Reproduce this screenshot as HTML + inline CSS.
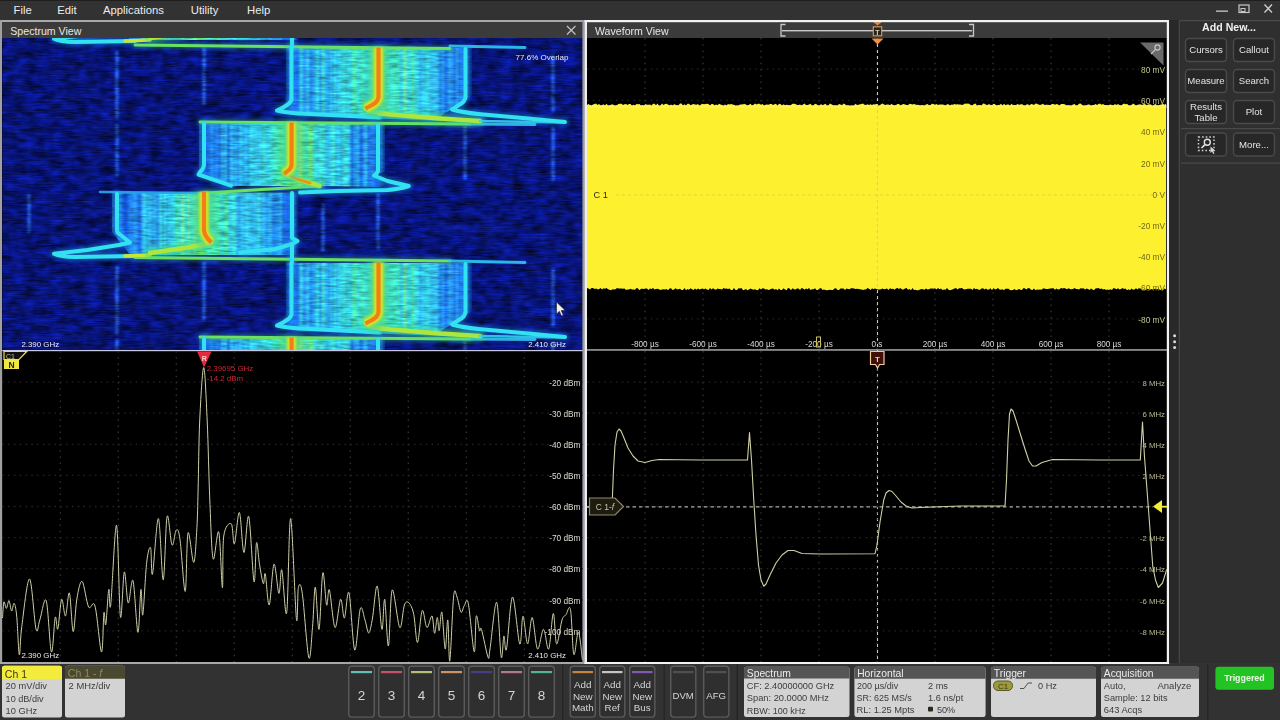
<!DOCTYPE html>
<html><head><meta charset="utf-8"><style>
html,body{margin:0;padding:0;background:#333;overflow:hidden;width:1280px;height:720px}
svg{display:block;font-family:"Liberation Sans", sans-serif}
</style></head><body>
<svg width="1280" height="720" viewBox="0 0 1280 720">
<defs>

<filter id="texbg" x="0" y="0" width="1" height="1" filterUnits="objectBoundingBox" color-interpolation-filters="sRGB">
  <feTurbulence type="fractalNoise" baseFrequency="0.08 0.12" numOctaves="2" seed="11" result="n1"/>
  <feTurbulence type="fractalNoise" baseFrequency="0.06 0.7" numOctaves="2" seed="4" result="n2"/>
  <feComposite in="n1" in2="n2" operator="arithmetic" k1="0" k2="0.55" k3="0.45" k4="0" result="n"/>
  <feColorMatrix in="n" type="matrix" values="1 0 0 0 0  1 0 0 0 0  1 0 0 0 0  0 0 0 0 1" result="g"/>
  <feComposite in="SourceGraphic" in2="g" operator="arithmetic" k1="2.2" k2="-0.2" k3="0" k4="0"/>
</filter>
<filter id="texbr" x="0" y="0" width="1280" height="720" filterUnits="userSpaceOnUse" color-interpolation-filters="sRGB">
  <feTurbulence type="fractalNoise" baseFrequency="0.1 0.2" numOctaves="2" seed="8" result="n1"/>
  <feTurbulence type="fractalNoise" baseFrequency="0.07 0.55" numOctaves="2" seed="3" result="n2"/>
  <feComposite in="n1" in2="n2" operator="arithmetic" k1="0" k2="0.4" k3="0.6" k4="0" result="n"/>
  <feColorMatrix in="n" type="matrix" values="1 0 0 0 0  1 0 0 0 0  1 0 0 0 0  0 0 0 0 1" result="g"/>
  <feComposite in="SourceGraphic" in2="g" operator="arithmetic" k1="1.15" k2="0.43" k3="0" k4="0"/>
</filter>
<filter id="blur1" filterUnits="userSpaceOnUse" x="0" y="0" width="1280" height="720"><feGaussianBlur stdDeviation="1"/></filter>
<filter id="blur2" filterUnits="userSpaceOnUse" x="0" y="0" width="1280" height="720"><feGaussianBlur stdDeviation="2"/></filter>
<filter id="blur3" filterUnits="userSpaceOnUse" x="0" y="0" width="1280" height="720"><feGaussianBlur stdDeviation="3.5"/></filter>
<filter id="blurx" filterUnits="userSpaceOnUse" x="0" y="0" width="1280" height="720"><feGaussianBlur stdDeviation="0.9 0.3"/></filter>
<filter id="blur05" filterUnits="userSpaceOnUse" x="0" y="0" width="1280" height="720"><feGaussianBlur stdDeviation="0.6"/></filter>
<linearGradient id="grA" gradientUnits="userSpaceOnUse" x1="283" y1="0" x2="478" y2="0"><stop offset="0.000" stop-color="rgb(15,45,175)" stop-opacity="0.0"/><stop offset="0.036" stop-color="rgb(28,100,220)" stop-opacity="0.8"/><stop offset="0.103" stop-color="rgb(35,135,230)" stop-opacity="1"/><stop offset="0.231" stop-color="rgb(52,185,235)" stop-opacity="1"/><stop offset="0.385" stop-color="rgb(55,208,205)" stop-opacity="1"/><stop offset="0.487" stop-color="rgb(62,216,175)" stop-opacity="1"/><stop offset="0.590" stop-color="rgb(55,208,205)" stop-opacity="1"/><stop offset="0.744" stop-color="rgb(52,185,235)" stop-opacity="1"/><stop offset="0.872" stop-color="rgb(35,135,230)" stop-opacity="1"/><stop offset="0.938" stop-color="rgb(28,100,220)" stop-opacity="0.8"/><stop offset="1.000" stop-color="rgb(15,45,175)" stop-opacity="0.0"/></linearGradient><linearGradient id="grB" gradientUnits="userSpaceOnUse" x1="196" y1="0" x2="391" y2="0"><stop offset="0.000" stop-color="rgb(15,45,175)" stop-opacity="0.0"/><stop offset="0.036" stop-color="rgb(28,100,220)" stop-opacity="0.8"/><stop offset="0.103" stop-color="rgb(35,135,230)" stop-opacity="1"/><stop offset="0.231" stop-color="rgb(52,185,235)" stop-opacity="1"/><stop offset="0.385" stop-color="rgb(55,208,205)" stop-opacity="1"/><stop offset="0.487" stop-color="rgb(62,216,175)" stop-opacity="1"/><stop offset="0.590" stop-color="rgb(55,208,205)" stop-opacity="1"/><stop offset="0.744" stop-color="rgb(52,185,235)" stop-opacity="1"/><stop offset="0.872" stop-color="rgb(35,135,230)" stop-opacity="1"/><stop offset="0.938" stop-color="rgb(28,100,220)" stop-opacity="0.8"/><stop offset="1.000" stop-color="rgb(15,45,175)" stop-opacity="0.0"/></linearGradient><linearGradient id="grC" gradientUnits="userSpaceOnUse" x1="109" y1="0" x2="304" y2="0"><stop offset="0.000" stop-color="rgb(15,45,175)" stop-opacity="0.0"/><stop offset="0.036" stop-color="rgb(28,100,220)" stop-opacity="0.8"/><stop offset="0.103" stop-color="rgb(35,135,230)" stop-opacity="1"/><stop offset="0.231" stop-color="rgb(52,185,235)" stop-opacity="1"/><stop offset="0.385" stop-color="rgb(55,208,205)" stop-opacity="1"/><stop offset="0.487" stop-color="rgb(62,216,175)" stop-opacity="1"/><stop offset="0.590" stop-color="rgb(55,208,205)" stop-opacity="1"/><stop offset="0.744" stop-color="rgb(52,185,235)" stop-opacity="1"/><stop offset="0.872" stop-color="rgb(35,135,230)" stop-opacity="1"/><stop offset="0.938" stop-color="rgb(28,100,220)" stop-opacity="0.8"/><stop offset="1.000" stop-color="rgb(15,45,175)" stop-opacity="0.0"/></linearGradient>
<clipPath id="specclip"><rect x="2.3" y="38" width="580.2" height="312"/></clipPath>
</defs>
<rect x="0" y="0" width="1280" height="720" fill="#333333"/>
<rect x="0" y="0" width="1280" height="20" fill="#323232"/>
<rect x="0" y="0" width="1280" height="1" fill="#1e1e1e"/>
<text x="13.6" y="14.2" font-size="11.3" fill="#ececec" font-weight="400" text-anchor="start" >File</text>
<text x="57.2" y="14.2" font-size="11.3" fill="#ececec" font-weight="400" text-anchor="start" >Edit</text>
<text x="103" y="14.2" font-size="11.3" fill="#ececec" font-weight="400" text-anchor="start" >Applications</text>
<text x="190.8" y="14.2" font-size="11.3" fill="#ececec" font-weight="400" text-anchor="start" >Utility</text>
<text x="247" y="14.2" font-size="11.3" fill="#ececec" font-weight="400" text-anchor="start" >Help</text>
<rect x="1216" y="10.5" width="12" height="1.3" fill="#c8c8c8"/>
<rect x="1239" y="5" width="10" height="7.5" fill="none" stroke="#c8c8c8" stroke-width="1.2"/>
<rect x="1241" y="8.5" width="4" height="3" fill="none" stroke="#c8c8c8" stroke-width="1"/>
<path d="M1264.5 4.5 L1272 12.5 M1272 4.5 L1264.5 12.5" stroke="#d0d0d0" stroke-width="1.3"/>
<rect x="0" y="20" width="585" height="2" fill="#a9a9a9"/>
<rect x="0" y="20" width="2.3" height="644" fill="#a0a0a0"/>
<rect x="2" y="22" width="581" height="16" fill="#3b3b3b"/>
<text x="10.3" y="34.6" font-size="10.6" fill="#e6e6e6" font-weight="400" text-anchor="start" >Spectrum View</text>
<path d="M567 26 L575.5 34.5 M575.5 26 L567 34.5" stroke="#c0c0c0" stroke-width="1.3"/>
<g clip-path="url(#specclip)"><g filter="url(#texbg)">
<rect x="2.3" y="38" width="580.2" height="312" fill="rgb(9,22,130)"/>
<path d="M117 -163 L117 -97" fill="none" stroke="rgb(50,120,255)" stroke-width="3.2" stroke-opacity="0.7" stroke-linecap="round" stroke-linejoin="round" filter="url(#blur1)"/>
<path d="M204 -167 L204 -111" fill="none" stroke="rgb(50,120,255)" stroke-width="3.2" stroke-opacity="0.7" stroke-linecap="round" stroke-linejoin="round" filter="url(#blur1)"/>
<path d="M553 -160 L553 -105" fill="none" stroke="rgb(50,120,255)" stroke-width="3.2" stroke-opacity="0.7" stroke-linecap="round" stroke-linejoin="round" filter="url(#blur1)"/>
<path d="M117 -90 L117 -40" fill="none" stroke="rgb(50,120,255)" stroke-width="3.2" stroke-opacity="0.7" stroke-linecap="round" stroke-linejoin="round" filter="url(#blur1)"/>
<path d="M465 -89 L465 -37" fill="none" stroke="rgb(50,120,255)" stroke-width="3.2" stroke-opacity="0.7" stroke-linecap="round" stroke-linejoin="round" filter="url(#blur1)"/>
<path d="M553 -87 L553 -35" fill="none" stroke="rgb(50,120,255)" stroke-width="3.2" stroke-opacity="0.7" stroke-linecap="round" stroke-linejoin="round" filter="url(#blur1)"/>
<path d="M29 -20 L29 17" fill="none" stroke="rgb(50,120,255)" stroke-width="3.2" stroke-opacity="0.7" stroke-linecap="round" stroke-linejoin="round" filter="url(#blur1)"/>
<path d="M323 -10 L323 35" fill="none" stroke="rgb(50,120,255)" stroke-width="3.2" stroke-opacity="0.7" stroke-linecap="round" stroke-linejoin="round" filter="url(#blur1)"/>
<path d="M378 -20 L378 33" fill="none" stroke="rgb(50,120,255)" stroke-width="3.2" stroke-opacity="0.7" stroke-linecap="round" stroke-linejoin="round" filter="url(#blur1)"/>
<path d="M117 52 L117 118" fill="none" stroke="rgb(50,120,255)" stroke-width="3.2" stroke-opacity="0.7" stroke-linecap="round" stroke-linejoin="round" filter="url(#blur1)"/>
<path d="M204 48 L204 104" fill="none" stroke="rgb(50,120,255)" stroke-width="3.2" stroke-opacity="0.7" stroke-linecap="round" stroke-linejoin="round" filter="url(#blur1)"/>
<path d="M553 55 L553 110" fill="none" stroke="rgb(50,120,255)" stroke-width="3.2" stroke-opacity="0.7" stroke-linecap="round" stroke-linejoin="round" filter="url(#blur1)"/>
<path d="M117 125 L117 175" fill="none" stroke="rgb(50,120,255)" stroke-width="3.2" stroke-opacity="0.7" stroke-linecap="round" stroke-linejoin="round" filter="url(#blur1)"/>
<path d="M465 126 L465 178" fill="none" stroke="rgb(50,120,255)" stroke-width="3.2" stroke-opacity="0.7" stroke-linecap="round" stroke-linejoin="round" filter="url(#blur1)"/>
<path d="M553 128 L553 180" fill="none" stroke="rgb(50,120,255)" stroke-width="3.2" stroke-opacity="0.7" stroke-linecap="round" stroke-linejoin="round" filter="url(#blur1)"/>
<path d="M29 195 L29 232" fill="none" stroke="rgb(50,120,255)" stroke-width="3.2" stroke-opacity="0.7" stroke-linecap="round" stroke-linejoin="round" filter="url(#blur1)"/>
<path d="M323 205 L323 250" fill="none" stroke="rgb(50,120,255)" stroke-width="3.2" stroke-opacity="0.7" stroke-linecap="round" stroke-linejoin="round" filter="url(#blur1)"/>
<path d="M378 195 L378 248" fill="none" stroke="rgb(50,120,255)" stroke-width="3.2" stroke-opacity="0.7" stroke-linecap="round" stroke-linejoin="round" filter="url(#blur1)"/>
<path d="M117 267 L117 333" fill="none" stroke="rgb(50,120,255)" stroke-width="3.2" stroke-opacity="0.7" stroke-linecap="round" stroke-linejoin="round" filter="url(#blur1)"/>
<path d="M204 263 L204 319" fill="none" stroke="rgb(50,120,255)" stroke-width="3.2" stroke-opacity="0.7" stroke-linecap="round" stroke-linejoin="round" filter="url(#blur1)"/>
<path d="M553 270 L553 325" fill="none" stroke="rgb(50,120,255)" stroke-width="3.2" stroke-opacity="0.7" stroke-linecap="round" stroke-linejoin="round" filter="url(#blur1)"/>
<path d="M117 340 L117 390" fill="none" stroke="rgb(50,120,255)" stroke-width="3.2" stroke-opacity="0.7" stroke-linecap="round" stroke-linejoin="round" filter="url(#blur1)"/>
<path d="M465 341 L465 393" fill="none" stroke="rgb(50,120,255)" stroke-width="3.2" stroke-opacity="0.7" stroke-linecap="round" stroke-linejoin="round" filter="url(#blur1)"/>
<path d="M553 343 L553 395" fill="none" stroke="rgb(50,120,255)" stroke-width="3.2" stroke-opacity="0.7" stroke-linecap="round" stroke-linejoin="round" filter="url(#blur1)"/>
<path d="M29 410 L29 447" fill="none" stroke="rgb(50,120,255)" stroke-width="3.2" stroke-opacity="0.7" stroke-linecap="round" stroke-linejoin="round" filter="url(#blur1)"/>
<path d="M323 420 L323 465" fill="none" stroke="rgb(50,120,255)" stroke-width="3.2" stroke-opacity="0.7" stroke-linecap="round" stroke-linejoin="round" filter="url(#blur1)"/>
<path d="M378 410 L378 463" fill="none" stroke="rgb(50,120,255)" stroke-width="3.2" stroke-opacity="0.7" stroke-linecap="round" stroke-linejoin="round" filter="url(#blur1)"/>
</g>
<clipPath id="clA0"><path d="M 286 -167 L 472 -167 L 472 -119 L 452 -106 L 440 -98.5 L 300 -98.5 L 276 -105 L 286 -113 Z"/></clipPath>
<clipPath id="clB0"><path d="M 199 -91.5 L 385 -91.5 L 385 -43 L 373 -40 L 390 -33 L 380 -28 L 319.5 -29 L 231 -29 L 199 -41 Z"/></clipPath>
<clipPath id="clC0"><path d="M 112 -22.5 L 298 -22.5 L 298 40 L 130 40 L 112 17 Z"/></clipPath>
<clipPath id="clA215"><path d="M 286 48 L 472 48 L 472 96 L 452 109 L 440 116.5 L 300 116.5 L 276 110 L 286 102 Z"/></clipPath>
<clipPath id="clB215"><path d="M 199 123.5 L 385 123.5 L 385 172 L 373 175 L 390 182 L 380 187 L 319.5 186 L 231 186 L 199 174 Z"/></clipPath>
<clipPath id="clC215"><path d="M 112 192.5 L 298 192.5 L 298 255 L 130 255 L 112 232 Z"/></clipPath>
<clipPath id="clA430"><path d="M 286 263 L 472 263 L 472 311 L 452 324 L 440 331.5 L 300 331.5 L 276 325 L 286 317 Z"/></clipPath>
<clipPath id="clB430"><path d="M 199 338.5 L 385 338.5 L 385 387 L 373 390 L 390 397 L 380 402 L 319.5 401 L 231 401 L 199 389 Z"/></clipPath>
<clipPath id="clC430"><path d="M 112 407.5 L 298 407.5 L 298 470 L 130 470 L 112 447 Z"/></clipPath>
<g filter="url(#texbr)">
<g clip-path="url(#clA0)"><g filter="url(#blurx)">
<rect x="282" y="-169" width="2.05" height="74" fill="rgb(31,115,231)" fill-opacity="0.30"/>
<rect x="284" y="-169" width="2.05" height="74" fill="rgb(32,119,231)" fill-opacity="0.50"/>
<rect x="286" y="-169" width="2.05" height="74" fill="rgb(20,64,210)" fill-opacity="0.70"/>
<rect x="288" y="-169" width="2.05" height="74" fill="rgb(25,87,220)" fill-opacity="0.90"/>
<rect x="290" y="-169" width="2.05" height="74" fill="rgb(28,102,227)" fill-opacity="1.00"/>
<rect x="292" y="-169" width="2.05" height="74" fill="rgb(29,105,228)" fill-opacity="1.00"/>
<rect x="294" y="-169" width="2.05" height="74" fill="rgb(29,106,228)" fill-opacity="1.00"/>
<rect x="296" y="-169" width="2.05" height="74" fill="rgb(30,109,230)" fill-opacity="1.00"/>
<rect x="298" y="-169" width="2.05" height="74" fill="rgb(34,124,232)" fill-opacity="1.00"/>
<rect x="300" y="-169" width="2.05" height="74" fill="rgb(56,211,222)" fill-opacity="1.00"/>
<rect x="302" y="-169" width="2.05" height="74" fill="rgb(42,159,237)" fill-opacity="1.00"/>
<rect x="304" y="-169" width="2.05" height="74" fill="rgb(37,136,233)" fill-opacity="1.00"/>
<rect x="306" y="-169" width="2.05" height="74" fill="rgb(48,183,234)" fill-opacity="1.00"/>
<rect x="308" y="-169" width="2.05" height="74" fill="rgb(45,168,238)" fill-opacity="1.00"/>
<rect x="310" y="-169" width="2.05" height="74" fill="rgb(32,116,231)" fill-opacity="1.00"/>
<rect x="312" y="-169" width="2.05" height="74" fill="rgb(43,163,237)" fill-opacity="1.00"/>
<rect x="314" y="-169" width="2.05" height="74" fill="rgb(43,161,237)" fill-opacity="1.00"/>
<rect x="316" y="-169" width="2.05" height="74" fill="rgb(57,212,217)" fill-opacity="1.00"/>
<rect x="318" y="-169" width="2.05" height="74" fill="rgb(47,179,235)" fill-opacity="1.00"/>
<rect x="320" y="-169" width="2.05" height="74" fill="rgb(38,140,234)" fill-opacity="1.00"/>
<rect x="322" y="-169" width="2.05" height="74" fill="rgb(67,220,174)" fill-opacity="1.00"/>
<rect x="324" y="-169" width="2.05" height="74" fill="rgb(46,174,237)" fill-opacity="1.00"/>
<rect x="326" y="-169" width="2.05" height="74" fill="rgb(46,174,237)" fill-opacity="1.00"/>
<rect x="328" y="-169" width="2.05" height="74" fill="rgb(39,146,235)" fill-opacity="1.00"/>
<rect x="330" y="-169" width="2.05" height="74" fill="rgb(52,198,229)" fill-opacity="1.00"/>
<rect x="332" y="-169" width="2.05" height="74" fill="rgb(43,161,237)" fill-opacity="1.00"/>
<rect x="334" y="-169" width="2.05" height="74" fill="rgb(57,212,215)" fill-opacity="1.00"/>
<rect x="336" y="-169" width="2.05" height="74" fill="rgb(45,170,238)" fill-opacity="1.00"/>
<rect x="338" y="-169" width="2.05" height="74" fill="rgb(55,209,225)" fill-opacity="1.00"/>
<rect x="340" y="-169" width="2.05" height="74" fill="rgb(53,202,228)" fill-opacity="1.00"/>
<rect x="342" y="-169" width="2.05" height="74" fill="rgb(56,211,221)" fill-opacity="1.00"/>
<rect x="344" y="-169" width="2.05" height="74" fill="rgb(60,215,202)" fill-opacity="1.00"/>
<rect x="346" y="-169" width="2.05" height="74" fill="rgb(51,193,230)" fill-opacity="1.00"/>
<rect x="348" y="-169" width="2.05" height="74" fill="rgb(60,215,204)" fill-opacity="1.00"/>
<rect x="350" y="-169" width="2.05" height="74" fill="rgb(51,194,230)" fill-opacity="1.00"/>
<rect x="352" y="-169" width="2.05" height="74" fill="rgb(70,221,166)" fill-opacity="1.00"/>
<rect x="354" y="-169" width="2.05" height="74" fill="rgb(70,221,167)" fill-opacity="1.00"/>
<rect x="356" y="-169" width="2.05" height="74" fill="rgb(61,216,198)" fill-opacity="1.00"/>
<rect x="358" y="-169" width="2.05" height="74" fill="rgb(56,211,220)" fill-opacity="1.00"/>
<rect x="360" y="-169" width="2.05" height="74" fill="rgb(62,217,192)" fill-opacity="1.00"/>
<rect x="362" y="-169" width="2.05" height="74" fill="rgb(69,221,169)" fill-opacity="1.00"/>
<rect x="364" y="-169" width="2.05" height="74" fill="rgb(58,213,209)" fill-opacity="1.00"/>
<rect x="366" y="-169" width="2.05" height="74" fill="rgb(52,200,228)" fill-opacity="1.00"/>
<rect x="368" y="-169" width="2.05" height="74" fill="rgb(68,221,171)" fill-opacity="1.00"/>
<rect x="370" y="-169" width="2.05" height="74" fill="rgb(70,221,165)" fill-opacity="1.00"/>
<rect x="372" y="-169" width="2.05" height="74" fill="rgb(182,229,51)" fill-opacity="1.00"/>
<rect x="374" y="-169" width="2.05" height="74" fill="rgb(80,223,137)" fill-opacity="1.00"/>
<rect x="376" y="-169" width="2.05" height="74" fill="rgb(58,213,210)" fill-opacity="1.00"/>
<rect x="378" y="-169" width="2.05" height="74" fill="rgb(82,223,133)" fill-opacity="1.00"/>
<rect x="380" y="-169" width="2.05" height="74" fill="rgb(62,217,192)" fill-opacity="1.00"/>
<rect x="382" y="-169" width="2.05" height="74" fill="rgb(126,227,87)" fill-opacity="1.00"/>
<rect x="384" y="-169" width="2.05" height="74" fill="rgb(82,223,132)" fill-opacity="1.00"/>
<rect x="386" y="-169" width="2.05" height="74" fill="rgb(60,215,201)" fill-opacity="1.00"/>
<rect x="388" y="-169" width="2.05" height="74" fill="rgb(69,221,168)" fill-opacity="1.00"/>
<rect x="390" y="-169" width="2.05" height="74" fill="rgb(58,213,213)" fill-opacity="1.00"/>
<rect x="392" y="-169" width="2.05" height="74" fill="rgb(64,219,187)" fill-opacity="1.00"/>
<rect x="394" y="-169" width="2.05" height="74" fill="rgb(65,220,182)" fill-opacity="1.00"/>
<rect x="396" y="-169" width="2.05" height="74" fill="rgb(60,215,203)" fill-opacity="1.00"/>
<rect x="398" y="-169" width="2.05" height="74" fill="rgb(67,220,175)" fill-opacity="1.00"/>
<rect x="400" y="-169" width="2.05" height="74" fill="rgb(51,192,231)" fill-opacity="1.00"/>
<rect x="402" y="-169" width="2.05" height="74" fill="rgb(56,211,219)" fill-opacity="1.00"/>
<rect x="404" y="-169" width="2.05" height="74" fill="rgb(114,226,95)" fill-opacity="1.00"/>
<rect x="406" y="-169" width="2.05" height="74" fill="rgb(56,211,221)" fill-opacity="1.00"/>
<rect x="408" y="-169" width="2.05" height="74" fill="rgb(54,207,226)" fill-opacity="1.00"/>
<rect x="410" y="-169" width="2.05" height="74" fill="rgb(60,215,203)" fill-opacity="1.00"/>
<rect x="412" y="-169" width="2.05" height="74" fill="rgb(74,222,154)" fill-opacity="1.00"/>
<rect x="414" y="-169" width="2.05" height="74" fill="rgb(55,210,223)" fill-opacity="1.00"/>
<rect x="416" y="-169" width="2.05" height="74" fill="rgb(57,212,217)" fill-opacity="1.00"/>
<rect x="418" y="-169" width="2.05" height="74" fill="rgb(50,189,232)" fill-opacity="1.00"/>
<rect x="420" y="-169" width="2.05" height="74" fill="rgb(45,171,238)" fill-opacity="1.00"/>
<rect x="422" y="-169" width="2.05" height="74" fill="rgb(54,205,226)" fill-opacity="1.00"/>
<rect x="424" y="-169" width="2.05" height="74" fill="rgb(49,188,232)" fill-opacity="1.00"/>
<rect x="426" y="-169" width="2.05" height="74" fill="rgb(56,211,222)" fill-opacity="1.00"/>
<rect x="428" y="-169" width="2.05" height="74" fill="rgb(53,203,227)" fill-opacity="1.00"/>
<rect x="430" y="-169" width="2.05" height="74" fill="rgb(48,182,234)" fill-opacity="1.00"/>
<rect x="432" y="-169" width="2.05" height="74" fill="rgb(49,184,233)" fill-opacity="1.00"/>
<rect x="434" y="-169" width="2.05" height="74" fill="rgb(49,187,232)" fill-opacity="1.00"/>
<rect x="436" y="-169" width="2.05" height="74" fill="rgb(50,189,232)" fill-opacity="1.00"/>
<rect x="438" y="-169" width="2.05" height="74" fill="rgb(39,145,235)" fill-opacity="1.00"/>
<rect x="440" y="-169" width="2.05" height="74" fill="rgb(34,125,232)" fill-opacity="1.00"/>
<rect x="442" y="-169" width="2.05" height="74" fill="rgb(43,160,237)" fill-opacity="1.00"/>
<rect x="444" y="-169" width="2.05" height="74" fill="rgb(31,115,231)" fill-opacity="1.00"/>
<rect x="446" y="-169" width="2.05" height="74" fill="rgb(31,113,230)" fill-opacity="1.00"/>
<rect x="448" y="-169" width="2.05" height="74" fill="rgb(42,158,236)" fill-opacity="1.00"/>
<rect x="450" y="-169" width="2.05" height="74" fill="rgb(41,152,236)" fill-opacity="1.00"/>
<rect x="452" y="-169" width="2.05" height="74" fill="rgb(36,134,233)" fill-opacity="1.00"/>
<rect x="454" y="-169" width="2.05" height="74" fill="rgb(29,104,227)" fill-opacity="1.00"/>
<rect x="456" y="-169" width="2.05" height="74" fill="rgb(44,166,237)" fill-opacity="1.00"/>
<rect x="458" y="-169" width="2.05" height="74" fill="rgb(30,109,230)" fill-opacity="1.00"/>
<rect x="460" y="-169" width="2.05" height="74" fill="rgb(34,125,232)" fill-opacity="1.00"/>
<rect x="462" y="-169" width="2.05" height="74" fill="rgb(29,106,228)" fill-opacity="1.00"/>
<rect x="464" y="-169" width="2.05" height="74" fill="rgb(27,94,223)" fill-opacity="1.00"/>
<rect x="466" y="-169" width="2.05" height="74" fill="rgb(23,75,215)" fill-opacity="0.90"/>
<rect x="468" y="-169" width="2.05" height="74" fill="rgb(24,81,218)" fill-opacity="0.70"/>
<rect x="470" y="-169" width="2.05" height="74" fill="rgb(23,80,217)" fill-opacity="0.50"/>
<rect x="472" y="-169" width="2.05" height="74" fill="rgb(20,63,210)" fill-opacity="0.30"/>
<rect x="474" y="-169" width="2.05" height="74" fill="rgb(27,95,224)" fill-opacity="0.10"/>
<rect x="476" y="-169" width="2.05" height="74" fill="rgb(32,119,231)" fill-opacity="0.00"/>
</g></g>
<g clip-path="url(#clB0)"><g filter="url(#blurx)">
<rect x="195" y="-94" width="2.05" height="69" fill="rgb(49,184,233)" fill-opacity="0.30"/>
<rect x="197" y="-94" width="2.05" height="69" fill="rgb(30,110,230)" fill-opacity="0.50"/>
<rect x="199" y="-94" width="2.05" height="69" fill="rgb(29,104,228)" fill-opacity="0.70"/>
<rect x="201" y="-94" width="2.05" height="69" fill="rgb(19,57,207)" fill-opacity="0.90"/>
<rect x="203" y="-94" width="2.05" height="69" fill="rgb(23,75,215)" fill-opacity="1.00"/>
<rect x="205" y="-94" width="2.05" height="69" fill="rgb(25,84,219)" fill-opacity="1.00"/>
<rect x="207" y="-94" width="2.05" height="69" fill="rgb(25,87,220)" fill-opacity="1.00"/>
<rect x="209" y="-94" width="2.05" height="69" fill="rgb(33,122,232)" fill-opacity="1.00"/>
<rect x="211" y="-94" width="2.05" height="69" fill="rgb(39,148,235)" fill-opacity="1.00"/>
<rect x="213" y="-94" width="2.05" height="69" fill="rgb(30,110,230)" fill-opacity="1.00"/>
<rect x="215" y="-94" width="2.05" height="69" fill="rgb(35,132,233)" fill-opacity="1.00"/>
<rect x="217" y="-94" width="2.05" height="69" fill="rgb(36,132,233)" fill-opacity="1.00"/>
<rect x="219" y="-94" width="2.05" height="69" fill="rgb(27,98,225)" fill-opacity="1.00"/>
<rect x="221" y="-94" width="2.05" height="69" fill="rgb(47,177,236)" fill-opacity="1.00"/>
<rect x="223" y="-94" width="2.05" height="69" fill="rgb(39,146,235)" fill-opacity="1.00"/>
<rect x="225" y="-94" width="2.05" height="69" fill="rgb(51,193,231)" fill-opacity="1.00"/>
<rect x="227" y="-94" width="2.05" height="69" fill="rgb(21,69,212)" fill-opacity="1.00"/>
<rect x="229" y="-94" width="2.05" height="69" fill="rgb(41,154,236)" fill-opacity="1.00"/>
<rect x="231" y="-94" width="2.05" height="69" fill="rgb(50,192,231)" fill-opacity="1.00"/>
<rect x="233" y="-94" width="2.05" height="69" fill="rgb(37,140,234)" fill-opacity="1.00"/>
<rect x="235" y="-94" width="2.05" height="69" fill="rgb(46,175,236)" fill-opacity="1.00"/>
<rect x="237" y="-94" width="2.05" height="69" fill="rgb(35,131,233)" fill-opacity="1.00"/>
<rect x="239" y="-94" width="2.05" height="69" fill="rgb(50,189,232)" fill-opacity="1.00"/>
<rect x="241" y="-94" width="2.05" height="69" fill="rgb(47,179,235)" fill-opacity="1.00"/>
<rect x="243" y="-94" width="2.05" height="69" fill="rgb(43,160,237)" fill-opacity="1.00"/>
<rect x="245" y="-94" width="2.05" height="69" fill="rgb(51,193,230)" fill-opacity="1.00"/>
<rect x="247" y="-94" width="2.05" height="69" fill="rgb(40,150,235)" fill-opacity="1.00"/>
<rect x="249" y="-94" width="2.05" height="69" fill="rgb(51,193,230)" fill-opacity="1.00"/>
<rect x="251" y="-94" width="2.05" height="69" fill="rgb(56,211,221)" fill-opacity="1.00"/>
<rect x="253" y="-94" width="2.05" height="69" fill="rgb(49,187,232)" fill-opacity="1.00"/>
<rect x="255" y="-94" width="2.05" height="69" fill="rgb(52,198,229)" fill-opacity="1.00"/>
<rect x="257" y="-94" width="2.05" height="69" fill="rgb(48,184,233)" fill-opacity="1.00"/>
<rect x="259" y="-94" width="2.05" height="69" fill="rgb(53,204,227)" fill-opacity="1.00"/>
<rect x="261" y="-94" width="2.05" height="69" fill="rgb(52,199,228)" fill-opacity="1.00"/>
<rect x="263" y="-94" width="2.05" height="69" fill="rgb(60,215,200)" fill-opacity="1.00"/>
<rect x="265" y="-94" width="2.05" height="69" fill="rgb(54,206,226)" fill-opacity="1.00"/>
<rect x="267" y="-94" width="2.05" height="69" fill="rgb(51,195,230)" fill-opacity="1.00"/>
<rect x="269" y="-94" width="2.05" height="69" fill="rgb(58,213,211)" fill-opacity="1.00"/>
<rect x="271" y="-94" width="2.05" height="69" fill="rgb(57,212,214)" fill-opacity="1.00"/>
<rect x="273" y="-94" width="2.05" height="69" fill="rgb(64,219,184)" fill-opacity="1.00"/>
<rect x="275" y="-94" width="2.05" height="69" fill="rgb(64,219,185)" fill-opacity="1.00"/>
<rect x="277" y="-94" width="2.05" height="69" fill="rgb(65,220,182)" fill-opacity="1.00"/>
<rect x="279" y="-94" width="2.05" height="69" fill="rgb(77,222,145)" fill-opacity="1.00"/>
<rect x="281" y="-94" width="2.05" height="69" fill="rgb(94,225,108)" fill-opacity="1.00"/>
<rect x="283" y="-94" width="2.05" height="69" fill="rgb(66,220,177)" fill-opacity="1.00"/>
<rect x="285" y="-94" width="2.05" height="69" fill="rgb(65,220,181)" fill-opacity="1.00"/>
<rect x="287" y="-94" width="2.05" height="69" fill="rgb(88,225,115)" fill-opacity="1.00"/>
<rect x="289" y="-94" width="2.05" height="69" fill="rgb(86,224,121)" fill-opacity="1.00"/>
<rect x="291" y="-94" width="2.05" height="69" fill="rgb(83,224,130)" fill-opacity="1.00"/>
<rect x="293" y="-94" width="2.05" height="69" fill="rgb(135,227,81)" fill-opacity="1.00"/>
<rect x="295" y="-94" width="2.05" height="69" fill="rgb(87,224,119)" fill-opacity="1.00"/>
<rect x="297" y="-94" width="2.05" height="69" fill="rgb(75,222,152)" fill-opacity="1.00"/>
<rect x="299" y="-94" width="2.05" height="69" fill="rgb(207,213,36)" fill-opacity="1.00"/>
<rect x="301" y="-94" width="2.05" height="69" fill="rgb(87,224,118)" fill-opacity="1.00"/>
<rect x="303" y="-94" width="2.05" height="69" fill="rgb(79,223,141)" fill-opacity="1.00"/>
<rect x="305" y="-94" width="2.05" height="69" fill="rgb(68,221,172)" fill-opacity="1.00"/>
<rect x="307" y="-94" width="2.05" height="69" fill="rgb(64,219,185)" fill-opacity="1.00"/>
<rect x="309" y="-94" width="2.05" height="69" fill="rgb(114,226,94)" fill-opacity="1.00"/>
<rect x="311" y="-94" width="2.05" height="69" fill="rgb(83,224,128)" fill-opacity="1.00"/>
<rect x="313" y="-94" width="2.05" height="69" fill="rgb(57,212,215)" fill-opacity="1.00"/>
<rect x="315" y="-94" width="2.05" height="69" fill="rgb(60,215,202)" fill-opacity="1.00"/>
<rect x="317" y="-94" width="2.05" height="69" fill="rgb(51,193,231)" fill-opacity="1.00"/>
<rect x="319" y="-94" width="2.05" height="69" fill="rgb(62,217,195)" fill-opacity="1.00"/>
<rect x="321" y="-94" width="2.05" height="69" fill="rgb(55,210,224)" fill-opacity="1.00"/>
<rect x="323" y="-94" width="2.05" height="69" fill="rgb(62,217,194)" fill-opacity="1.00"/>
<rect x="325" y="-94" width="2.05" height="69" fill="rgb(49,184,233)" fill-opacity="1.00"/>
<rect x="327" y="-94" width="2.05" height="69" fill="rgb(49,186,233)" fill-opacity="1.00"/>
<rect x="329" y="-94" width="2.05" height="69" fill="rgb(52,199,229)" fill-opacity="1.00"/>
<rect x="331" y="-94" width="2.05" height="69" fill="rgb(55,209,225)" fill-opacity="1.00"/>
<rect x="333" y="-94" width="2.05" height="69" fill="rgb(64,219,186)" fill-opacity="1.00"/>
<rect x="335" y="-94" width="2.05" height="69" fill="rgb(46,172,237)" fill-opacity="1.00"/>
<rect x="337" y="-94" width="2.05" height="69" fill="rgb(54,208,226)" fill-opacity="1.00"/>
<rect x="339" y="-94" width="2.05" height="69" fill="rgb(51,195,230)" fill-opacity="1.00"/>
<rect x="341" y="-94" width="2.05" height="69" fill="rgb(46,175,236)" fill-opacity="1.00"/>
<rect x="343" y="-94" width="2.05" height="69" fill="rgb(62,217,192)" fill-opacity="1.00"/>
<rect x="345" y="-94" width="2.05" height="69" fill="rgb(54,207,226)" fill-opacity="1.00"/>
<rect x="347" y="-94" width="2.05" height="69" fill="rgb(56,211,221)" fill-opacity="1.00"/>
<rect x="349" y="-94" width="2.05" height="69" fill="rgb(45,168,238)" fill-opacity="1.00"/>
<rect x="351" y="-94" width="2.05" height="69" fill="rgb(25,89,221)" fill-opacity="1.00"/>
<rect x="353" y="-94" width="2.05" height="69" fill="rgb(40,151,236)" fill-opacity="1.00"/>
<rect x="355" y="-94" width="2.05" height="69" fill="rgb(41,154,236)" fill-opacity="1.00"/>
<rect x="357" y="-94" width="2.05" height="69" fill="rgb(46,173,237)" fill-opacity="1.00"/>
<rect x="359" y="-94" width="2.05" height="69" fill="rgb(29,107,229)" fill-opacity="1.00"/>
<rect x="361" y="-94" width="2.05" height="69" fill="rgb(29,104,227)" fill-opacity="1.00"/>
<rect x="363" y="-94" width="2.05" height="69" fill="rgb(40,150,235)" fill-opacity="1.00"/>
<rect x="365" y="-94" width="2.05" height="69" fill="rgb(48,183,234)" fill-opacity="1.00"/>
<rect x="367" y="-94" width="2.05" height="69" fill="rgb(30,110,230)" fill-opacity="1.00"/>
<rect x="369" y="-94" width="2.05" height="69" fill="rgb(33,123,232)" fill-opacity="1.00"/>
<rect x="371" y="-94" width="2.05" height="69" fill="rgb(34,124,232)" fill-opacity="1.00"/>
<rect x="373" y="-94" width="2.05" height="69" fill="rgb(31,115,231)" fill-opacity="1.00"/>
<rect x="375" y="-94" width="2.05" height="69" fill="rgb(23,79,217)" fill-opacity="1.00"/>
<rect x="377" y="-94" width="2.05" height="69" fill="rgb(27,95,224)" fill-opacity="1.00"/>
<rect x="379" y="-94" width="2.05" height="69" fill="rgb(27,97,225)" fill-opacity="0.90"/>
<rect x="381" y="-94" width="2.05" height="69" fill="rgb(37,137,234)" fill-opacity="0.70"/>
<rect x="383" y="-94" width="2.05" height="69" fill="rgb(20,64,210)" fill-opacity="0.50"/>
<rect x="385" y="-94" width="2.05" height="69" fill="rgb(38,141,234)" fill-opacity="0.30"/>
<rect x="387" y="-94" width="2.05" height="69" fill="rgb(20,64,210)" fill-opacity="0.10"/>
<rect x="389" y="-94" width="2.05" height="69" fill="rgb(39,144,235)" fill-opacity="0.00"/>
</g></g>
<g clip-path="url(#clC0)"><g filter="url(#blurx)">
<rect x="108" y="-25" width="2.05" height="68" fill="rgb(25,89,221)" fill-opacity="0.30"/>
<rect x="110" y="-25" width="2.05" height="68" fill="rgb(31,114,231)" fill-opacity="0.50"/>
<rect x="112" y="-25" width="2.05" height="68" fill="rgb(33,121,231)" fill-opacity="0.70"/>
<rect x="114" y="-25" width="2.05" height="68" fill="rgb(24,81,218)" fill-opacity="0.90"/>
<rect x="116" y="-25" width="2.05" height="68" fill="rgb(27,97,224)" fill-opacity="1.00"/>
<rect x="118" y="-25" width="2.05" height="68" fill="rgb(32,120,231)" fill-opacity="1.00"/>
<rect x="120" y="-25" width="2.05" height="68" fill="rgb(33,121,231)" fill-opacity="1.00"/>
<rect x="122" y="-25" width="2.05" height="68" fill="rgb(26,90,221)" fill-opacity="1.00"/>
<rect x="124" y="-25" width="2.05" height="68" fill="rgb(25,86,220)" fill-opacity="1.00"/>
<rect x="126" y="-25" width="2.05" height="68" fill="rgb(25,87,220)" fill-opacity="1.00"/>
<rect x="128" y="-25" width="2.05" height="68" fill="rgb(33,121,231)" fill-opacity="1.00"/>
<rect x="130" y="-25" width="2.05" height="68" fill="rgb(33,122,232)" fill-opacity="1.00"/>
<rect x="132" y="-25" width="2.05" height="68" fill="rgb(36,134,233)" fill-opacity="1.00"/>
<rect x="134" y="-25" width="2.05" height="68" fill="rgb(39,147,235)" fill-opacity="1.00"/>
<rect x="136" y="-25" width="2.05" height="68" fill="rgb(36,135,233)" fill-opacity="1.00"/>
<rect x="138" y="-25" width="2.05" height="68" fill="rgb(28,99,225)" fill-opacity="1.00"/>
<rect x="140" y="-25" width="2.05" height="68" fill="rgb(32,117,231)" fill-opacity="1.00"/>
<rect x="142" y="-25" width="2.05" height="68" fill="rgb(48,183,234)" fill-opacity="1.00"/>
<rect x="144" y="-25" width="2.05" height="68" fill="rgb(54,205,227)" fill-opacity="1.00"/>
<rect x="146" y="-25" width="2.05" height="68" fill="rgb(43,161,237)" fill-opacity="1.00"/>
<rect x="148" y="-25" width="2.05" height="68" fill="rgb(50,192,231)" fill-opacity="1.00"/>
<rect x="150" y="-25" width="2.05" height="68" fill="rgb(45,172,237)" fill-opacity="1.00"/>
<rect x="152" y="-25" width="2.05" height="68" fill="rgb(42,157,236)" fill-opacity="1.00"/>
<rect x="154" y="-25" width="2.05" height="68" fill="rgb(48,181,234)" fill-opacity="1.00"/>
<rect x="156" y="-25" width="2.05" height="68" fill="rgb(38,142,234)" fill-opacity="1.00"/>
<rect x="158" y="-25" width="2.05" height="68" fill="rgb(44,167,238)" fill-opacity="1.00"/>
<rect x="160" y="-25" width="2.05" height="68" fill="rgb(60,215,201)" fill-opacity="1.00"/>
<rect x="162" y="-25" width="2.05" height="68" fill="rgb(38,140,234)" fill-opacity="1.00"/>
<rect x="164" y="-25" width="2.05" height="68" fill="rgb(61,216,199)" fill-opacity="1.00"/>
<rect x="166" y="-25" width="2.05" height="68" fill="rgb(43,160,237)" fill-opacity="1.00"/>
<rect x="168" y="-25" width="2.05" height="68" fill="rgb(52,199,229)" fill-opacity="1.00"/>
<rect x="170" y="-25" width="2.05" height="68" fill="rgb(51,192,231)" fill-opacity="1.00"/>
<rect x="172" y="-25" width="2.05" height="68" fill="rgb(54,206,226)" fill-opacity="1.00"/>
<rect x="174" y="-25" width="2.05" height="68" fill="rgb(57,212,215)" fill-opacity="1.00"/>
<rect x="176" y="-25" width="2.05" height="68" fill="rgb(66,220,176)" fill-opacity="1.00"/>
<rect x="178" y="-25" width="2.05" height="68" fill="rgb(63,218,190)" fill-opacity="1.00"/>
<rect x="180" y="-25" width="2.05" height="68" fill="rgb(55,209,225)" fill-opacity="1.00"/>
<rect x="182" y="-25" width="2.05" height="68" fill="rgb(120,226,91)" fill-opacity="1.00"/>
<rect x="184" y="-25" width="2.05" height="68" fill="rgb(58,213,213)" fill-opacity="1.00"/>
<rect x="186" y="-25" width="2.05" height="68" fill="rgb(59,214,209)" fill-opacity="1.00"/>
<rect x="188" y="-25" width="2.05" height="68" fill="rgb(109,226,98)" fill-opacity="1.00"/>
<rect x="190" y="-25" width="2.05" height="68" fill="rgb(54,208,226)" fill-opacity="1.00"/>
<rect x="192" y="-25" width="2.05" height="68" fill="rgb(68,221,173)" fill-opacity="1.00"/>
<rect x="194" y="-25" width="2.05" height="68" fill="rgb(130,227,85)" fill-opacity="1.00"/>
<rect x="196" y="-25" width="2.05" height="68" fill="rgb(77,222,146)" fill-opacity="1.00"/>
<rect x="198" y="-25" width="2.05" height="68" fill="rgb(87,224,118)" fill-opacity="1.00"/>
<rect x="200" y="-25" width="2.05" height="68" fill="rgb(132,227,83)" fill-opacity="1.00"/>
<rect x="202" y="-25" width="2.05" height="68" fill="rgb(83,224,129)" fill-opacity="1.00"/>
<rect x="204" y="-25" width="2.05" height="68" fill="rgb(87,224,120)" fill-opacity="1.00"/>
<rect x="206" y="-25" width="2.05" height="68" fill="rgb(66,220,176)" fill-opacity="1.00"/>
<rect x="208" y="-25" width="2.05" height="68" fill="rgb(64,219,186)" fill-opacity="1.00"/>
<rect x="210" y="-25" width="2.05" height="68" fill="rgb(62,217,195)" fill-opacity="1.00"/>
<rect x="212" y="-25" width="2.05" height="68" fill="rgb(87,224,119)" fill-opacity="1.00"/>
<rect x="214" y="-25" width="2.05" height="68" fill="rgb(64,219,183)" fill-opacity="1.00"/>
<rect x="216" y="-25" width="2.05" height="68" fill="rgb(69,221,169)" fill-opacity="1.00"/>
<rect x="218" y="-25" width="2.05" height="68" fill="rgb(78,223,142)" fill-opacity="1.00"/>
<rect x="220" y="-25" width="2.05" height="68" fill="rgb(59,214,207)" fill-opacity="1.00"/>
<rect x="222" y="-25" width="2.05" height="68" fill="rgb(59,214,208)" fill-opacity="1.00"/>
<rect x="224" y="-25" width="2.05" height="68" fill="rgb(70,221,167)" fill-opacity="1.00"/>
<rect x="226" y="-25" width="2.05" height="68" fill="rgb(76,222,149)" fill-opacity="1.00"/>
<rect x="228" y="-25" width="2.05" height="68" fill="rgb(53,201,228)" fill-opacity="1.00"/>
<rect x="230" y="-25" width="2.05" height="68" fill="rgb(52,198,229)" fill-opacity="1.00"/>
<rect x="232" y="-25" width="2.05" height="68" fill="rgb(63,218,187)" fill-opacity="1.00"/>
<rect x="234" y="-25" width="2.05" height="68" fill="rgb(55,210,224)" fill-opacity="1.00"/>
<rect x="236" y="-25" width="2.05" height="68" fill="rgb(48,184,234)" fill-opacity="1.00"/>
<rect x="238" y="-25" width="2.05" height="68" fill="rgb(41,156,236)" fill-opacity="1.00"/>
<rect x="240" y="-25" width="2.05" height="68" fill="rgb(49,186,233)" fill-opacity="1.00"/>
<rect x="242" y="-25" width="2.05" height="68" fill="rgb(49,188,232)" fill-opacity="1.00"/>
<rect x="244" y="-25" width="2.05" height="68" fill="rgb(47,177,236)" fill-opacity="1.00"/>
<rect x="246" y="-25" width="2.05" height="68" fill="rgb(55,208,226)" fill-opacity="1.00"/>
<rect x="248" y="-25" width="2.05" height="68" fill="rgb(50,188,232)" fill-opacity="1.00"/>
<rect x="250" y="-25" width="2.05" height="68" fill="rgb(48,181,235)" fill-opacity="1.00"/>
<rect x="252" y="-25" width="2.05" height="68" fill="rgb(47,177,236)" fill-opacity="1.00"/>
<rect x="254" y="-25" width="2.05" height="68" fill="rgb(50,191,231)" fill-opacity="1.00"/>
<rect x="256" y="-25" width="2.05" height="68" fill="rgb(48,183,234)" fill-opacity="1.00"/>
<rect x="258" y="-25" width="2.05" height="68" fill="rgb(60,215,205)" fill-opacity="1.00"/>
<rect x="260" y="-25" width="2.05" height="68" fill="rgb(42,159,237)" fill-opacity="1.00"/>
<rect x="262" y="-25" width="2.05" height="68" fill="rgb(48,181,234)" fill-opacity="1.00"/>
<rect x="264" y="-25" width="2.05" height="68" fill="rgb(45,170,238)" fill-opacity="1.00"/>
<rect x="266" y="-25" width="2.05" height="68" fill="rgb(38,142,234)" fill-opacity="1.00"/>
<rect x="268" y="-25" width="2.05" height="68" fill="rgb(45,172,237)" fill-opacity="1.00"/>
<rect x="270" y="-25" width="2.05" height="68" fill="rgb(46,173,237)" fill-opacity="1.00"/>
<rect x="272" y="-25" width="2.05" height="68" fill="rgb(33,124,232)" fill-opacity="1.00"/>
<rect x="274" y="-25" width="2.05" height="68" fill="rgb(36,133,233)" fill-opacity="1.00"/>
<rect x="276" y="-25" width="2.05" height="68" fill="rgb(37,140,234)" fill-opacity="1.00"/>
<rect x="278" y="-25" width="2.05" height="68" fill="rgb(39,146,235)" fill-opacity="1.00"/>
<rect x="280" y="-25" width="2.05" height="68" fill="rgb(46,175,236)" fill-opacity="1.00"/>
<rect x="282" y="-25" width="2.05" height="68" fill="rgb(27,96,224)" fill-opacity="1.00"/>
<rect x="284" y="-25" width="2.05" height="68" fill="rgb(32,116,231)" fill-opacity="1.00"/>
<rect x="286" y="-25" width="2.05" height="68" fill="rgb(26,90,222)" fill-opacity="1.00"/>
<rect x="288" y="-25" width="2.05" height="68" fill="rgb(24,83,219)" fill-opacity="1.00"/>
<rect x="290" y="-25" width="2.05" height="68" fill="rgb(30,108,229)" fill-opacity="1.00"/>
<rect x="292" y="-25" width="2.05" height="68" fill="rgb(39,145,235)" fill-opacity="0.90"/>
<rect x="294" y="-25" width="2.05" height="68" fill="rgb(25,88,221)" fill-opacity="0.70"/>
<rect x="296" y="-25" width="2.05" height="68" fill="rgb(15,40,199)" fill-opacity="0.50"/>
<rect x="298" y="-25" width="2.05" height="68" fill="rgb(29,107,229)" fill-opacity="0.30"/>
<rect x="300" y="-25" width="2.05" height="68" fill="rgb(25,86,220)" fill-opacity="0.10"/>
<rect x="302" y="-25" width="2.05" height="68" fill="rgb(16,47,203)" fill-opacity="0.00"/>
</g></g>
<g clip-path="url(#clA215)"><g filter="url(#blurx)">
<rect x="282" y="46" width="2.05" height="74" fill="rgb(31,115,231)" fill-opacity="0.30"/>
<rect x="284" y="46" width="2.05" height="74" fill="rgb(32,119,231)" fill-opacity="0.50"/>
<rect x="286" y="46" width="2.05" height="74" fill="rgb(20,64,210)" fill-opacity="0.70"/>
<rect x="288" y="46" width="2.05" height="74" fill="rgb(25,87,220)" fill-opacity="0.90"/>
<rect x="290" y="46" width="2.05" height="74" fill="rgb(28,102,227)" fill-opacity="1.00"/>
<rect x="292" y="46" width="2.05" height="74" fill="rgb(29,105,228)" fill-opacity="1.00"/>
<rect x="294" y="46" width="2.05" height="74" fill="rgb(29,106,228)" fill-opacity="1.00"/>
<rect x="296" y="46" width="2.05" height="74" fill="rgb(30,109,230)" fill-opacity="1.00"/>
<rect x="298" y="46" width="2.05" height="74" fill="rgb(34,124,232)" fill-opacity="1.00"/>
<rect x="300" y="46" width="2.05" height="74" fill="rgb(56,211,222)" fill-opacity="1.00"/>
<rect x="302" y="46" width="2.05" height="74" fill="rgb(42,159,237)" fill-opacity="1.00"/>
<rect x="304" y="46" width="2.05" height="74" fill="rgb(37,136,233)" fill-opacity="1.00"/>
<rect x="306" y="46" width="2.05" height="74" fill="rgb(48,183,234)" fill-opacity="1.00"/>
<rect x="308" y="46" width="2.05" height="74" fill="rgb(45,168,238)" fill-opacity="1.00"/>
<rect x="310" y="46" width="2.05" height="74" fill="rgb(32,116,231)" fill-opacity="1.00"/>
<rect x="312" y="46" width="2.05" height="74" fill="rgb(43,163,237)" fill-opacity="1.00"/>
<rect x="314" y="46" width="2.05" height="74" fill="rgb(43,161,237)" fill-opacity="1.00"/>
<rect x="316" y="46" width="2.05" height="74" fill="rgb(57,212,217)" fill-opacity="1.00"/>
<rect x="318" y="46" width="2.05" height="74" fill="rgb(47,179,235)" fill-opacity="1.00"/>
<rect x="320" y="46" width="2.05" height="74" fill="rgb(38,140,234)" fill-opacity="1.00"/>
<rect x="322" y="46" width="2.05" height="74" fill="rgb(67,220,174)" fill-opacity="1.00"/>
<rect x="324" y="46" width="2.05" height="74" fill="rgb(46,174,237)" fill-opacity="1.00"/>
<rect x="326" y="46" width="2.05" height="74" fill="rgb(46,174,237)" fill-opacity="1.00"/>
<rect x="328" y="46" width="2.05" height="74" fill="rgb(39,146,235)" fill-opacity="1.00"/>
<rect x="330" y="46" width="2.05" height="74" fill="rgb(52,198,229)" fill-opacity="1.00"/>
<rect x="332" y="46" width="2.05" height="74" fill="rgb(43,161,237)" fill-opacity="1.00"/>
<rect x="334" y="46" width="2.05" height="74" fill="rgb(57,212,215)" fill-opacity="1.00"/>
<rect x="336" y="46" width="2.05" height="74" fill="rgb(45,170,238)" fill-opacity="1.00"/>
<rect x="338" y="46" width="2.05" height="74" fill="rgb(55,209,225)" fill-opacity="1.00"/>
<rect x="340" y="46" width="2.05" height="74" fill="rgb(53,202,228)" fill-opacity="1.00"/>
<rect x="342" y="46" width="2.05" height="74" fill="rgb(56,211,221)" fill-opacity="1.00"/>
<rect x="344" y="46" width="2.05" height="74" fill="rgb(60,215,202)" fill-opacity="1.00"/>
<rect x="346" y="46" width="2.05" height="74" fill="rgb(51,193,230)" fill-opacity="1.00"/>
<rect x="348" y="46" width="2.05" height="74" fill="rgb(60,215,204)" fill-opacity="1.00"/>
<rect x="350" y="46" width="2.05" height="74" fill="rgb(51,194,230)" fill-opacity="1.00"/>
<rect x="352" y="46" width="2.05" height="74" fill="rgb(70,221,166)" fill-opacity="1.00"/>
<rect x="354" y="46" width="2.05" height="74" fill="rgb(70,221,167)" fill-opacity="1.00"/>
<rect x="356" y="46" width="2.05" height="74" fill="rgb(61,216,198)" fill-opacity="1.00"/>
<rect x="358" y="46" width="2.05" height="74" fill="rgb(56,211,220)" fill-opacity="1.00"/>
<rect x="360" y="46" width="2.05" height="74" fill="rgb(62,217,192)" fill-opacity="1.00"/>
<rect x="362" y="46" width="2.05" height="74" fill="rgb(69,221,169)" fill-opacity="1.00"/>
<rect x="364" y="46" width="2.05" height="74" fill="rgb(58,213,209)" fill-opacity="1.00"/>
<rect x="366" y="46" width="2.05" height="74" fill="rgb(52,200,228)" fill-opacity="1.00"/>
<rect x="368" y="46" width="2.05" height="74" fill="rgb(68,221,171)" fill-opacity="1.00"/>
<rect x="370" y="46" width="2.05" height="74" fill="rgb(70,221,165)" fill-opacity="1.00"/>
<rect x="372" y="46" width="2.05" height="74" fill="rgb(182,229,51)" fill-opacity="1.00"/>
<rect x="374" y="46" width="2.05" height="74" fill="rgb(80,223,137)" fill-opacity="1.00"/>
<rect x="376" y="46" width="2.05" height="74" fill="rgb(58,213,210)" fill-opacity="1.00"/>
<rect x="378" y="46" width="2.05" height="74" fill="rgb(82,223,133)" fill-opacity="1.00"/>
<rect x="380" y="46" width="2.05" height="74" fill="rgb(62,217,192)" fill-opacity="1.00"/>
<rect x="382" y="46" width="2.05" height="74" fill="rgb(126,227,87)" fill-opacity="1.00"/>
<rect x="384" y="46" width="2.05" height="74" fill="rgb(82,223,132)" fill-opacity="1.00"/>
<rect x="386" y="46" width="2.05" height="74" fill="rgb(60,215,201)" fill-opacity="1.00"/>
<rect x="388" y="46" width="2.05" height="74" fill="rgb(69,221,168)" fill-opacity="1.00"/>
<rect x="390" y="46" width="2.05" height="74" fill="rgb(58,213,213)" fill-opacity="1.00"/>
<rect x="392" y="46" width="2.05" height="74" fill="rgb(64,219,187)" fill-opacity="1.00"/>
<rect x="394" y="46" width="2.05" height="74" fill="rgb(65,220,182)" fill-opacity="1.00"/>
<rect x="396" y="46" width="2.05" height="74" fill="rgb(60,215,203)" fill-opacity="1.00"/>
<rect x="398" y="46" width="2.05" height="74" fill="rgb(67,220,175)" fill-opacity="1.00"/>
<rect x="400" y="46" width="2.05" height="74" fill="rgb(51,192,231)" fill-opacity="1.00"/>
<rect x="402" y="46" width="2.05" height="74" fill="rgb(56,211,219)" fill-opacity="1.00"/>
<rect x="404" y="46" width="2.05" height="74" fill="rgb(114,226,95)" fill-opacity="1.00"/>
<rect x="406" y="46" width="2.05" height="74" fill="rgb(56,211,221)" fill-opacity="1.00"/>
<rect x="408" y="46" width="2.05" height="74" fill="rgb(54,207,226)" fill-opacity="1.00"/>
<rect x="410" y="46" width="2.05" height="74" fill="rgb(60,215,203)" fill-opacity="1.00"/>
<rect x="412" y="46" width="2.05" height="74" fill="rgb(74,222,154)" fill-opacity="1.00"/>
<rect x="414" y="46" width="2.05" height="74" fill="rgb(55,210,223)" fill-opacity="1.00"/>
<rect x="416" y="46" width="2.05" height="74" fill="rgb(57,212,217)" fill-opacity="1.00"/>
<rect x="418" y="46" width="2.05" height="74" fill="rgb(50,189,232)" fill-opacity="1.00"/>
<rect x="420" y="46" width="2.05" height="74" fill="rgb(45,171,238)" fill-opacity="1.00"/>
<rect x="422" y="46" width="2.05" height="74" fill="rgb(54,205,226)" fill-opacity="1.00"/>
<rect x="424" y="46" width="2.05" height="74" fill="rgb(49,188,232)" fill-opacity="1.00"/>
<rect x="426" y="46" width="2.05" height="74" fill="rgb(56,211,222)" fill-opacity="1.00"/>
<rect x="428" y="46" width="2.05" height="74" fill="rgb(53,203,227)" fill-opacity="1.00"/>
<rect x="430" y="46" width="2.05" height="74" fill="rgb(48,182,234)" fill-opacity="1.00"/>
<rect x="432" y="46" width="2.05" height="74" fill="rgb(49,184,233)" fill-opacity="1.00"/>
<rect x="434" y="46" width="2.05" height="74" fill="rgb(49,187,232)" fill-opacity="1.00"/>
<rect x="436" y="46" width="2.05" height="74" fill="rgb(50,189,232)" fill-opacity="1.00"/>
<rect x="438" y="46" width="2.05" height="74" fill="rgb(39,145,235)" fill-opacity="1.00"/>
<rect x="440" y="46" width="2.05" height="74" fill="rgb(34,125,232)" fill-opacity="1.00"/>
<rect x="442" y="46" width="2.05" height="74" fill="rgb(43,160,237)" fill-opacity="1.00"/>
<rect x="444" y="46" width="2.05" height="74" fill="rgb(31,115,231)" fill-opacity="1.00"/>
<rect x="446" y="46" width="2.05" height="74" fill="rgb(31,113,230)" fill-opacity="1.00"/>
<rect x="448" y="46" width="2.05" height="74" fill="rgb(42,158,236)" fill-opacity="1.00"/>
<rect x="450" y="46" width="2.05" height="74" fill="rgb(41,152,236)" fill-opacity="1.00"/>
<rect x="452" y="46" width="2.05" height="74" fill="rgb(36,134,233)" fill-opacity="1.00"/>
<rect x="454" y="46" width="2.05" height="74" fill="rgb(29,104,227)" fill-opacity="1.00"/>
<rect x="456" y="46" width="2.05" height="74" fill="rgb(44,166,237)" fill-opacity="1.00"/>
<rect x="458" y="46" width="2.05" height="74" fill="rgb(30,109,230)" fill-opacity="1.00"/>
<rect x="460" y="46" width="2.05" height="74" fill="rgb(34,125,232)" fill-opacity="1.00"/>
<rect x="462" y="46" width="2.05" height="74" fill="rgb(29,106,228)" fill-opacity="1.00"/>
<rect x="464" y="46" width="2.05" height="74" fill="rgb(27,94,223)" fill-opacity="1.00"/>
<rect x="466" y="46" width="2.05" height="74" fill="rgb(23,75,215)" fill-opacity="0.90"/>
<rect x="468" y="46" width="2.05" height="74" fill="rgb(24,81,218)" fill-opacity="0.70"/>
<rect x="470" y="46" width="2.05" height="74" fill="rgb(23,80,217)" fill-opacity="0.50"/>
<rect x="472" y="46" width="2.05" height="74" fill="rgb(20,63,210)" fill-opacity="0.30"/>
<rect x="474" y="46" width="2.05" height="74" fill="rgb(27,95,224)" fill-opacity="0.10"/>
<rect x="476" y="46" width="2.05" height="74" fill="rgb(32,119,231)" fill-opacity="0.00"/>
</g></g>
<g clip-path="url(#clB215)"><g filter="url(#blurx)">
<rect x="195" y="121" width="2.05" height="69" fill="rgb(49,184,233)" fill-opacity="0.30"/>
<rect x="197" y="121" width="2.05" height="69" fill="rgb(30,110,230)" fill-opacity="0.50"/>
<rect x="199" y="121" width="2.05" height="69" fill="rgb(29,104,228)" fill-opacity="0.70"/>
<rect x="201" y="121" width="2.05" height="69" fill="rgb(19,57,207)" fill-opacity="0.90"/>
<rect x="203" y="121" width="2.05" height="69" fill="rgb(23,75,215)" fill-opacity="1.00"/>
<rect x="205" y="121" width="2.05" height="69" fill="rgb(25,84,219)" fill-opacity="1.00"/>
<rect x="207" y="121" width="2.05" height="69" fill="rgb(25,87,220)" fill-opacity="1.00"/>
<rect x="209" y="121" width="2.05" height="69" fill="rgb(33,122,232)" fill-opacity="1.00"/>
<rect x="211" y="121" width="2.05" height="69" fill="rgb(39,148,235)" fill-opacity="1.00"/>
<rect x="213" y="121" width="2.05" height="69" fill="rgb(30,110,230)" fill-opacity="1.00"/>
<rect x="215" y="121" width="2.05" height="69" fill="rgb(35,132,233)" fill-opacity="1.00"/>
<rect x="217" y="121" width="2.05" height="69" fill="rgb(36,132,233)" fill-opacity="1.00"/>
<rect x="219" y="121" width="2.05" height="69" fill="rgb(27,98,225)" fill-opacity="1.00"/>
<rect x="221" y="121" width="2.05" height="69" fill="rgb(47,177,236)" fill-opacity="1.00"/>
<rect x="223" y="121" width="2.05" height="69" fill="rgb(39,146,235)" fill-opacity="1.00"/>
<rect x="225" y="121" width="2.05" height="69" fill="rgb(51,193,231)" fill-opacity="1.00"/>
<rect x="227" y="121" width="2.05" height="69" fill="rgb(21,69,212)" fill-opacity="1.00"/>
<rect x="229" y="121" width="2.05" height="69" fill="rgb(41,154,236)" fill-opacity="1.00"/>
<rect x="231" y="121" width="2.05" height="69" fill="rgb(50,192,231)" fill-opacity="1.00"/>
<rect x="233" y="121" width="2.05" height="69" fill="rgb(37,140,234)" fill-opacity="1.00"/>
<rect x="235" y="121" width="2.05" height="69" fill="rgb(46,175,236)" fill-opacity="1.00"/>
<rect x="237" y="121" width="2.05" height="69" fill="rgb(35,131,233)" fill-opacity="1.00"/>
<rect x="239" y="121" width="2.05" height="69" fill="rgb(50,189,232)" fill-opacity="1.00"/>
<rect x="241" y="121" width="2.05" height="69" fill="rgb(47,179,235)" fill-opacity="1.00"/>
<rect x="243" y="121" width="2.05" height="69" fill="rgb(43,160,237)" fill-opacity="1.00"/>
<rect x="245" y="121" width="2.05" height="69" fill="rgb(51,193,230)" fill-opacity="1.00"/>
<rect x="247" y="121" width="2.05" height="69" fill="rgb(40,150,235)" fill-opacity="1.00"/>
<rect x="249" y="121" width="2.05" height="69" fill="rgb(51,193,230)" fill-opacity="1.00"/>
<rect x="251" y="121" width="2.05" height="69" fill="rgb(56,211,221)" fill-opacity="1.00"/>
<rect x="253" y="121" width="2.05" height="69" fill="rgb(49,187,232)" fill-opacity="1.00"/>
<rect x="255" y="121" width="2.05" height="69" fill="rgb(52,198,229)" fill-opacity="1.00"/>
<rect x="257" y="121" width="2.05" height="69" fill="rgb(48,184,233)" fill-opacity="1.00"/>
<rect x="259" y="121" width="2.05" height="69" fill="rgb(53,204,227)" fill-opacity="1.00"/>
<rect x="261" y="121" width="2.05" height="69" fill="rgb(52,199,228)" fill-opacity="1.00"/>
<rect x="263" y="121" width="2.05" height="69" fill="rgb(60,215,200)" fill-opacity="1.00"/>
<rect x="265" y="121" width="2.05" height="69" fill="rgb(54,206,226)" fill-opacity="1.00"/>
<rect x="267" y="121" width="2.05" height="69" fill="rgb(51,195,230)" fill-opacity="1.00"/>
<rect x="269" y="121" width="2.05" height="69" fill="rgb(58,213,211)" fill-opacity="1.00"/>
<rect x="271" y="121" width="2.05" height="69" fill="rgb(57,212,214)" fill-opacity="1.00"/>
<rect x="273" y="121" width="2.05" height="69" fill="rgb(64,219,184)" fill-opacity="1.00"/>
<rect x="275" y="121" width="2.05" height="69" fill="rgb(64,219,185)" fill-opacity="1.00"/>
<rect x="277" y="121" width="2.05" height="69" fill="rgb(65,220,182)" fill-opacity="1.00"/>
<rect x="279" y="121" width="2.05" height="69" fill="rgb(77,222,145)" fill-opacity="1.00"/>
<rect x="281" y="121" width="2.05" height="69" fill="rgb(94,225,108)" fill-opacity="1.00"/>
<rect x="283" y="121" width="2.05" height="69" fill="rgb(66,220,177)" fill-opacity="1.00"/>
<rect x="285" y="121" width="2.05" height="69" fill="rgb(65,220,181)" fill-opacity="1.00"/>
<rect x="287" y="121" width="2.05" height="69" fill="rgb(88,225,115)" fill-opacity="1.00"/>
<rect x="289" y="121" width="2.05" height="69" fill="rgb(86,224,121)" fill-opacity="1.00"/>
<rect x="291" y="121" width="2.05" height="69" fill="rgb(83,224,130)" fill-opacity="1.00"/>
<rect x="293" y="121" width="2.05" height="69" fill="rgb(135,227,81)" fill-opacity="1.00"/>
<rect x="295" y="121" width="2.05" height="69" fill="rgb(87,224,119)" fill-opacity="1.00"/>
<rect x="297" y="121" width="2.05" height="69" fill="rgb(75,222,152)" fill-opacity="1.00"/>
<rect x="299" y="121" width="2.05" height="69" fill="rgb(207,213,36)" fill-opacity="1.00"/>
<rect x="301" y="121" width="2.05" height="69" fill="rgb(87,224,118)" fill-opacity="1.00"/>
<rect x="303" y="121" width="2.05" height="69" fill="rgb(79,223,141)" fill-opacity="1.00"/>
<rect x="305" y="121" width="2.05" height="69" fill="rgb(68,221,172)" fill-opacity="1.00"/>
<rect x="307" y="121" width="2.05" height="69" fill="rgb(64,219,185)" fill-opacity="1.00"/>
<rect x="309" y="121" width="2.05" height="69" fill="rgb(114,226,94)" fill-opacity="1.00"/>
<rect x="311" y="121" width="2.05" height="69" fill="rgb(83,224,128)" fill-opacity="1.00"/>
<rect x="313" y="121" width="2.05" height="69" fill="rgb(57,212,215)" fill-opacity="1.00"/>
<rect x="315" y="121" width="2.05" height="69" fill="rgb(60,215,202)" fill-opacity="1.00"/>
<rect x="317" y="121" width="2.05" height="69" fill="rgb(51,193,231)" fill-opacity="1.00"/>
<rect x="319" y="121" width="2.05" height="69" fill="rgb(62,217,195)" fill-opacity="1.00"/>
<rect x="321" y="121" width="2.05" height="69" fill="rgb(55,210,224)" fill-opacity="1.00"/>
<rect x="323" y="121" width="2.05" height="69" fill="rgb(62,217,194)" fill-opacity="1.00"/>
<rect x="325" y="121" width="2.05" height="69" fill="rgb(49,184,233)" fill-opacity="1.00"/>
<rect x="327" y="121" width="2.05" height="69" fill="rgb(49,186,233)" fill-opacity="1.00"/>
<rect x="329" y="121" width="2.05" height="69" fill="rgb(52,199,229)" fill-opacity="1.00"/>
<rect x="331" y="121" width="2.05" height="69" fill="rgb(55,209,225)" fill-opacity="1.00"/>
<rect x="333" y="121" width="2.05" height="69" fill="rgb(64,219,186)" fill-opacity="1.00"/>
<rect x="335" y="121" width="2.05" height="69" fill="rgb(46,172,237)" fill-opacity="1.00"/>
<rect x="337" y="121" width="2.05" height="69" fill="rgb(54,208,226)" fill-opacity="1.00"/>
<rect x="339" y="121" width="2.05" height="69" fill="rgb(51,195,230)" fill-opacity="1.00"/>
<rect x="341" y="121" width="2.05" height="69" fill="rgb(46,175,236)" fill-opacity="1.00"/>
<rect x="343" y="121" width="2.05" height="69" fill="rgb(62,217,192)" fill-opacity="1.00"/>
<rect x="345" y="121" width="2.05" height="69" fill="rgb(54,207,226)" fill-opacity="1.00"/>
<rect x="347" y="121" width="2.05" height="69" fill="rgb(56,211,221)" fill-opacity="1.00"/>
<rect x="349" y="121" width="2.05" height="69" fill="rgb(45,168,238)" fill-opacity="1.00"/>
<rect x="351" y="121" width="2.05" height="69" fill="rgb(25,89,221)" fill-opacity="1.00"/>
<rect x="353" y="121" width="2.05" height="69" fill="rgb(40,151,236)" fill-opacity="1.00"/>
<rect x="355" y="121" width="2.05" height="69" fill="rgb(41,154,236)" fill-opacity="1.00"/>
<rect x="357" y="121" width="2.05" height="69" fill="rgb(46,173,237)" fill-opacity="1.00"/>
<rect x="359" y="121" width="2.05" height="69" fill="rgb(29,107,229)" fill-opacity="1.00"/>
<rect x="361" y="121" width="2.05" height="69" fill="rgb(29,104,227)" fill-opacity="1.00"/>
<rect x="363" y="121" width="2.05" height="69" fill="rgb(40,150,235)" fill-opacity="1.00"/>
<rect x="365" y="121" width="2.05" height="69" fill="rgb(48,183,234)" fill-opacity="1.00"/>
<rect x="367" y="121" width="2.05" height="69" fill="rgb(30,110,230)" fill-opacity="1.00"/>
<rect x="369" y="121" width="2.05" height="69" fill="rgb(33,123,232)" fill-opacity="1.00"/>
<rect x="371" y="121" width="2.05" height="69" fill="rgb(34,124,232)" fill-opacity="1.00"/>
<rect x="373" y="121" width="2.05" height="69" fill="rgb(31,115,231)" fill-opacity="1.00"/>
<rect x="375" y="121" width="2.05" height="69" fill="rgb(23,79,217)" fill-opacity="1.00"/>
<rect x="377" y="121" width="2.05" height="69" fill="rgb(27,95,224)" fill-opacity="1.00"/>
<rect x="379" y="121" width="2.05" height="69" fill="rgb(27,97,225)" fill-opacity="0.90"/>
<rect x="381" y="121" width="2.05" height="69" fill="rgb(37,137,234)" fill-opacity="0.70"/>
<rect x="383" y="121" width="2.05" height="69" fill="rgb(20,64,210)" fill-opacity="0.50"/>
<rect x="385" y="121" width="2.05" height="69" fill="rgb(38,141,234)" fill-opacity="0.30"/>
<rect x="387" y="121" width="2.05" height="69" fill="rgb(20,64,210)" fill-opacity="0.10"/>
<rect x="389" y="121" width="2.05" height="69" fill="rgb(39,144,235)" fill-opacity="0.00"/>
</g></g>
<g clip-path="url(#clC215)"><g filter="url(#blurx)">
<rect x="108" y="190" width="2.05" height="68" fill="rgb(25,89,221)" fill-opacity="0.30"/>
<rect x="110" y="190" width="2.05" height="68" fill="rgb(31,114,231)" fill-opacity="0.50"/>
<rect x="112" y="190" width="2.05" height="68" fill="rgb(33,121,231)" fill-opacity="0.70"/>
<rect x="114" y="190" width="2.05" height="68" fill="rgb(24,81,218)" fill-opacity="0.90"/>
<rect x="116" y="190" width="2.05" height="68" fill="rgb(27,97,224)" fill-opacity="1.00"/>
<rect x="118" y="190" width="2.05" height="68" fill="rgb(32,120,231)" fill-opacity="1.00"/>
<rect x="120" y="190" width="2.05" height="68" fill="rgb(33,121,231)" fill-opacity="1.00"/>
<rect x="122" y="190" width="2.05" height="68" fill="rgb(26,90,221)" fill-opacity="1.00"/>
<rect x="124" y="190" width="2.05" height="68" fill="rgb(25,86,220)" fill-opacity="1.00"/>
<rect x="126" y="190" width="2.05" height="68" fill="rgb(25,87,220)" fill-opacity="1.00"/>
<rect x="128" y="190" width="2.05" height="68" fill="rgb(33,121,231)" fill-opacity="1.00"/>
<rect x="130" y="190" width="2.05" height="68" fill="rgb(33,122,232)" fill-opacity="1.00"/>
<rect x="132" y="190" width="2.05" height="68" fill="rgb(36,134,233)" fill-opacity="1.00"/>
<rect x="134" y="190" width="2.05" height="68" fill="rgb(39,147,235)" fill-opacity="1.00"/>
<rect x="136" y="190" width="2.05" height="68" fill="rgb(36,135,233)" fill-opacity="1.00"/>
<rect x="138" y="190" width="2.05" height="68" fill="rgb(28,99,225)" fill-opacity="1.00"/>
<rect x="140" y="190" width="2.05" height="68" fill="rgb(32,117,231)" fill-opacity="1.00"/>
<rect x="142" y="190" width="2.05" height="68" fill="rgb(48,183,234)" fill-opacity="1.00"/>
<rect x="144" y="190" width="2.05" height="68" fill="rgb(54,205,227)" fill-opacity="1.00"/>
<rect x="146" y="190" width="2.05" height="68" fill="rgb(43,161,237)" fill-opacity="1.00"/>
<rect x="148" y="190" width="2.05" height="68" fill="rgb(50,192,231)" fill-opacity="1.00"/>
<rect x="150" y="190" width="2.05" height="68" fill="rgb(45,172,237)" fill-opacity="1.00"/>
<rect x="152" y="190" width="2.05" height="68" fill="rgb(42,157,236)" fill-opacity="1.00"/>
<rect x="154" y="190" width="2.05" height="68" fill="rgb(48,181,234)" fill-opacity="1.00"/>
<rect x="156" y="190" width="2.05" height="68" fill="rgb(38,142,234)" fill-opacity="1.00"/>
<rect x="158" y="190" width="2.05" height="68" fill="rgb(44,167,238)" fill-opacity="1.00"/>
<rect x="160" y="190" width="2.05" height="68" fill="rgb(60,215,201)" fill-opacity="1.00"/>
<rect x="162" y="190" width="2.05" height="68" fill="rgb(38,140,234)" fill-opacity="1.00"/>
<rect x="164" y="190" width="2.05" height="68" fill="rgb(61,216,199)" fill-opacity="1.00"/>
<rect x="166" y="190" width="2.05" height="68" fill="rgb(43,160,237)" fill-opacity="1.00"/>
<rect x="168" y="190" width="2.05" height="68" fill="rgb(52,199,229)" fill-opacity="1.00"/>
<rect x="170" y="190" width="2.05" height="68" fill="rgb(51,192,231)" fill-opacity="1.00"/>
<rect x="172" y="190" width="2.05" height="68" fill="rgb(54,206,226)" fill-opacity="1.00"/>
<rect x="174" y="190" width="2.05" height="68" fill="rgb(57,212,215)" fill-opacity="1.00"/>
<rect x="176" y="190" width="2.05" height="68" fill="rgb(66,220,176)" fill-opacity="1.00"/>
<rect x="178" y="190" width="2.05" height="68" fill="rgb(63,218,190)" fill-opacity="1.00"/>
<rect x="180" y="190" width="2.05" height="68" fill="rgb(55,209,225)" fill-opacity="1.00"/>
<rect x="182" y="190" width="2.05" height="68" fill="rgb(120,226,91)" fill-opacity="1.00"/>
<rect x="184" y="190" width="2.05" height="68" fill="rgb(58,213,213)" fill-opacity="1.00"/>
<rect x="186" y="190" width="2.05" height="68" fill="rgb(59,214,209)" fill-opacity="1.00"/>
<rect x="188" y="190" width="2.05" height="68" fill="rgb(109,226,98)" fill-opacity="1.00"/>
<rect x="190" y="190" width="2.05" height="68" fill="rgb(54,208,226)" fill-opacity="1.00"/>
<rect x="192" y="190" width="2.05" height="68" fill="rgb(68,221,173)" fill-opacity="1.00"/>
<rect x="194" y="190" width="2.05" height="68" fill="rgb(130,227,85)" fill-opacity="1.00"/>
<rect x="196" y="190" width="2.05" height="68" fill="rgb(77,222,146)" fill-opacity="1.00"/>
<rect x="198" y="190" width="2.05" height="68" fill="rgb(87,224,118)" fill-opacity="1.00"/>
<rect x="200" y="190" width="2.05" height="68" fill="rgb(132,227,83)" fill-opacity="1.00"/>
<rect x="202" y="190" width="2.05" height="68" fill="rgb(83,224,129)" fill-opacity="1.00"/>
<rect x="204" y="190" width="2.05" height="68" fill="rgb(87,224,120)" fill-opacity="1.00"/>
<rect x="206" y="190" width="2.05" height="68" fill="rgb(66,220,176)" fill-opacity="1.00"/>
<rect x="208" y="190" width="2.05" height="68" fill="rgb(64,219,186)" fill-opacity="1.00"/>
<rect x="210" y="190" width="2.05" height="68" fill="rgb(62,217,195)" fill-opacity="1.00"/>
<rect x="212" y="190" width="2.05" height="68" fill="rgb(87,224,119)" fill-opacity="1.00"/>
<rect x="214" y="190" width="2.05" height="68" fill="rgb(64,219,183)" fill-opacity="1.00"/>
<rect x="216" y="190" width="2.05" height="68" fill="rgb(69,221,169)" fill-opacity="1.00"/>
<rect x="218" y="190" width="2.05" height="68" fill="rgb(78,223,142)" fill-opacity="1.00"/>
<rect x="220" y="190" width="2.05" height="68" fill="rgb(59,214,207)" fill-opacity="1.00"/>
<rect x="222" y="190" width="2.05" height="68" fill="rgb(59,214,208)" fill-opacity="1.00"/>
<rect x="224" y="190" width="2.05" height="68" fill="rgb(70,221,167)" fill-opacity="1.00"/>
<rect x="226" y="190" width="2.05" height="68" fill="rgb(76,222,149)" fill-opacity="1.00"/>
<rect x="228" y="190" width="2.05" height="68" fill="rgb(53,201,228)" fill-opacity="1.00"/>
<rect x="230" y="190" width="2.05" height="68" fill="rgb(52,198,229)" fill-opacity="1.00"/>
<rect x="232" y="190" width="2.05" height="68" fill="rgb(63,218,187)" fill-opacity="1.00"/>
<rect x="234" y="190" width="2.05" height="68" fill="rgb(55,210,224)" fill-opacity="1.00"/>
<rect x="236" y="190" width="2.05" height="68" fill="rgb(48,184,234)" fill-opacity="1.00"/>
<rect x="238" y="190" width="2.05" height="68" fill="rgb(41,156,236)" fill-opacity="1.00"/>
<rect x="240" y="190" width="2.05" height="68" fill="rgb(49,186,233)" fill-opacity="1.00"/>
<rect x="242" y="190" width="2.05" height="68" fill="rgb(49,188,232)" fill-opacity="1.00"/>
<rect x="244" y="190" width="2.05" height="68" fill="rgb(47,177,236)" fill-opacity="1.00"/>
<rect x="246" y="190" width="2.05" height="68" fill="rgb(55,208,226)" fill-opacity="1.00"/>
<rect x="248" y="190" width="2.05" height="68" fill="rgb(50,188,232)" fill-opacity="1.00"/>
<rect x="250" y="190" width="2.05" height="68" fill="rgb(48,181,235)" fill-opacity="1.00"/>
<rect x="252" y="190" width="2.05" height="68" fill="rgb(47,177,236)" fill-opacity="1.00"/>
<rect x="254" y="190" width="2.05" height="68" fill="rgb(50,191,231)" fill-opacity="1.00"/>
<rect x="256" y="190" width="2.05" height="68" fill="rgb(48,183,234)" fill-opacity="1.00"/>
<rect x="258" y="190" width="2.05" height="68" fill="rgb(60,215,205)" fill-opacity="1.00"/>
<rect x="260" y="190" width="2.05" height="68" fill="rgb(42,159,237)" fill-opacity="1.00"/>
<rect x="262" y="190" width="2.05" height="68" fill="rgb(48,181,234)" fill-opacity="1.00"/>
<rect x="264" y="190" width="2.05" height="68" fill="rgb(45,170,238)" fill-opacity="1.00"/>
<rect x="266" y="190" width="2.05" height="68" fill="rgb(38,142,234)" fill-opacity="1.00"/>
<rect x="268" y="190" width="2.05" height="68" fill="rgb(45,172,237)" fill-opacity="1.00"/>
<rect x="270" y="190" width="2.05" height="68" fill="rgb(46,173,237)" fill-opacity="1.00"/>
<rect x="272" y="190" width="2.05" height="68" fill="rgb(33,124,232)" fill-opacity="1.00"/>
<rect x="274" y="190" width="2.05" height="68" fill="rgb(36,133,233)" fill-opacity="1.00"/>
<rect x="276" y="190" width="2.05" height="68" fill="rgb(37,140,234)" fill-opacity="1.00"/>
<rect x="278" y="190" width="2.05" height="68" fill="rgb(39,146,235)" fill-opacity="1.00"/>
<rect x="280" y="190" width="2.05" height="68" fill="rgb(46,175,236)" fill-opacity="1.00"/>
<rect x="282" y="190" width="2.05" height="68" fill="rgb(27,96,224)" fill-opacity="1.00"/>
<rect x="284" y="190" width="2.05" height="68" fill="rgb(32,116,231)" fill-opacity="1.00"/>
<rect x="286" y="190" width="2.05" height="68" fill="rgb(26,90,222)" fill-opacity="1.00"/>
<rect x="288" y="190" width="2.05" height="68" fill="rgb(24,83,219)" fill-opacity="1.00"/>
<rect x="290" y="190" width="2.05" height="68" fill="rgb(30,108,229)" fill-opacity="1.00"/>
<rect x="292" y="190" width="2.05" height="68" fill="rgb(39,145,235)" fill-opacity="0.90"/>
<rect x="294" y="190" width="2.05" height="68" fill="rgb(25,88,221)" fill-opacity="0.70"/>
<rect x="296" y="190" width="2.05" height="68" fill="rgb(15,40,199)" fill-opacity="0.50"/>
<rect x="298" y="190" width="2.05" height="68" fill="rgb(29,107,229)" fill-opacity="0.30"/>
<rect x="300" y="190" width="2.05" height="68" fill="rgb(25,86,220)" fill-opacity="0.10"/>
<rect x="302" y="190" width="2.05" height="68" fill="rgb(16,47,203)" fill-opacity="0.00"/>
</g></g>
<g clip-path="url(#clA430)"><g filter="url(#blurx)">
<rect x="282" y="261" width="2.05" height="74" fill="rgb(31,115,231)" fill-opacity="0.30"/>
<rect x="284" y="261" width="2.05" height="74" fill="rgb(32,119,231)" fill-opacity="0.50"/>
<rect x="286" y="261" width="2.05" height="74" fill="rgb(20,64,210)" fill-opacity="0.70"/>
<rect x="288" y="261" width="2.05" height="74" fill="rgb(25,87,220)" fill-opacity="0.90"/>
<rect x="290" y="261" width="2.05" height="74" fill="rgb(28,102,227)" fill-opacity="1.00"/>
<rect x="292" y="261" width="2.05" height="74" fill="rgb(29,105,228)" fill-opacity="1.00"/>
<rect x="294" y="261" width="2.05" height="74" fill="rgb(29,106,228)" fill-opacity="1.00"/>
<rect x="296" y="261" width="2.05" height="74" fill="rgb(30,109,230)" fill-opacity="1.00"/>
<rect x="298" y="261" width="2.05" height="74" fill="rgb(34,124,232)" fill-opacity="1.00"/>
<rect x="300" y="261" width="2.05" height="74" fill="rgb(56,211,222)" fill-opacity="1.00"/>
<rect x="302" y="261" width="2.05" height="74" fill="rgb(42,159,237)" fill-opacity="1.00"/>
<rect x="304" y="261" width="2.05" height="74" fill="rgb(37,136,233)" fill-opacity="1.00"/>
<rect x="306" y="261" width="2.05" height="74" fill="rgb(48,183,234)" fill-opacity="1.00"/>
<rect x="308" y="261" width="2.05" height="74" fill="rgb(45,168,238)" fill-opacity="1.00"/>
<rect x="310" y="261" width="2.05" height="74" fill="rgb(32,116,231)" fill-opacity="1.00"/>
<rect x="312" y="261" width="2.05" height="74" fill="rgb(43,163,237)" fill-opacity="1.00"/>
<rect x="314" y="261" width="2.05" height="74" fill="rgb(43,161,237)" fill-opacity="1.00"/>
<rect x="316" y="261" width="2.05" height="74" fill="rgb(57,212,217)" fill-opacity="1.00"/>
<rect x="318" y="261" width="2.05" height="74" fill="rgb(47,179,235)" fill-opacity="1.00"/>
<rect x="320" y="261" width="2.05" height="74" fill="rgb(38,140,234)" fill-opacity="1.00"/>
<rect x="322" y="261" width="2.05" height="74" fill="rgb(67,220,174)" fill-opacity="1.00"/>
<rect x="324" y="261" width="2.05" height="74" fill="rgb(46,174,237)" fill-opacity="1.00"/>
<rect x="326" y="261" width="2.05" height="74" fill="rgb(46,174,237)" fill-opacity="1.00"/>
<rect x="328" y="261" width="2.05" height="74" fill="rgb(39,146,235)" fill-opacity="1.00"/>
<rect x="330" y="261" width="2.05" height="74" fill="rgb(52,198,229)" fill-opacity="1.00"/>
<rect x="332" y="261" width="2.05" height="74" fill="rgb(43,161,237)" fill-opacity="1.00"/>
<rect x="334" y="261" width="2.05" height="74" fill="rgb(57,212,215)" fill-opacity="1.00"/>
<rect x="336" y="261" width="2.05" height="74" fill="rgb(45,170,238)" fill-opacity="1.00"/>
<rect x="338" y="261" width="2.05" height="74" fill="rgb(55,209,225)" fill-opacity="1.00"/>
<rect x="340" y="261" width="2.05" height="74" fill="rgb(53,202,228)" fill-opacity="1.00"/>
<rect x="342" y="261" width="2.05" height="74" fill="rgb(56,211,221)" fill-opacity="1.00"/>
<rect x="344" y="261" width="2.05" height="74" fill="rgb(60,215,202)" fill-opacity="1.00"/>
<rect x="346" y="261" width="2.05" height="74" fill="rgb(51,193,230)" fill-opacity="1.00"/>
<rect x="348" y="261" width="2.05" height="74" fill="rgb(60,215,204)" fill-opacity="1.00"/>
<rect x="350" y="261" width="2.05" height="74" fill="rgb(51,194,230)" fill-opacity="1.00"/>
<rect x="352" y="261" width="2.05" height="74" fill="rgb(70,221,166)" fill-opacity="1.00"/>
<rect x="354" y="261" width="2.05" height="74" fill="rgb(70,221,167)" fill-opacity="1.00"/>
<rect x="356" y="261" width="2.05" height="74" fill="rgb(61,216,198)" fill-opacity="1.00"/>
<rect x="358" y="261" width="2.05" height="74" fill="rgb(56,211,220)" fill-opacity="1.00"/>
<rect x="360" y="261" width="2.05" height="74" fill="rgb(62,217,192)" fill-opacity="1.00"/>
<rect x="362" y="261" width="2.05" height="74" fill="rgb(69,221,169)" fill-opacity="1.00"/>
<rect x="364" y="261" width="2.05" height="74" fill="rgb(58,213,209)" fill-opacity="1.00"/>
<rect x="366" y="261" width="2.05" height="74" fill="rgb(52,200,228)" fill-opacity="1.00"/>
<rect x="368" y="261" width="2.05" height="74" fill="rgb(68,221,171)" fill-opacity="1.00"/>
<rect x="370" y="261" width="2.05" height="74" fill="rgb(70,221,165)" fill-opacity="1.00"/>
<rect x="372" y="261" width="2.05" height="74" fill="rgb(182,229,51)" fill-opacity="1.00"/>
<rect x="374" y="261" width="2.05" height="74" fill="rgb(80,223,137)" fill-opacity="1.00"/>
<rect x="376" y="261" width="2.05" height="74" fill="rgb(58,213,210)" fill-opacity="1.00"/>
<rect x="378" y="261" width="2.05" height="74" fill="rgb(82,223,133)" fill-opacity="1.00"/>
<rect x="380" y="261" width="2.05" height="74" fill="rgb(62,217,192)" fill-opacity="1.00"/>
<rect x="382" y="261" width="2.05" height="74" fill="rgb(126,227,87)" fill-opacity="1.00"/>
<rect x="384" y="261" width="2.05" height="74" fill="rgb(82,223,132)" fill-opacity="1.00"/>
<rect x="386" y="261" width="2.05" height="74" fill="rgb(60,215,201)" fill-opacity="1.00"/>
<rect x="388" y="261" width="2.05" height="74" fill="rgb(69,221,168)" fill-opacity="1.00"/>
<rect x="390" y="261" width="2.05" height="74" fill="rgb(58,213,213)" fill-opacity="1.00"/>
<rect x="392" y="261" width="2.05" height="74" fill="rgb(64,219,187)" fill-opacity="1.00"/>
<rect x="394" y="261" width="2.05" height="74" fill="rgb(65,220,182)" fill-opacity="1.00"/>
<rect x="396" y="261" width="2.05" height="74" fill="rgb(60,215,203)" fill-opacity="1.00"/>
<rect x="398" y="261" width="2.05" height="74" fill="rgb(67,220,175)" fill-opacity="1.00"/>
<rect x="400" y="261" width="2.05" height="74" fill="rgb(51,192,231)" fill-opacity="1.00"/>
<rect x="402" y="261" width="2.05" height="74" fill="rgb(56,211,219)" fill-opacity="1.00"/>
<rect x="404" y="261" width="2.05" height="74" fill="rgb(114,226,95)" fill-opacity="1.00"/>
<rect x="406" y="261" width="2.05" height="74" fill="rgb(56,211,221)" fill-opacity="1.00"/>
<rect x="408" y="261" width="2.05" height="74" fill="rgb(54,207,226)" fill-opacity="1.00"/>
<rect x="410" y="261" width="2.05" height="74" fill="rgb(60,215,203)" fill-opacity="1.00"/>
<rect x="412" y="261" width="2.05" height="74" fill="rgb(74,222,154)" fill-opacity="1.00"/>
<rect x="414" y="261" width="2.05" height="74" fill="rgb(55,210,223)" fill-opacity="1.00"/>
<rect x="416" y="261" width="2.05" height="74" fill="rgb(57,212,217)" fill-opacity="1.00"/>
<rect x="418" y="261" width="2.05" height="74" fill="rgb(50,189,232)" fill-opacity="1.00"/>
<rect x="420" y="261" width="2.05" height="74" fill="rgb(45,171,238)" fill-opacity="1.00"/>
<rect x="422" y="261" width="2.05" height="74" fill="rgb(54,205,226)" fill-opacity="1.00"/>
<rect x="424" y="261" width="2.05" height="74" fill="rgb(49,188,232)" fill-opacity="1.00"/>
<rect x="426" y="261" width="2.05" height="74" fill="rgb(56,211,222)" fill-opacity="1.00"/>
<rect x="428" y="261" width="2.05" height="74" fill="rgb(53,203,227)" fill-opacity="1.00"/>
<rect x="430" y="261" width="2.05" height="74" fill="rgb(48,182,234)" fill-opacity="1.00"/>
<rect x="432" y="261" width="2.05" height="74" fill="rgb(49,184,233)" fill-opacity="1.00"/>
<rect x="434" y="261" width="2.05" height="74" fill="rgb(49,187,232)" fill-opacity="1.00"/>
<rect x="436" y="261" width="2.05" height="74" fill="rgb(50,189,232)" fill-opacity="1.00"/>
<rect x="438" y="261" width="2.05" height="74" fill="rgb(39,145,235)" fill-opacity="1.00"/>
<rect x="440" y="261" width="2.05" height="74" fill="rgb(34,125,232)" fill-opacity="1.00"/>
<rect x="442" y="261" width="2.05" height="74" fill="rgb(43,160,237)" fill-opacity="1.00"/>
<rect x="444" y="261" width="2.05" height="74" fill="rgb(31,115,231)" fill-opacity="1.00"/>
<rect x="446" y="261" width="2.05" height="74" fill="rgb(31,113,230)" fill-opacity="1.00"/>
<rect x="448" y="261" width="2.05" height="74" fill="rgb(42,158,236)" fill-opacity="1.00"/>
<rect x="450" y="261" width="2.05" height="74" fill="rgb(41,152,236)" fill-opacity="1.00"/>
<rect x="452" y="261" width="2.05" height="74" fill="rgb(36,134,233)" fill-opacity="1.00"/>
<rect x="454" y="261" width="2.05" height="74" fill="rgb(29,104,227)" fill-opacity="1.00"/>
<rect x="456" y="261" width="2.05" height="74" fill="rgb(44,166,237)" fill-opacity="1.00"/>
<rect x="458" y="261" width="2.05" height="74" fill="rgb(30,109,230)" fill-opacity="1.00"/>
<rect x="460" y="261" width="2.05" height="74" fill="rgb(34,125,232)" fill-opacity="1.00"/>
<rect x="462" y="261" width="2.05" height="74" fill="rgb(29,106,228)" fill-opacity="1.00"/>
<rect x="464" y="261" width="2.05" height="74" fill="rgb(27,94,223)" fill-opacity="1.00"/>
<rect x="466" y="261" width="2.05" height="74" fill="rgb(23,75,215)" fill-opacity="0.90"/>
<rect x="468" y="261" width="2.05" height="74" fill="rgb(24,81,218)" fill-opacity="0.70"/>
<rect x="470" y="261" width="2.05" height="74" fill="rgb(23,80,217)" fill-opacity="0.50"/>
<rect x="472" y="261" width="2.05" height="74" fill="rgb(20,63,210)" fill-opacity="0.30"/>
<rect x="474" y="261" width="2.05" height="74" fill="rgb(27,95,224)" fill-opacity="0.10"/>
<rect x="476" y="261" width="2.05" height="74" fill="rgb(32,119,231)" fill-opacity="0.00"/>
</g></g>
<g clip-path="url(#clB430)"><g filter="url(#blurx)">
<rect x="195" y="336" width="2.05" height="69" fill="rgb(49,184,233)" fill-opacity="0.30"/>
<rect x="197" y="336" width="2.05" height="69" fill="rgb(30,110,230)" fill-opacity="0.50"/>
<rect x="199" y="336" width="2.05" height="69" fill="rgb(29,104,228)" fill-opacity="0.70"/>
<rect x="201" y="336" width="2.05" height="69" fill="rgb(19,57,207)" fill-opacity="0.90"/>
<rect x="203" y="336" width="2.05" height="69" fill="rgb(23,75,215)" fill-opacity="1.00"/>
<rect x="205" y="336" width="2.05" height="69" fill="rgb(25,84,219)" fill-opacity="1.00"/>
<rect x="207" y="336" width="2.05" height="69" fill="rgb(25,87,220)" fill-opacity="1.00"/>
<rect x="209" y="336" width="2.05" height="69" fill="rgb(33,122,232)" fill-opacity="1.00"/>
<rect x="211" y="336" width="2.05" height="69" fill="rgb(39,148,235)" fill-opacity="1.00"/>
<rect x="213" y="336" width="2.05" height="69" fill="rgb(30,110,230)" fill-opacity="1.00"/>
<rect x="215" y="336" width="2.05" height="69" fill="rgb(35,132,233)" fill-opacity="1.00"/>
<rect x="217" y="336" width="2.05" height="69" fill="rgb(36,132,233)" fill-opacity="1.00"/>
<rect x="219" y="336" width="2.05" height="69" fill="rgb(27,98,225)" fill-opacity="1.00"/>
<rect x="221" y="336" width="2.05" height="69" fill="rgb(47,177,236)" fill-opacity="1.00"/>
<rect x="223" y="336" width="2.05" height="69" fill="rgb(39,146,235)" fill-opacity="1.00"/>
<rect x="225" y="336" width="2.05" height="69" fill="rgb(51,193,231)" fill-opacity="1.00"/>
<rect x="227" y="336" width="2.05" height="69" fill="rgb(21,69,212)" fill-opacity="1.00"/>
<rect x="229" y="336" width="2.05" height="69" fill="rgb(41,154,236)" fill-opacity="1.00"/>
<rect x="231" y="336" width="2.05" height="69" fill="rgb(50,192,231)" fill-opacity="1.00"/>
<rect x="233" y="336" width="2.05" height="69" fill="rgb(37,140,234)" fill-opacity="1.00"/>
<rect x="235" y="336" width="2.05" height="69" fill="rgb(46,175,236)" fill-opacity="1.00"/>
<rect x="237" y="336" width="2.05" height="69" fill="rgb(35,131,233)" fill-opacity="1.00"/>
<rect x="239" y="336" width="2.05" height="69" fill="rgb(50,189,232)" fill-opacity="1.00"/>
<rect x="241" y="336" width="2.05" height="69" fill="rgb(47,179,235)" fill-opacity="1.00"/>
<rect x="243" y="336" width="2.05" height="69" fill="rgb(43,160,237)" fill-opacity="1.00"/>
<rect x="245" y="336" width="2.05" height="69" fill="rgb(51,193,230)" fill-opacity="1.00"/>
<rect x="247" y="336" width="2.05" height="69" fill="rgb(40,150,235)" fill-opacity="1.00"/>
<rect x="249" y="336" width="2.05" height="69" fill="rgb(51,193,230)" fill-opacity="1.00"/>
<rect x="251" y="336" width="2.05" height="69" fill="rgb(56,211,221)" fill-opacity="1.00"/>
<rect x="253" y="336" width="2.05" height="69" fill="rgb(49,187,232)" fill-opacity="1.00"/>
<rect x="255" y="336" width="2.05" height="69" fill="rgb(52,198,229)" fill-opacity="1.00"/>
<rect x="257" y="336" width="2.05" height="69" fill="rgb(48,184,233)" fill-opacity="1.00"/>
<rect x="259" y="336" width="2.05" height="69" fill="rgb(53,204,227)" fill-opacity="1.00"/>
<rect x="261" y="336" width="2.05" height="69" fill="rgb(52,199,228)" fill-opacity="1.00"/>
<rect x="263" y="336" width="2.05" height="69" fill="rgb(60,215,200)" fill-opacity="1.00"/>
<rect x="265" y="336" width="2.05" height="69" fill="rgb(54,206,226)" fill-opacity="1.00"/>
<rect x="267" y="336" width="2.05" height="69" fill="rgb(51,195,230)" fill-opacity="1.00"/>
<rect x="269" y="336" width="2.05" height="69" fill="rgb(58,213,211)" fill-opacity="1.00"/>
<rect x="271" y="336" width="2.05" height="69" fill="rgb(57,212,214)" fill-opacity="1.00"/>
<rect x="273" y="336" width="2.05" height="69" fill="rgb(64,219,184)" fill-opacity="1.00"/>
<rect x="275" y="336" width="2.05" height="69" fill="rgb(64,219,185)" fill-opacity="1.00"/>
<rect x="277" y="336" width="2.05" height="69" fill="rgb(65,220,182)" fill-opacity="1.00"/>
<rect x="279" y="336" width="2.05" height="69" fill="rgb(77,222,145)" fill-opacity="1.00"/>
<rect x="281" y="336" width="2.05" height="69" fill="rgb(94,225,108)" fill-opacity="1.00"/>
<rect x="283" y="336" width="2.05" height="69" fill="rgb(66,220,177)" fill-opacity="1.00"/>
<rect x="285" y="336" width="2.05" height="69" fill="rgb(65,220,181)" fill-opacity="1.00"/>
<rect x="287" y="336" width="2.05" height="69" fill="rgb(88,225,115)" fill-opacity="1.00"/>
<rect x="289" y="336" width="2.05" height="69" fill="rgb(86,224,121)" fill-opacity="1.00"/>
<rect x="291" y="336" width="2.05" height="69" fill="rgb(83,224,130)" fill-opacity="1.00"/>
<rect x="293" y="336" width="2.05" height="69" fill="rgb(135,227,81)" fill-opacity="1.00"/>
<rect x="295" y="336" width="2.05" height="69" fill="rgb(87,224,119)" fill-opacity="1.00"/>
<rect x="297" y="336" width="2.05" height="69" fill="rgb(75,222,152)" fill-opacity="1.00"/>
<rect x="299" y="336" width="2.05" height="69" fill="rgb(207,213,36)" fill-opacity="1.00"/>
<rect x="301" y="336" width="2.05" height="69" fill="rgb(87,224,118)" fill-opacity="1.00"/>
<rect x="303" y="336" width="2.05" height="69" fill="rgb(79,223,141)" fill-opacity="1.00"/>
<rect x="305" y="336" width="2.05" height="69" fill="rgb(68,221,172)" fill-opacity="1.00"/>
<rect x="307" y="336" width="2.05" height="69" fill="rgb(64,219,185)" fill-opacity="1.00"/>
<rect x="309" y="336" width="2.05" height="69" fill="rgb(114,226,94)" fill-opacity="1.00"/>
<rect x="311" y="336" width="2.05" height="69" fill="rgb(83,224,128)" fill-opacity="1.00"/>
<rect x="313" y="336" width="2.05" height="69" fill="rgb(57,212,215)" fill-opacity="1.00"/>
<rect x="315" y="336" width="2.05" height="69" fill="rgb(60,215,202)" fill-opacity="1.00"/>
<rect x="317" y="336" width="2.05" height="69" fill="rgb(51,193,231)" fill-opacity="1.00"/>
<rect x="319" y="336" width="2.05" height="69" fill="rgb(62,217,195)" fill-opacity="1.00"/>
<rect x="321" y="336" width="2.05" height="69" fill="rgb(55,210,224)" fill-opacity="1.00"/>
<rect x="323" y="336" width="2.05" height="69" fill="rgb(62,217,194)" fill-opacity="1.00"/>
<rect x="325" y="336" width="2.05" height="69" fill="rgb(49,184,233)" fill-opacity="1.00"/>
<rect x="327" y="336" width="2.05" height="69" fill="rgb(49,186,233)" fill-opacity="1.00"/>
<rect x="329" y="336" width="2.05" height="69" fill="rgb(52,199,229)" fill-opacity="1.00"/>
<rect x="331" y="336" width="2.05" height="69" fill="rgb(55,209,225)" fill-opacity="1.00"/>
<rect x="333" y="336" width="2.05" height="69" fill="rgb(64,219,186)" fill-opacity="1.00"/>
<rect x="335" y="336" width="2.05" height="69" fill="rgb(46,172,237)" fill-opacity="1.00"/>
<rect x="337" y="336" width="2.05" height="69" fill="rgb(54,208,226)" fill-opacity="1.00"/>
<rect x="339" y="336" width="2.05" height="69" fill="rgb(51,195,230)" fill-opacity="1.00"/>
<rect x="341" y="336" width="2.05" height="69" fill="rgb(46,175,236)" fill-opacity="1.00"/>
<rect x="343" y="336" width="2.05" height="69" fill="rgb(62,217,192)" fill-opacity="1.00"/>
<rect x="345" y="336" width="2.05" height="69" fill="rgb(54,207,226)" fill-opacity="1.00"/>
<rect x="347" y="336" width="2.05" height="69" fill="rgb(56,211,221)" fill-opacity="1.00"/>
<rect x="349" y="336" width="2.05" height="69" fill="rgb(45,168,238)" fill-opacity="1.00"/>
<rect x="351" y="336" width="2.05" height="69" fill="rgb(25,89,221)" fill-opacity="1.00"/>
<rect x="353" y="336" width="2.05" height="69" fill="rgb(40,151,236)" fill-opacity="1.00"/>
<rect x="355" y="336" width="2.05" height="69" fill="rgb(41,154,236)" fill-opacity="1.00"/>
<rect x="357" y="336" width="2.05" height="69" fill="rgb(46,173,237)" fill-opacity="1.00"/>
<rect x="359" y="336" width="2.05" height="69" fill="rgb(29,107,229)" fill-opacity="1.00"/>
<rect x="361" y="336" width="2.05" height="69" fill="rgb(29,104,227)" fill-opacity="1.00"/>
<rect x="363" y="336" width="2.05" height="69" fill="rgb(40,150,235)" fill-opacity="1.00"/>
<rect x="365" y="336" width="2.05" height="69" fill="rgb(48,183,234)" fill-opacity="1.00"/>
<rect x="367" y="336" width="2.05" height="69" fill="rgb(30,110,230)" fill-opacity="1.00"/>
<rect x="369" y="336" width="2.05" height="69" fill="rgb(33,123,232)" fill-opacity="1.00"/>
<rect x="371" y="336" width="2.05" height="69" fill="rgb(34,124,232)" fill-opacity="1.00"/>
<rect x="373" y="336" width="2.05" height="69" fill="rgb(31,115,231)" fill-opacity="1.00"/>
<rect x="375" y="336" width="2.05" height="69" fill="rgb(23,79,217)" fill-opacity="1.00"/>
<rect x="377" y="336" width="2.05" height="69" fill="rgb(27,95,224)" fill-opacity="1.00"/>
<rect x="379" y="336" width="2.05" height="69" fill="rgb(27,97,225)" fill-opacity="0.90"/>
<rect x="381" y="336" width="2.05" height="69" fill="rgb(37,137,234)" fill-opacity="0.70"/>
<rect x="383" y="336" width="2.05" height="69" fill="rgb(20,64,210)" fill-opacity="0.50"/>
<rect x="385" y="336" width="2.05" height="69" fill="rgb(38,141,234)" fill-opacity="0.30"/>
<rect x="387" y="336" width="2.05" height="69" fill="rgb(20,64,210)" fill-opacity="0.10"/>
<rect x="389" y="336" width="2.05" height="69" fill="rgb(39,144,235)" fill-opacity="0.00"/>
</g></g>
<g clip-path="url(#clC430)"><g filter="url(#blurx)">
<rect x="108" y="405" width="2.05" height="68" fill="rgb(25,89,221)" fill-opacity="0.30"/>
<rect x="110" y="405" width="2.05" height="68" fill="rgb(31,114,231)" fill-opacity="0.50"/>
<rect x="112" y="405" width="2.05" height="68" fill="rgb(33,121,231)" fill-opacity="0.70"/>
<rect x="114" y="405" width="2.05" height="68" fill="rgb(24,81,218)" fill-opacity="0.90"/>
<rect x="116" y="405" width="2.05" height="68" fill="rgb(27,97,224)" fill-opacity="1.00"/>
<rect x="118" y="405" width="2.05" height="68" fill="rgb(32,120,231)" fill-opacity="1.00"/>
<rect x="120" y="405" width="2.05" height="68" fill="rgb(33,121,231)" fill-opacity="1.00"/>
<rect x="122" y="405" width="2.05" height="68" fill="rgb(26,90,221)" fill-opacity="1.00"/>
<rect x="124" y="405" width="2.05" height="68" fill="rgb(25,86,220)" fill-opacity="1.00"/>
<rect x="126" y="405" width="2.05" height="68" fill="rgb(25,87,220)" fill-opacity="1.00"/>
<rect x="128" y="405" width="2.05" height="68" fill="rgb(33,121,231)" fill-opacity="1.00"/>
<rect x="130" y="405" width="2.05" height="68" fill="rgb(33,122,232)" fill-opacity="1.00"/>
<rect x="132" y="405" width="2.05" height="68" fill="rgb(36,134,233)" fill-opacity="1.00"/>
<rect x="134" y="405" width="2.05" height="68" fill="rgb(39,147,235)" fill-opacity="1.00"/>
<rect x="136" y="405" width="2.05" height="68" fill="rgb(36,135,233)" fill-opacity="1.00"/>
<rect x="138" y="405" width="2.05" height="68" fill="rgb(28,99,225)" fill-opacity="1.00"/>
<rect x="140" y="405" width="2.05" height="68" fill="rgb(32,117,231)" fill-opacity="1.00"/>
<rect x="142" y="405" width="2.05" height="68" fill="rgb(48,183,234)" fill-opacity="1.00"/>
<rect x="144" y="405" width="2.05" height="68" fill="rgb(54,205,227)" fill-opacity="1.00"/>
<rect x="146" y="405" width="2.05" height="68" fill="rgb(43,161,237)" fill-opacity="1.00"/>
<rect x="148" y="405" width="2.05" height="68" fill="rgb(50,192,231)" fill-opacity="1.00"/>
<rect x="150" y="405" width="2.05" height="68" fill="rgb(45,172,237)" fill-opacity="1.00"/>
<rect x="152" y="405" width="2.05" height="68" fill="rgb(42,157,236)" fill-opacity="1.00"/>
<rect x="154" y="405" width="2.05" height="68" fill="rgb(48,181,234)" fill-opacity="1.00"/>
<rect x="156" y="405" width="2.05" height="68" fill="rgb(38,142,234)" fill-opacity="1.00"/>
<rect x="158" y="405" width="2.05" height="68" fill="rgb(44,167,238)" fill-opacity="1.00"/>
<rect x="160" y="405" width="2.05" height="68" fill="rgb(60,215,201)" fill-opacity="1.00"/>
<rect x="162" y="405" width="2.05" height="68" fill="rgb(38,140,234)" fill-opacity="1.00"/>
<rect x="164" y="405" width="2.05" height="68" fill="rgb(61,216,199)" fill-opacity="1.00"/>
<rect x="166" y="405" width="2.05" height="68" fill="rgb(43,160,237)" fill-opacity="1.00"/>
<rect x="168" y="405" width="2.05" height="68" fill="rgb(52,199,229)" fill-opacity="1.00"/>
<rect x="170" y="405" width="2.05" height="68" fill="rgb(51,192,231)" fill-opacity="1.00"/>
<rect x="172" y="405" width="2.05" height="68" fill="rgb(54,206,226)" fill-opacity="1.00"/>
<rect x="174" y="405" width="2.05" height="68" fill="rgb(57,212,215)" fill-opacity="1.00"/>
<rect x="176" y="405" width="2.05" height="68" fill="rgb(66,220,176)" fill-opacity="1.00"/>
<rect x="178" y="405" width="2.05" height="68" fill="rgb(63,218,190)" fill-opacity="1.00"/>
<rect x="180" y="405" width="2.05" height="68" fill="rgb(55,209,225)" fill-opacity="1.00"/>
<rect x="182" y="405" width="2.05" height="68" fill="rgb(120,226,91)" fill-opacity="1.00"/>
<rect x="184" y="405" width="2.05" height="68" fill="rgb(58,213,213)" fill-opacity="1.00"/>
<rect x="186" y="405" width="2.05" height="68" fill="rgb(59,214,209)" fill-opacity="1.00"/>
<rect x="188" y="405" width="2.05" height="68" fill="rgb(109,226,98)" fill-opacity="1.00"/>
<rect x="190" y="405" width="2.05" height="68" fill="rgb(54,208,226)" fill-opacity="1.00"/>
<rect x="192" y="405" width="2.05" height="68" fill="rgb(68,221,173)" fill-opacity="1.00"/>
<rect x="194" y="405" width="2.05" height="68" fill="rgb(130,227,85)" fill-opacity="1.00"/>
<rect x="196" y="405" width="2.05" height="68" fill="rgb(77,222,146)" fill-opacity="1.00"/>
<rect x="198" y="405" width="2.05" height="68" fill="rgb(87,224,118)" fill-opacity="1.00"/>
<rect x="200" y="405" width="2.05" height="68" fill="rgb(132,227,83)" fill-opacity="1.00"/>
<rect x="202" y="405" width="2.05" height="68" fill="rgb(83,224,129)" fill-opacity="1.00"/>
<rect x="204" y="405" width="2.05" height="68" fill="rgb(87,224,120)" fill-opacity="1.00"/>
<rect x="206" y="405" width="2.05" height="68" fill="rgb(66,220,176)" fill-opacity="1.00"/>
<rect x="208" y="405" width="2.05" height="68" fill="rgb(64,219,186)" fill-opacity="1.00"/>
<rect x="210" y="405" width="2.05" height="68" fill="rgb(62,217,195)" fill-opacity="1.00"/>
<rect x="212" y="405" width="2.05" height="68" fill="rgb(87,224,119)" fill-opacity="1.00"/>
<rect x="214" y="405" width="2.05" height="68" fill="rgb(64,219,183)" fill-opacity="1.00"/>
<rect x="216" y="405" width="2.05" height="68" fill="rgb(69,221,169)" fill-opacity="1.00"/>
<rect x="218" y="405" width="2.05" height="68" fill="rgb(78,223,142)" fill-opacity="1.00"/>
<rect x="220" y="405" width="2.05" height="68" fill="rgb(59,214,207)" fill-opacity="1.00"/>
<rect x="222" y="405" width="2.05" height="68" fill="rgb(59,214,208)" fill-opacity="1.00"/>
<rect x="224" y="405" width="2.05" height="68" fill="rgb(70,221,167)" fill-opacity="1.00"/>
<rect x="226" y="405" width="2.05" height="68" fill="rgb(76,222,149)" fill-opacity="1.00"/>
<rect x="228" y="405" width="2.05" height="68" fill="rgb(53,201,228)" fill-opacity="1.00"/>
<rect x="230" y="405" width="2.05" height="68" fill="rgb(52,198,229)" fill-opacity="1.00"/>
<rect x="232" y="405" width="2.05" height="68" fill="rgb(63,218,187)" fill-opacity="1.00"/>
<rect x="234" y="405" width="2.05" height="68" fill="rgb(55,210,224)" fill-opacity="1.00"/>
<rect x="236" y="405" width="2.05" height="68" fill="rgb(48,184,234)" fill-opacity="1.00"/>
<rect x="238" y="405" width="2.05" height="68" fill="rgb(41,156,236)" fill-opacity="1.00"/>
<rect x="240" y="405" width="2.05" height="68" fill="rgb(49,186,233)" fill-opacity="1.00"/>
<rect x="242" y="405" width="2.05" height="68" fill="rgb(49,188,232)" fill-opacity="1.00"/>
<rect x="244" y="405" width="2.05" height="68" fill="rgb(47,177,236)" fill-opacity="1.00"/>
<rect x="246" y="405" width="2.05" height="68" fill="rgb(55,208,226)" fill-opacity="1.00"/>
<rect x="248" y="405" width="2.05" height="68" fill="rgb(50,188,232)" fill-opacity="1.00"/>
<rect x="250" y="405" width="2.05" height="68" fill="rgb(48,181,235)" fill-opacity="1.00"/>
<rect x="252" y="405" width="2.05" height="68" fill="rgb(47,177,236)" fill-opacity="1.00"/>
<rect x="254" y="405" width="2.05" height="68" fill="rgb(50,191,231)" fill-opacity="1.00"/>
<rect x="256" y="405" width="2.05" height="68" fill="rgb(48,183,234)" fill-opacity="1.00"/>
<rect x="258" y="405" width="2.05" height="68" fill="rgb(60,215,205)" fill-opacity="1.00"/>
<rect x="260" y="405" width="2.05" height="68" fill="rgb(42,159,237)" fill-opacity="1.00"/>
<rect x="262" y="405" width="2.05" height="68" fill="rgb(48,181,234)" fill-opacity="1.00"/>
<rect x="264" y="405" width="2.05" height="68" fill="rgb(45,170,238)" fill-opacity="1.00"/>
<rect x="266" y="405" width="2.05" height="68" fill="rgb(38,142,234)" fill-opacity="1.00"/>
<rect x="268" y="405" width="2.05" height="68" fill="rgb(45,172,237)" fill-opacity="1.00"/>
<rect x="270" y="405" width="2.05" height="68" fill="rgb(46,173,237)" fill-opacity="1.00"/>
<rect x="272" y="405" width="2.05" height="68" fill="rgb(33,124,232)" fill-opacity="1.00"/>
<rect x="274" y="405" width="2.05" height="68" fill="rgb(36,133,233)" fill-opacity="1.00"/>
<rect x="276" y="405" width="2.05" height="68" fill="rgb(37,140,234)" fill-opacity="1.00"/>
<rect x="278" y="405" width="2.05" height="68" fill="rgb(39,146,235)" fill-opacity="1.00"/>
<rect x="280" y="405" width="2.05" height="68" fill="rgb(46,175,236)" fill-opacity="1.00"/>
<rect x="282" y="405" width="2.05" height="68" fill="rgb(27,96,224)" fill-opacity="1.00"/>
<rect x="284" y="405" width="2.05" height="68" fill="rgb(32,116,231)" fill-opacity="1.00"/>
<rect x="286" y="405" width="2.05" height="68" fill="rgb(26,90,222)" fill-opacity="1.00"/>
<rect x="288" y="405" width="2.05" height="68" fill="rgb(24,83,219)" fill-opacity="1.00"/>
<rect x="290" y="405" width="2.05" height="68" fill="rgb(30,108,229)" fill-opacity="1.00"/>
<rect x="292" y="405" width="2.05" height="68" fill="rgb(39,145,235)" fill-opacity="0.90"/>
<rect x="294" y="405" width="2.05" height="68" fill="rgb(25,88,221)" fill-opacity="0.70"/>
<rect x="296" y="405" width="2.05" height="68" fill="rgb(15,40,199)" fill-opacity="0.50"/>
<rect x="298" y="405" width="2.05" height="68" fill="rgb(29,107,229)" fill-opacity="0.30"/>
<rect x="300" y="405" width="2.05" height="68" fill="rgb(25,86,220)" fill-opacity="0.10"/>
<rect x="302" y="405" width="2.05" height="68" fill="rgb(16,47,203)" fill-opacity="0.00"/>
</g></g>
</g>
<path d="M 200 -93 L 470 -91" fill="none" stroke="rgb(60,210,160)" stroke-width="5.8" stroke-opacity="0.4" stroke-linecap="round" stroke-linejoin="round" filter="url(#blur2)"/>
<path d="M 200 -93 L 470 -91" fill="none" stroke="rgb(105,225,100)" stroke-width="2.8" stroke-opacity="1" stroke-linecap="round" stroke-linejoin="round" filter="url(#blur05)"/>
<path d="M 470 -91 L 535 -90.5" fill="none" stroke="rgb(50,200,240)" stroke-width="3" stroke-opacity="0.9" stroke-linecap="round" stroke-linejoin="round" filter="url(#blur05)"/>
<path d="M 319.5 -29 L 205 -22" fill="none" stroke="rgb(60,210,160)" stroke-width="5.8" stroke-opacity="0.4" stroke-linecap="round" stroke-linejoin="round" filter="url(#blur2)"/>
<path d="M 319.5 -29 L 205 -22" fill="none" stroke="rgb(105,225,100)" stroke-width="2.8" stroke-opacity="1" stroke-linecap="round" stroke-linejoin="round" filter="url(#blur05)"/>
<path d="M 205 -22 L 100 -23" fill="none" stroke="rgb(40,170,240)" stroke-width="2.4" stroke-opacity="0.9" stroke-linecap="round" stroke-linejoin="round" filter="url(#blur05)"/>
<path d="M 135 45 L 450 48.5" fill="none" stroke="rgb(60,210,160)" stroke-width="5.8" stroke-opacity="0.4" stroke-linecap="round" stroke-linejoin="round" filter="url(#blur2)"/>
<path d="M 135 45 L 450 48.5" fill="none" stroke="rgb(105,225,100)" stroke-width="2.8" stroke-opacity="1" stroke-linecap="round" stroke-linejoin="round" filter="url(#blur05)"/>
<path d="M 450 46 L 525 47.5" fill="none" stroke="rgb(50,200,240)" stroke-width="3" stroke-opacity="0.9" stroke-linecap="round" stroke-linejoin="round" filter="url(#blur05)"/>
<path d="M 300 -99.5 L 470 -94" fill="none" stroke="rgb(10,30,160)" stroke-width="2.5" stroke-opacity="0.9" stroke-linecap="round" stroke-linejoin="round" filter="url(#blur05)"/>
<path d="M 291.5 -167 L 291.5 -115 Q 290 -111 283 -107.5 L 277 -104.5 Q 285 -102.5 300 -101.5 L 380 -97.5" fill="none" stroke="rgb(40,190,255)" stroke-width="7" stroke-opacity="0.4" stroke-linecap="round" stroke-linejoin="round" filter="url(#blur2)"/>
<path d="M 291.5 -167 L 291.5 -115 Q 290 -111 283 -107.5 L 277 -104.5 Q 285 -102.5 300 -101.5 L 380 -97.5" fill="none" stroke="rgb(50,226,240)" stroke-width="4" stroke-opacity="1" stroke-linecap="round" stroke-linejoin="round" filter="url(#blur05)"/>
<path d="M 380 -97.5 L 470 -94" fill="none" stroke="rgb(40,170,240)" stroke-width="2.2" stroke-opacity="0.8" stroke-linecap="round" stroke-linejoin="round" filter="url(#blur05)"/>
<path d="M 365.5 -106.5 Q 372 -102.5 390 -100.5 L 440 -96.5 L 480 -94" fill="none" stroke="rgb(60,220,140)" stroke-width="10.6" stroke-opacity="0.6" stroke-linecap="round" stroke-linejoin="round" filter="url(#blur2)"/>
<path d="M 365.5 -106.5 Q 372 -102.5 390 -100.5 L 440 -96.5 L 480 -94" fill="none" stroke="rgb(175,230,60)" stroke-width="4.6" stroke-opacity="1" stroke-linecap="round" stroke-linejoin="round" filter="url(#blur05)"/>
<path d="M 378.5 -167.5 L 378.5 -118 Q 378 -113 372 -110 L 365.5 -106.5" fill="none" stroke="rgb(60,212,165)" stroke-width="22" stroke-opacity="0.75" stroke-linecap="butt" stroke-linejoin="round" filter="url(#blur3)"/>
<path d="M 378.5 -167.5 L 378.5 -118 Q 378 -113 372 -110 L 365.5 -106.5" fill="none" stroke="rgb(120,225,90)" stroke-width="12" stroke-opacity="0.8" stroke-linecap="butt" stroke-linejoin="round" filter="url(#blur1)"/>
<path d="M 378.5 -167.5 L 378.5 -118 Q 378 -113 372 -110 L 365.5 -106.5" fill="none" stroke="rgb(220,225,40)" stroke-width="8.5" stroke-opacity="1" stroke-linecap="butt" stroke-linejoin="round" filter="url(#blur1)"/>
<path d="M 378.5 -167.5 L 378.5 -118 Q 378 -113 372 -110 L 365.5 -106.5" fill="none" stroke="rgb(240,128,20)" stroke-width="4.2" stroke-opacity="1" stroke-linecap="butt" stroke-linejoin="round" filter="url(#blur05)"/>
<path d="M 480 -94 L 565 -92.5" fill="none" stroke="rgb(60,210,240)" stroke-width="2.6" stroke-opacity="0.9" stroke-linecap="round" stroke-linejoin="round" filter="url(#blur05)"/>
<path d="M 465.5 -166 L 465.5 -118 Q 465 -113 459 -110 L 452 -105.5 Q 463 -102.5 478 -101 L 528 -96.5 L 565 -93" fill="none" stroke="rgb(40,190,255)" stroke-width="7" stroke-opacity="0.4" stroke-linecap="round" stroke-linejoin="round" filter="url(#blur2)"/>
<path d="M 465.5 -166 L 465.5 -118 Q 465 -113 459 -110 L 452 -105.5 Q 463 -102.5 478 -101 L 528 -96.5 L 565 -93" fill="none" stroke="rgb(50,226,240)" stroke-width="4" stroke-opacity="1" stroke-linecap="round" stroke-linejoin="round" filter="url(#blur05)"/>
<path d="M 204 -91.5 L 204 -50 Q 203.5 -46 200 -43 L 198.5 -40.5 L 212.5 -35.6 L 231 -29.4" fill="none" stroke="rgb(40,190,255)" stroke-width="7" stroke-opacity="0.4" stroke-linecap="round" stroke-linejoin="round" filter="url(#blur2)"/>
<path d="M 204 -91.5 L 204 -50 Q 203.5 -46 200 -43 L 198.5 -40.5 L 212.5 -35.6 L 231 -29.4" fill="none" stroke="rgb(50,226,240)" stroke-width="4" stroke-opacity="1" stroke-linecap="round" stroke-linejoin="round" filter="url(#blur05)"/>
<path d="M 284.4 -41.25 L 300 -35 L 319.5 -29" fill="none" stroke="rgb(60,220,140)" stroke-width="10.6" stroke-opacity="0.6" stroke-linecap="round" stroke-linejoin="round" filter="url(#blur2)"/>
<path d="M 284.4 -41.25 L 300 -35 L 319.5 -29" fill="none" stroke="rgb(175,230,60)" stroke-width="4.6" stroke-opacity="1" stroke-linecap="round" stroke-linejoin="round" filter="url(#blur05)"/>
<path d="M 284.4 -41.25 L 300 -35 L 310 -32" fill="none" stroke="rgb(235,150,25)" stroke-width="3" stroke-opacity="1" stroke-linecap="round" stroke-linejoin="round" filter="url(#blur05)"/>
<path d="M 291.6 -92.5 L 291.6 -50 Q 291 -46 287 -43.5 L 284.4 -41.25" fill="none" stroke="rgb(60,212,165)" stroke-width="22" stroke-opacity="0.75" stroke-linecap="butt" stroke-linejoin="round" filter="url(#blur3)"/>
<path d="M 291.6 -92.5 L 291.6 -50 Q 291 -46 287 -43.5 L 284.4 -41.25" fill="none" stroke="rgb(120,225,90)" stroke-width="12" stroke-opacity="0.8" stroke-linecap="butt" stroke-linejoin="round" filter="url(#blur1)"/>
<path d="M 291.6 -92.5 L 291.6 -50 Q 291 -46 287 -43.5 L 284.4 -41.25" fill="none" stroke="rgb(220,225,40)" stroke-width="8.5" stroke-opacity="1" stroke-linecap="butt" stroke-linejoin="round" filter="url(#blur1)"/>
<path d="M 291.6 -92.5 L 291.6 -50 Q 291 -46 287 -43.5 L 284.4 -41.25" fill="none" stroke="rgb(240,128,20)" stroke-width="4.2" stroke-opacity="1" stroke-linecap="butt" stroke-linejoin="round" filter="url(#blur05)"/>
<path d="M 378 -90 L 378 -44 Q 377 -41 374 -39.5 L 387.5 -34 L 408.75 -29 Q 400 -26 387.5 -25 L 337.5 -24 L 300 -22.5" fill="none" stroke="rgb(40,190,255)" stroke-width="7" stroke-opacity="0.4" stroke-linecap="round" stroke-linejoin="round" filter="url(#blur2)"/>
<path d="M 378 -90 L 378 -44 Q 377 -41 374 -39.5 L 387.5 -34 L 408.75 -29 Q 400 -26 387.5 -25 L 337.5 -24 L 300 -22.5" fill="none" stroke="rgb(50,226,240)" stroke-width="4" stroke-opacity="1" stroke-linecap="round" stroke-linejoin="round" filter="url(#blur05)"/>
<path d="M 117 -21 L 117 15 L 117.5 17.5 L 130 27.5 Q 120 30 112.5 31 L 87.5 35 L 54 38.75 Q 60 42 75 42 L 135 41" fill="none" stroke="rgb(40,190,255)" stroke-width="7" stroke-opacity="0.4" stroke-linecap="round" stroke-linejoin="round" filter="url(#blur2)"/>
<path d="M 117 -21 L 117 15 L 117.5 17.5 L 130 27.5 Q 120 30 112.5 31 L 87.5 35 L 54 38.75 Q 60 42 75 42 L 135 41" fill="none" stroke="rgb(50,226,240)" stroke-width="4" stroke-opacity="1" stroke-linecap="round" stroke-linejoin="round" filter="url(#blur05)"/>
<path d="M 125 41 L 150 40" fill="none" stroke="rgb(200,230,50)" stroke-width="3.5" stroke-opacity="1" stroke-linecap="round" stroke-linejoin="round" filter="url(#blur05)"/>
<path d="M 211.25 27.5 L 187.5 32.5 L 150 38" fill="none" stroke="rgb(60,220,140)" stroke-width="10.6" stroke-opacity="0.6" stroke-linecap="round" stroke-linejoin="round" filter="url(#blur2)"/>
<path d="M 211.25 27.5 L 187.5 32.5 L 150 38" fill="none" stroke="rgb(175,230,60)" stroke-width="4.6" stroke-opacity="1" stroke-linecap="round" stroke-linejoin="round" filter="url(#blur05)"/>
<path d="M 204 -23 L 204 15 Q 204.5 20 208 24 L 211.25 27.5" fill="none" stroke="rgb(60,212,165)" stroke-width="22" stroke-opacity="0.75" stroke-linecap="butt" stroke-linejoin="round" filter="url(#blur3)"/>
<path d="M 204 -23 L 204 15 Q 204.5 20 208 24 L 211.25 27.5" fill="none" stroke="rgb(120,225,90)" stroke-width="12" stroke-opacity="0.8" stroke-linecap="butt" stroke-linejoin="round" filter="url(#blur1)"/>
<path d="M 204 -23 L 204 15 Q 204.5 20 208 24 L 211.25 27.5" fill="none" stroke="rgb(220,225,40)" stroke-width="8.5" stroke-opacity="1" stroke-linecap="butt" stroke-linejoin="round" filter="url(#blur1)"/>
<path d="M 204 -23 L 204 15 Q 204.5 20 208 24 L 211.25 27.5" fill="none" stroke="rgb(240,128,20)" stroke-width="4.2" stroke-opacity="1" stroke-linecap="butt" stroke-linejoin="round" filter="url(#blur05)"/>
<path d="M 292 -22 L 292 23 L 297.5 26 L 292 29 Q 280 33 275 34 L 240 37.5" fill="none" stroke="rgb(40,190,255)" stroke-width="7" stroke-opacity="0.4" stroke-linecap="round" stroke-linejoin="round" filter="url(#blur2)"/>
<path d="M 292 -22 L 292 23 L 297.5 26 L 292 29 Q 280 33 275 34 L 240 37.5" fill="none" stroke="rgb(50,226,240)" stroke-width="4" stroke-opacity="1" stroke-linecap="round" stroke-linejoin="round" filter="url(#blur05)"/>
<path d="M 292 29 L 292 47" fill="none" stroke="rgb(40,190,255)" stroke-width="7" stroke-opacity="0.4" stroke-linecap="round" stroke-linejoin="round" filter="url(#blur2)"/>
<path d="M 292 29 L 292 47" fill="none" stroke="rgb(50,226,240)" stroke-width="4" stroke-opacity="1" stroke-linecap="round" stroke-linejoin="round" filter="url(#blur05)"/>
<path d="M 200 122 L 470 124" fill="none" stroke="rgb(60,210,160)" stroke-width="5.8" stroke-opacity="0.4" stroke-linecap="round" stroke-linejoin="round" filter="url(#blur2)"/>
<path d="M 200 122 L 470 124" fill="none" stroke="rgb(105,225,100)" stroke-width="2.8" stroke-opacity="1" stroke-linecap="round" stroke-linejoin="round" filter="url(#blur05)"/>
<path d="M 470 124 L 535 124.5" fill="none" stroke="rgb(50,200,240)" stroke-width="3" stroke-opacity="0.9" stroke-linecap="round" stroke-linejoin="round" filter="url(#blur05)"/>
<path d="M 319.5 186 L 205 193" fill="none" stroke="rgb(60,210,160)" stroke-width="5.8" stroke-opacity="0.4" stroke-linecap="round" stroke-linejoin="round" filter="url(#blur2)"/>
<path d="M 319.5 186 L 205 193" fill="none" stroke="rgb(105,225,100)" stroke-width="2.8" stroke-opacity="1" stroke-linecap="round" stroke-linejoin="round" filter="url(#blur05)"/>
<path d="M 205 193 L 100 192" fill="none" stroke="rgb(40,170,240)" stroke-width="2.4" stroke-opacity="0.9" stroke-linecap="round" stroke-linejoin="round" filter="url(#blur05)"/>
<path d="M 135 257.5 L 450 261" fill="none" stroke="rgb(60,210,160)" stroke-width="5.8" stroke-opacity="0.4" stroke-linecap="round" stroke-linejoin="round" filter="url(#blur2)"/>
<path d="M 135 257.5 L 450 261" fill="none" stroke="rgb(105,225,100)" stroke-width="2.8" stroke-opacity="1" stroke-linecap="round" stroke-linejoin="round" filter="url(#blur05)"/>
<path d="M 450 261 L 525 262.5" fill="none" stroke="rgb(50,200,240)" stroke-width="3" stroke-opacity="0.9" stroke-linecap="round" stroke-linejoin="round" filter="url(#blur05)"/>
<path d="M 300 115.5 L 470 121" fill="none" stroke="rgb(10,30,160)" stroke-width="2.5" stroke-opacity="0.9" stroke-linecap="round" stroke-linejoin="round" filter="url(#blur05)"/>
<path d="M 291.5 48 L 291.5 100 Q 290 104 283 107.5 L 277 110.5 Q 285 112.5 300 113.5 L 380 117.5" fill="none" stroke="rgb(40,190,255)" stroke-width="7" stroke-opacity="0.4" stroke-linecap="round" stroke-linejoin="round" filter="url(#blur2)"/>
<path d="M 291.5 48 L 291.5 100 Q 290 104 283 107.5 L 277 110.5 Q 285 112.5 300 113.5 L 380 117.5" fill="none" stroke="rgb(50,226,240)" stroke-width="4" stroke-opacity="1" stroke-linecap="round" stroke-linejoin="round" filter="url(#blur05)"/>
<path d="M 380 117.5 L 470 121" fill="none" stroke="rgb(40,170,240)" stroke-width="2.2" stroke-opacity="0.8" stroke-linecap="round" stroke-linejoin="round" filter="url(#blur05)"/>
<path d="M 365.5 108.5 Q 372 112.5 390 114.5 L 440 118.5 L 480 121" fill="none" stroke="rgb(60,220,140)" stroke-width="10.6" stroke-opacity="0.6" stroke-linecap="round" stroke-linejoin="round" filter="url(#blur2)"/>
<path d="M 365.5 108.5 Q 372 112.5 390 114.5 L 440 118.5 L 480 121" fill="none" stroke="rgb(175,230,60)" stroke-width="4.6" stroke-opacity="1" stroke-linecap="round" stroke-linejoin="round" filter="url(#blur05)"/>
<path d="M 378.5 47.5 L 378.5 97 Q 378 102 372 105 L 365.5 108.5" fill="none" stroke="rgb(60,212,165)" stroke-width="22" stroke-opacity="0.75" stroke-linecap="butt" stroke-linejoin="round" filter="url(#blur3)"/>
<path d="M 378.5 47.5 L 378.5 97 Q 378 102 372 105 L 365.5 108.5" fill="none" stroke="rgb(120,225,90)" stroke-width="12" stroke-opacity="0.8" stroke-linecap="butt" stroke-linejoin="round" filter="url(#blur1)"/>
<path d="M 378.5 47.5 L 378.5 97 Q 378 102 372 105 L 365.5 108.5" fill="none" stroke="rgb(220,225,40)" stroke-width="8.5" stroke-opacity="1" stroke-linecap="butt" stroke-linejoin="round" filter="url(#blur1)"/>
<path d="M 378.5 47.5 L 378.5 97 Q 378 102 372 105 L 365.5 108.5" fill="none" stroke="rgb(240,128,20)" stroke-width="4.2" stroke-opacity="1" stroke-linecap="butt" stroke-linejoin="round" filter="url(#blur05)"/>
<path d="M 480 121 L 565 122.5" fill="none" stroke="rgb(60,210,240)" stroke-width="2.6" stroke-opacity="0.9" stroke-linecap="round" stroke-linejoin="round" filter="url(#blur05)"/>
<path d="M 465.5 49 L 465.5 97 Q 465 102 459 105 L 452 109.5 Q 463 112.5 478 114 L 528 118.5 L 565 122" fill="none" stroke="rgb(40,190,255)" stroke-width="7" stroke-opacity="0.4" stroke-linecap="round" stroke-linejoin="round" filter="url(#blur2)"/>
<path d="M 465.5 49 L 465.5 97 Q 465 102 459 105 L 452 109.5 Q 463 112.5 478 114 L 528 118.5 L 565 122" fill="none" stroke="rgb(50,226,240)" stroke-width="4" stroke-opacity="1" stroke-linecap="round" stroke-linejoin="round" filter="url(#blur05)"/>
<path d="M 204 123.5 L 204 165 Q 203.5 169 200 172 L 198.5 174.5 L 212.5 179.4 L 231 185.6" fill="none" stroke="rgb(40,190,255)" stroke-width="7" stroke-opacity="0.4" stroke-linecap="round" stroke-linejoin="round" filter="url(#blur2)"/>
<path d="M 204 123.5 L 204 165 Q 203.5 169 200 172 L 198.5 174.5 L 212.5 179.4 L 231 185.6" fill="none" stroke="rgb(50,226,240)" stroke-width="4" stroke-opacity="1" stroke-linecap="round" stroke-linejoin="round" filter="url(#blur05)"/>
<path d="M 284.4 173.75 L 300 180 L 319.5 186" fill="none" stroke="rgb(60,220,140)" stroke-width="10.6" stroke-opacity="0.6" stroke-linecap="round" stroke-linejoin="round" filter="url(#blur2)"/>
<path d="M 284.4 173.75 L 300 180 L 319.5 186" fill="none" stroke="rgb(175,230,60)" stroke-width="4.6" stroke-opacity="1" stroke-linecap="round" stroke-linejoin="round" filter="url(#blur05)"/>
<path d="M 284.4 173.75 L 300 180 L 310 183" fill="none" stroke="rgb(235,150,25)" stroke-width="3" stroke-opacity="1" stroke-linecap="round" stroke-linejoin="round" filter="url(#blur05)"/>
<path d="M 291.6 122.5 L 291.6 165 Q 291 169 287 171.5 L 284.4 173.75" fill="none" stroke="rgb(60,212,165)" stroke-width="22" stroke-opacity="0.75" stroke-linecap="butt" stroke-linejoin="round" filter="url(#blur3)"/>
<path d="M 291.6 122.5 L 291.6 165 Q 291 169 287 171.5 L 284.4 173.75" fill="none" stroke="rgb(120,225,90)" stroke-width="12" stroke-opacity="0.8" stroke-linecap="butt" stroke-linejoin="round" filter="url(#blur1)"/>
<path d="M 291.6 122.5 L 291.6 165 Q 291 169 287 171.5 L 284.4 173.75" fill="none" stroke="rgb(220,225,40)" stroke-width="8.5" stroke-opacity="1" stroke-linecap="butt" stroke-linejoin="round" filter="url(#blur1)"/>
<path d="M 291.6 122.5 L 291.6 165 Q 291 169 287 171.5 L 284.4 173.75" fill="none" stroke="rgb(240,128,20)" stroke-width="4.2" stroke-opacity="1" stroke-linecap="butt" stroke-linejoin="round" filter="url(#blur05)"/>
<path d="M 378 125 L 378 171 Q 377 174 374 175.5 L 387.5 181 L 408.75 186 Q 400 189 387.5 190 L 337.5 191 L 300 192.5" fill="none" stroke="rgb(40,190,255)" stroke-width="7" stroke-opacity="0.4" stroke-linecap="round" stroke-linejoin="round" filter="url(#blur2)"/>
<path d="M 378 125 L 378 171 Q 377 174 374 175.5 L 387.5 181 L 408.75 186 Q 400 189 387.5 190 L 337.5 191 L 300 192.5" fill="none" stroke="rgb(50,226,240)" stroke-width="4" stroke-opacity="1" stroke-linecap="round" stroke-linejoin="round" filter="url(#blur05)"/>
<path d="M 117 194 L 117 230 L 117.5 232.5 L 130 242.5 Q 120 245 112.5 246 L 87.5 250 L 54 253.75 Q 60 257 75 257 L 135 256" fill="none" stroke="rgb(40,190,255)" stroke-width="7" stroke-opacity="0.4" stroke-linecap="round" stroke-linejoin="round" filter="url(#blur2)"/>
<path d="M 117 194 L 117 230 L 117.5 232.5 L 130 242.5 Q 120 245 112.5 246 L 87.5 250 L 54 253.75 Q 60 257 75 257 L 135 256" fill="none" stroke="rgb(50,226,240)" stroke-width="4" stroke-opacity="1" stroke-linecap="round" stroke-linejoin="round" filter="url(#blur05)"/>
<path d="M 125 256 L 150 255" fill="none" stroke="rgb(200,230,50)" stroke-width="3.5" stroke-opacity="1" stroke-linecap="round" stroke-linejoin="round" filter="url(#blur05)"/>
<path d="M 211.25 242.5 L 187.5 247.5 L 150 253" fill="none" stroke="rgb(60,220,140)" stroke-width="10.6" stroke-opacity="0.6" stroke-linecap="round" stroke-linejoin="round" filter="url(#blur2)"/>
<path d="M 211.25 242.5 L 187.5 247.5 L 150 253" fill="none" stroke="rgb(175,230,60)" stroke-width="4.6" stroke-opacity="1" stroke-linecap="round" stroke-linejoin="round" filter="url(#blur05)"/>
<path d="M 204 192 L 204 230 Q 204.5 235 208 239 L 211.25 242.5" fill="none" stroke="rgb(60,212,165)" stroke-width="22" stroke-opacity="0.75" stroke-linecap="butt" stroke-linejoin="round" filter="url(#blur3)"/>
<path d="M 204 192 L 204 230 Q 204.5 235 208 239 L 211.25 242.5" fill="none" stroke="rgb(120,225,90)" stroke-width="12" stroke-opacity="0.8" stroke-linecap="butt" stroke-linejoin="round" filter="url(#blur1)"/>
<path d="M 204 192 L 204 230 Q 204.5 235 208 239 L 211.25 242.5" fill="none" stroke="rgb(220,225,40)" stroke-width="8.5" stroke-opacity="1" stroke-linecap="butt" stroke-linejoin="round" filter="url(#blur1)"/>
<path d="M 204 192 L 204 230 Q 204.5 235 208 239 L 211.25 242.5" fill="none" stroke="rgb(240,128,20)" stroke-width="4.2" stroke-opacity="1" stroke-linecap="butt" stroke-linejoin="round" filter="url(#blur05)"/>
<path d="M 292 193 L 292 238 L 297.5 241 L 292 244 Q 280 248 275 249 L 240 252.5" fill="none" stroke="rgb(40,190,255)" stroke-width="7" stroke-opacity="0.4" stroke-linecap="round" stroke-linejoin="round" filter="url(#blur2)"/>
<path d="M 292 193 L 292 238 L 297.5 241 L 292 244 Q 280 248 275 249 L 240 252.5" fill="none" stroke="rgb(50,226,240)" stroke-width="4" stroke-opacity="1" stroke-linecap="round" stroke-linejoin="round" filter="url(#blur05)"/>
<path d="M 292 244 L 292 262" fill="none" stroke="rgb(40,190,255)" stroke-width="7" stroke-opacity="0.4" stroke-linecap="round" stroke-linejoin="round" filter="url(#blur2)"/>
<path d="M 292 244 L 292 262" fill="none" stroke="rgb(50,226,240)" stroke-width="4" stroke-opacity="1" stroke-linecap="round" stroke-linejoin="round" filter="url(#blur05)"/>
<path d="M 200 337 L 470 339" fill="none" stroke="rgb(60,210,160)" stroke-width="5.8" stroke-opacity="0.4" stroke-linecap="round" stroke-linejoin="round" filter="url(#blur2)"/>
<path d="M 200 337 L 470 339" fill="none" stroke="rgb(105,225,100)" stroke-width="2.8" stroke-opacity="1" stroke-linecap="round" stroke-linejoin="round" filter="url(#blur05)"/>
<path d="M 470 339 L 535 339.5" fill="none" stroke="rgb(50,200,240)" stroke-width="3" stroke-opacity="0.9" stroke-linecap="round" stroke-linejoin="round" filter="url(#blur05)"/>
<path d="M 319.5 401 L 205 408" fill="none" stroke="rgb(60,210,160)" stroke-width="5.8" stroke-opacity="0.4" stroke-linecap="round" stroke-linejoin="round" filter="url(#blur2)"/>
<path d="M 319.5 401 L 205 408" fill="none" stroke="rgb(105,225,100)" stroke-width="2.8" stroke-opacity="1" stroke-linecap="round" stroke-linejoin="round" filter="url(#blur05)"/>
<path d="M 205 408 L 100 407" fill="none" stroke="rgb(40,170,240)" stroke-width="2.4" stroke-opacity="0.9" stroke-linecap="round" stroke-linejoin="round" filter="url(#blur05)"/>
<path d="M 135 472.5 L 450 476" fill="none" stroke="rgb(60,210,160)" stroke-width="5.8" stroke-opacity="0.4" stroke-linecap="round" stroke-linejoin="round" filter="url(#blur2)"/>
<path d="M 135 472.5 L 450 476" fill="none" stroke="rgb(105,225,100)" stroke-width="2.8" stroke-opacity="1" stroke-linecap="round" stroke-linejoin="round" filter="url(#blur05)"/>
<path d="M 450 476 L 525 477.5" fill="none" stroke="rgb(50,200,240)" stroke-width="3" stroke-opacity="0.9" stroke-linecap="round" stroke-linejoin="round" filter="url(#blur05)"/>
<path d="M 300 330.5 L 470 336" fill="none" stroke="rgb(10,30,160)" stroke-width="2.5" stroke-opacity="0.9" stroke-linecap="round" stroke-linejoin="round" filter="url(#blur05)"/>
<path d="M 291.5 263 L 291.5 315 Q 290 319 283 322.5 L 277 325.5 Q 285 327.5 300 328.5 L 380 332.5" fill="none" stroke="rgb(40,190,255)" stroke-width="7" stroke-opacity="0.4" stroke-linecap="round" stroke-linejoin="round" filter="url(#blur2)"/>
<path d="M 291.5 263 L 291.5 315 Q 290 319 283 322.5 L 277 325.5 Q 285 327.5 300 328.5 L 380 332.5" fill="none" stroke="rgb(50,226,240)" stroke-width="4" stroke-opacity="1" stroke-linecap="round" stroke-linejoin="round" filter="url(#blur05)"/>
<path d="M 380 332.5 L 470 336" fill="none" stroke="rgb(40,170,240)" stroke-width="2.2" stroke-opacity="0.8" stroke-linecap="round" stroke-linejoin="round" filter="url(#blur05)"/>
<path d="M 365.5 323.5 Q 372 327.5 390 329.5 L 440 333.5 L 480 336" fill="none" stroke="rgb(60,220,140)" stroke-width="10.6" stroke-opacity="0.6" stroke-linecap="round" stroke-linejoin="round" filter="url(#blur2)"/>
<path d="M 365.5 323.5 Q 372 327.5 390 329.5 L 440 333.5 L 480 336" fill="none" stroke="rgb(175,230,60)" stroke-width="4.6" stroke-opacity="1" stroke-linecap="round" stroke-linejoin="round" filter="url(#blur05)"/>
<path d="M 378.5 262.5 L 378.5 312 Q 378 317 372 320 L 365.5 323.5" fill="none" stroke="rgb(60,212,165)" stroke-width="22" stroke-opacity="0.75" stroke-linecap="butt" stroke-linejoin="round" filter="url(#blur3)"/>
<path d="M 378.5 262.5 L 378.5 312 Q 378 317 372 320 L 365.5 323.5" fill="none" stroke="rgb(120,225,90)" stroke-width="12" stroke-opacity="0.8" stroke-linecap="butt" stroke-linejoin="round" filter="url(#blur1)"/>
<path d="M 378.5 262.5 L 378.5 312 Q 378 317 372 320 L 365.5 323.5" fill="none" stroke="rgb(220,225,40)" stroke-width="8.5" stroke-opacity="1" stroke-linecap="butt" stroke-linejoin="round" filter="url(#blur1)"/>
<path d="M 378.5 262.5 L 378.5 312 Q 378 317 372 320 L 365.5 323.5" fill="none" stroke="rgb(240,128,20)" stroke-width="4.2" stroke-opacity="1" stroke-linecap="butt" stroke-linejoin="round" filter="url(#blur05)"/>
<path d="M 480 336 L 565 337.5" fill="none" stroke="rgb(60,210,240)" stroke-width="2.6" stroke-opacity="0.9" stroke-linecap="round" stroke-linejoin="round" filter="url(#blur05)"/>
<path d="M 465.5 264 L 465.5 312 Q 465 317 459 320 L 452 324.5 Q 463 327.5 478 329 L 528 333.5 L 565 337" fill="none" stroke="rgb(40,190,255)" stroke-width="7" stroke-opacity="0.4" stroke-linecap="round" stroke-linejoin="round" filter="url(#blur2)"/>
<path d="M 465.5 264 L 465.5 312 Q 465 317 459 320 L 452 324.5 Q 463 327.5 478 329 L 528 333.5 L 565 337" fill="none" stroke="rgb(50,226,240)" stroke-width="4" stroke-opacity="1" stroke-linecap="round" stroke-linejoin="round" filter="url(#blur05)"/>
<path d="M 204 338.5 L 204 380 Q 203.5 384 200 387 L 198.5 389.5 L 212.5 394.4 L 231 400.6" fill="none" stroke="rgb(40,190,255)" stroke-width="7" stroke-opacity="0.4" stroke-linecap="round" stroke-linejoin="round" filter="url(#blur2)"/>
<path d="M 204 338.5 L 204 380 Q 203.5 384 200 387 L 198.5 389.5 L 212.5 394.4 L 231 400.6" fill="none" stroke="rgb(50,226,240)" stroke-width="4" stroke-opacity="1" stroke-linecap="round" stroke-linejoin="round" filter="url(#blur05)"/>
<path d="M 284.4 388.75 L 300 395 L 319.5 401" fill="none" stroke="rgb(60,220,140)" stroke-width="10.6" stroke-opacity="0.6" stroke-linecap="round" stroke-linejoin="round" filter="url(#blur2)"/>
<path d="M 284.4 388.75 L 300 395 L 319.5 401" fill="none" stroke="rgb(175,230,60)" stroke-width="4.6" stroke-opacity="1" stroke-linecap="round" stroke-linejoin="round" filter="url(#blur05)"/>
<path d="M 284.4 388.75 L 300 395 L 310 398" fill="none" stroke="rgb(235,150,25)" stroke-width="3" stroke-opacity="1" stroke-linecap="round" stroke-linejoin="round" filter="url(#blur05)"/>
<path d="M 291.6 337.5 L 291.6 380 Q 291 384 287 386.5 L 284.4 388.75" fill="none" stroke="rgb(60,212,165)" stroke-width="22" stroke-opacity="0.75" stroke-linecap="butt" stroke-linejoin="round" filter="url(#blur3)"/>
<path d="M 291.6 337.5 L 291.6 380 Q 291 384 287 386.5 L 284.4 388.75" fill="none" stroke="rgb(120,225,90)" stroke-width="12" stroke-opacity="0.8" stroke-linecap="butt" stroke-linejoin="round" filter="url(#blur1)"/>
<path d="M 291.6 337.5 L 291.6 380 Q 291 384 287 386.5 L 284.4 388.75" fill="none" stroke="rgb(220,225,40)" stroke-width="8.5" stroke-opacity="1" stroke-linecap="butt" stroke-linejoin="round" filter="url(#blur1)"/>
<path d="M 291.6 337.5 L 291.6 380 Q 291 384 287 386.5 L 284.4 388.75" fill="none" stroke="rgb(240,128,20)" stroke-width="4.2" stroke-opacity="1" stroke-linecap="butt" stroke-linejoin="round" filter="url(#blur05)"/>
<path d="M 378 340 L 378 386 Q 377 389 374 390.5 L 387.5 396 L 408.75 401 Q 400 404 387.5 405 L 337.5 406 L 300 407.5" fill="none" stroke="rgb(40,190,255)" stroke-width="7" stroke-opacity="0.4" stroke-linecap="round" stroke-linejoin="round" filter="url(#blur2)"/>
<path d="M 378 340 L 378 386 Q 377 389 374 390.5 L 387.5 396 L 408.75 401 Q 400 404 387.5 405 L 337.5 406 L 300 407.5" fill="none" stroke="rgb(50,226,240)" stroke-width="4" stroke-opacity="1" stroke-linecap="round" stroke-linejoin="round" filter="url(#blur05)"/>
<path d="M 117 409 L 117 445 L 117.5 447.5 L 130 457.5 Q 120 460 112.5 461 L 87.5 465 L 54 468.75 Q 60 472 75 472 L 135 471" fill="none" stroke="rgb(40,190,255)" stroke-width="7" stroke-opacity="0.4" stroke-linecap="round" stroke-linejoin="round" filter="url(#blur2)"/>
<path d="M 117 409 L 117 445 L 117.5 447.5 L 130 457.5 Q 120 460 112.5 461 L 87.5 465 L 54 468.75 Q 60 472 75 472 L 135 471" fill="none" stroke="rgb(50,226,240)" stroke-width="4" stroke-opacity="1" stroke-linecap="round" stroke-linejoin="round" filter="url(#blur05)"/>
<path d="M 125 471 L 150 470" fill="none" stroke="rgb(200,230,50)" stroke-width="3.5" stroke-opacity="1" stroke-linecap="round" stroke-linejoin="round" filter="url(#blur05)"/>
<path d="M 211.25 457.5 L 187.5 462.5 L 150 468" fill="none" stroke="rgb(60,220,140)" stroke-width="10.6" stroke-opacity="0.6" stroke-linecap="round" stroke-linejoin="round" filter="url(#blur2)"/>
<path d="M 211.25 457.5 L 187.5 462.5 L 150 468" fill="none" stroke="rgb(175,230,60)" stroke-width="4.6" stroke-opacity="1" stroke-linecap="round" stroke-linejoin="round" filter="url(#blur05)"/>
<path d="M 204 407 L 204 445 Q 204.5 450 208 454 L 211.25 457.5" fill="none" stroke="rgb(60,212,165)" stroke-width="22" stroke-opacity="0.75" stroke-linecap="butt" stroke-linejoin="round" filter="url(#blur3)"/>
<path d="M 204 407 L 204 445 Q 204.5 450 208 454 L 211.25 457.5" fill="none" stroke="rgb(120,225,90)" stroke-width="12" stroke-opacity="0.8" stroke-linecap="butt" stroke-linejoin="round" filter="url(#blur1)"/>
<path d="M 204 407 L 204 445 Q 204.5 450 208 454 L 211.25 457.5" fill="none" stroke="rgb(220,225,40)" stroke-width="8.5" stroke-opacity="1" stroke-linecap="butt" stroke-linejoin="round" filter="url(#blur1)"/>
<path d="M 204 407 L 204 445 Q 204.5 450 208 454 L 211.25 457.5" fill="none" stroke="rgb(240,128,20)" stroke-width="4.2" stroke-opacity="1" stroke-linecap="butt" stroke-linejoin="round" filter="url(#blur05)"/>
<path d="M 292 408 L 292 453 L 297.5 456 L 292 459 Q 280 463 275 464 L 240 467.5" fill="none" stroke="rgb(40,190,255)" stroke-width="7" stroke-opacity="0.4" stroke-linecap="round" stroke-linejoin="round" filter="url(#blur2)"/>
<path d="M 292 408 L 292 453 L 297.5 456 L 292 459 Q 280 463 275 464 L 240 467.5" fill="none" stroke="rgb(50,226,240)" stroke-width="4" stroke-opacity="1" stroke-linecap="round" stroke-linejoin="round" filter="url(#blur05)"/>
<path d="M 292 459 L 292 477" fill="none" stroke="rgb(40,190,255)" stroke-width="7" stroke-opacity="0.4" stroke-linecap="round" stroke-linejoin="round" filter="url(#blur2)"/>
<path d="M 292 459 L 292 477" fill="none" stroke="rgb(50,226,240)" stroke-width="4" stroke-opacity="1" stroke-linecap="round" stroke-linejoin="round" filter="url(#blur05)"/></g>
<text x="515.6" y="59.8" font-size="8.0" fill="#e8e8f8" font-weight="400" text-anchor="start" >77.6% Overlap</text>
<text x="21.4" y="347.2" font-size="7.9" fill="#e8e8f8" font-weight="400" text-anchor="start" >2.390 GHz</text>
<text x="566" y="347.2" font-size="7.9" fill="#e8e8f8" font-weight="400" text-anchor="end" >2.410 GHz</text>
<path d="M556.5 302 L556.5 314 L559.3 311.3 L561.5 316 L563.3 315.2 L561.2 310.6 L565 310.3 Z" fill="#f0f0f0" stroke="#202020" stroke-width="0.6"/>
<rect x="2.3" y="351" width="581" height="311" fill="#000"/>
<rect x="2.3" y="350" width="581" height="1.2" fill="#c8c8e0"/>
<rect x="0" y="662" width="585" height="2" fill="#a8a8a8"/>
<rect x="587" y="22" width="580" height="16" fill="#3b3b3b"/>
<text x="595" y="34.6" font-size="10.6" fill="#e6e6e6" font-weight="400" text-anchor="start" >Waveform View</text>
<rect x="587" y="38" width="580" height="624" fill="#000"/>
<rect x="584.5" y="20" width="584.5" height="2.2" fill="#f2f2f2"/>
<rect x="582.4" y="20" width="2.2" height="644" fill="#9c9cb0"/>
<rect x="584.5" y="20" width="2.5" height="644" fill="#eeeeee"/>
<rect x="1166.8" y="20" width="2.4" height="644" fill="#f2f2f2"/>
<rect x="584.5" y="662" width="584.5" height="2.2" fill="#f2f2f2"/>
<line x1="60.3" y1="351" x2="60.3" y2="662" stroke="#333333" stroke-width="1.3" stroke-dasharray="1.5 4.7"/>
<line x1="118.3" y1="351" x2="118.3" y2="662" stroke="#333333" stroke-width="1.3" stroke-dasharray="1.5 4.7"/>
<line x1="176.3" y1="351" x2="176.3" y2="662" stroke="#333333" stroke-width="1.3" stroke-dasharray="1.5 4.7"/>
<line x1="234.3" y1="351" x2="234.3" y2="662" stroke="#333333" stroke-width="1.3" stroke-dasharray="1.5 4.7"/>
<line x1="292.3" y1="351" x2="292.3" y2="662" stroke="#333333" stroke-width="1.3" stroke-dasharray="1.5 4.7"/>
<line x1="350.3" y1="351" x2="350.3" y2="662" stroke="#333333" stroke-width="1.3" stroke-dasharray="1.5 4.7"/>
<line x1="408.3" y1="351" x2="408.3" y2="662" stroke="#333333" stroke-width="1.3" stroke-dasharray="1.5 4.7"/>
<line x1="466.3" y1="351" x2="466.3" y2="662" stroke="#333333" stroke-width="1.3" stroke-dasharray="1.5 4.7"/>
<line x1="524.3" y1="351" x2="524.3" y2="662" stroke="#333333" stroke-width="1.3" stroke-dasharray="1.5 4.7"/>
<line x1="2.3" y1="382.1" x2="583" y2="382.1" stroke="#262626" stroke-width="1.3" stroke-dasharray="1.5 4.3"/>
<line x1="2.3" y1="413.20000000000005" x2="583" y2="413.20000000000005" stroke="#262626" stroke-width="1.3" stroke-dasharray="1.5 4.3"/>
<line x1="2.3" y1="444.3" x2="583" y2="444.3" stroke="#262626" stroke-width="1.3" stroke-dasharray="1.5 4.3"/>
<line x1="2.3" y1="475.40000000000003" x2="583" y2="475.40000000000003" stroke="#262626" stroke-width="1.3" stroke-dasharray="1.5 4.3"/>
<line x1="2.3" y1="506.5" x2="583" y2="506.5" stroke="#262626" stroke-width="1.3" stroke-dasharray="1.5 4.3"/>
<line x1="2.3" y1="537.6" x2="583" y2="537.6" stroke="#262626" stroke-width="1.3" stroke-dasharray="1.5 4.3"/>
<line x1="2.3" y1="568.7" x2="583" y2="568.7" stroke="#262626" stroke-width="1.3" stroke-dasharray="1.5 4.3"/>
<line x1="2.3" y1="599.8000000000001" x2="583" y2="599.8000000000001" stroke="#262626" stroke-width="1.3" stroke-dasharray="1.5 4.3"/>
<line x1="2.3" y1="630.9000000000001" x2="583" y2="630.9000000000001" stroke="#262626" stroke-width="1.3" stroke-dasharray="1.5 4.3"/>
<text x="580.5" y="385.8" font-size="8.3" fill="#dcdcd0" font-weight="400" text-anchor="end" >-20 dBm</text>
<text x="580.5" y="416.9" font-size="8.3" fill="#dcdcd0" font-weight="400" text-anchor="end" >-30 dBm</text>
<text x="580.5" y="448.0" font-size="8.3" fill="#dcdcd0" font-weight="400" text-anchor="end" >-40 dBm</text>
<text x="580.5" y="479.1" font-size="8.3" fill="#dcdcd0" font-weight="400" text-anchor="end" >-50 dBm</text>
<text x="580.5" y="510.2" font-size="8.3" fill="#dcdcd0" font-weight="400" text-anchor="end" >-60 dBm</text>
<text x="580.5" y="541.3" font-size="8.3" fill="#dcdcd0" font-weight="400" text-anchor="end" >-70 dBm</text>
<text x="580.5" y="572.4" font-size="8.3" fill="#dcdcd0" font-weight="400" text-anchor="end" >-80 dBm</text>
<text x="580.5" y="603.5" font-size="8.3" fill="#dcdcd0" font-weight="400" text-anchor="end" >-90 dBm</text>
<text x="580.5" y="634.6" font-size="8.3" fill="#dcdcd0" font-weight="400" text-anchor="end" >-100 dBm</text>
<text x="21.4" y="657.5" font-size="7.9" fill="#e8e8e8" font-weight="400" text-anchor="start" >2.390 GHz</text>
<text x="566" y="657.5" font-size="7.9" fill="#e8e8e8" font-weight="400" text-anchor="end" >2.410 GHz</text>
<path d="M2.50 618.00 C2.73 615.33 3.25 603.60 3.90 602.00 C4.55 600.40 5.55 608.62 6.40 608.40 C7.25 608.18 8.13 600.27 9.00 600.70 C9.87 601.13 10.75 610.57 11.60 611.00 C12.45 611.43 13.25 602.47 14.10 603.30 C14.95 604.13 15.83 607.43 16.70 616.00 C17.57 624.57 18.45 652.97 19.30 654.70 C20.15 656.43 20.10 639.02 21.80 626.40 C23.50 613.78 27.13 578.57 29.50 579.00 C31.87 579.43 34.28 622.17 36.00 629.00 C37.72 635.83 38.10 624.72 39.80 620.00 C41.50 615.28 44.27 595.37 46.20 600.70 C48.13 606.03 49.90 649.22 51.40 652.00 C52.90 654.78 54.13 621.23 55.20 617.40 C56.27 613.57 56.73 632.00 57.80 629.00 C58.87 626.00 60.32 601.57 61.60 599.40 C62.88 597.23 64.20 617.07 65.50 616.00 C66.80 614.93 68.12 590.42 69.40 593.00 C70.68 595.58 71.93 630.67 73.20 631.50 C74.47 632.33 75.50 606.33 77.00 598.00 C78.50 589.67 80.27 580.00 82.20 581.50 C84.13 583.00 86.47 602.92 88.60 607.00 C90.73 611.08 92.85 598.50 95.00 606.00 C97.15 613.50 100.02 650.87 101.50 652.00 C102.98 653.13 103.18 617.38 103.90 612.80 C104.62 608.22 104.99 628.38 105.80 624.50 C106.61 620.62 107.93 592.75 108.75 589.50 C109.57 586.25 109.41 615.70 110.70 605.00 C111.99 594.30 114.88 523.35 116.50 525.30 C118.12 527.25 119.10 608.92 120.40 616.70 C121.70 624.48 123.00 574.28 124.30 572.00 C125.60 569.72 126.75 601.55 128.20 603.00 C129.65 604.45 131.38 575.82 133.00 580.70 C134.62 585.58 136.58 630.83 137.90 632.30 C139.22 633.77 140.08 592.42 140.90 589.50 C141.72 586.58 141.83 619.33 142.80 614.80 C143.77 610.27 145.40 573.48 146.70 562.30 C148.00 551.12 149.63 545.75 150.60 547.70 C151.57 549.65 151.20 578.87 152.50 574.00 C153.80 569.13 156.62 517.53 158.40 518.50 C160.18 519.47 161.75 580.13 163.20 579.80 C164.65 579.47 165.63 522.30 167.10 516.50 C168.57 510.70 170.47 542.75 172.00 545.00 C173.53 547.25 174.92 530.93 176.25 530.00 C177.58 529.07 178.51 529.17 180.00 539.40 C181.49 549.63 183.87 592.47 185.20 591.40 C186.53 590.33 186.57 537.82 188.00 533.00 C189.43 528.18 192.27 563.42 193.75 562.50 C195.23 561.58 196.18 539.58 196.90 527.50 C197.62 515.42 197.63 507.75 198.10 490.00 C198.57 472.25 198.77 441.42 199.70 421.00 C200.63 400.58 202.45 367.50 203.70 367.50 C204.95 367.50 206.18 398.92 207.20 421.00 C208.22 443.08 208.82 477.04 209.80 500.00 C210.78 522.96 211.61 553.42 213.10 558.75 C214.59 564.08 217.20 527.17 218.75 532.00 C220.30 536.83 221.57 587.03 222.40 587.70 C223.23 588.37 222.28 546.66 223.75 536.00 C225.22 525.34 229.47 522.46 231.25 523.75 C233.03 525.04 233.04 545.62 234.40 543.75 C235.76 541.88 237.82 511.04 239.40 512.50 C240.98 513.96 242.34 551.83 243.90 552.50 C245.46 553.17 247.07 511.63 248.75 516.50 C250.43 521.37 252.71 577.32 254.00 581.70 C255.29 586.08 255.58 545.72 256.50 542.80 C257.42 539.88 258.37 557.38 259.50 564.20 C260.63 571.02 262.33 582.07 263.30 583.70 C264.27 585.33 264.32 570.45 265.30 574.00 C266.28 577.55 267.75 606.63 269.20 605.00 C270.65 603.37 272.38 566.13 274.00 564.20 C275.62 562.27 277.60 592.43 278.90 593.40 C280.20 594.37 280.50 566.77 281.80 570.00 C283.10 573.23 285.23 621.38 286.70 612.80 C288.17 604.22 288.98 517.52 290.60 518.50 C292.22 519.48 295.10 607.20 296.40 618.70 C297.70 630.20 297.42 591.72 298.40 587.50 C299.38 583.28 300.57 581.73 302.30 593.40 C304.03 605.07 307.05 651.82 308.75 657.50 C310.45 663.18 311.41 639.25 312.50 627.50 C313.59 615.75 314.22 586.68 315.30 587.00 C316.38 587.32 317.75 631.73 319.00 629.40 C320.25 627.07 321.53 577.07 322.80 573.00 C324.07 568.93 325.50 602.17 326.60 605.00 C327.70 607.83 328.00 586.25 329.40 590.00 C330.80 593.75 333.13 625.93 335.00 627.50 C336.87 629.07 339.03 600.98 340.60 599.40 C342.17 597.82 343.00 619.10 344.40 618.00 C345.80 616.90 347.28 587.47 349.00 592.80 C350.72 598.13 352.82 647.34 354.70 650.00 C356.58 652.66 358.58 613.75 360.30 608.75 C362.02 603.75 363.59 615.96 365.00 620.00 C366.41 624.04 367.50 633.33 368.75 633.00 C370.00 632.67 371.09 625.83 372.50 618.00 C373.91 610.17 375.63 584.10 377.20 586.00 C378.77 587.90 380.65 627.17 381.90 629.40 C383.15 631.63 383.62 596.63 384.70 599.40 C385.78 602.17 387.15 647.57 388.40 646.00 C389.65 644.43 390.32 593.08 392.20 590.00 C394.08 586.92 397.67 625.00 399.70 627.50 C401.73 630.00 402.85 609.08 404.40 605.00 C405.95 600.92 407.44 601.43 409.00 603.00 C410.56 604.57 412.33 607.82 413.75 614.40 C415.17 620.98 416.09 643.13 417.50 642.50 C418.91 641.87 420.63 613.10 422.20 610.60 C423.77 608.10 425.27 626.60 426.90 627.50 C428.53 628.40 430.72 615.03 432.00 616.00 C433.28 616.97 433.72 633.05 434.60 633.30 C435.48 633.55 436.53 617.93 437.30 617.50 C438.07 617.07 438.43 631.58 439.20 630.70 C439.97 629.82 440.90 609.15 441.90 612.20 C442.90 615.25 444.22 647.70 445.20 649.00 C446.18 650.30 447.03 618.00 447.80 620.00 C448.57 622.00 448.82 665.05 449.80 661.00 C450.78 656.95 452.50 606.37 453.70 595.70 C454.90 585.03 455.78 594.25 457.00 597.00 C458.22 599.75 459.78 610.77 461.00 612.20 C462.22 613.63 463.08 607.03 464.30 605.60 C465.52 604.17 466.65 595.90 468.30 603.60 C469.95 611.30 472.88 649.70 474.20 651.80 C475.52 653.90 475.32 619.72 476.20 616.20 C477.08 612.68 478.62 628.50 479.50 630.70 C480.38 632.90 480.08 625.02 481.50 629.40 C482.92 633.78 486.58 653.73 488.00 657.00 C489.42 660.27 488.57 658.12 490.00 649.00 C491.43 639.88 494.73 600.97 496.60 602.30 C498.47 603.63 499.98 651.38 501.20 657.00 C502.42 662.62 503.02 637.33 503.90 636.00 C504.78 634.67 505.07 655.50 506.50 649.00 C507.93 642.50 510.30 597.85 512.50 597.00 C514.70 596.15 517.95 640.70 519.70 643.90 C521.45 647.10 521.68 616.20 523.00 616.20 C524.32 616.20 526.07 643.68 527.60 643.90 C529.13 644.12 530.55 616.65 532.20 617.50 C533.85 618.35 535.62 647.02 537.50 649.00 C539.38 650.98 541.63 629.40 543.50 629.40 C545.37 629.40 547.07 651.65 548.70 649.00 C550.33 646.35 551.98 614.35 553.30 613.50 C554.62 612.65 555.15 642.82 556.60 643.90 C558.05 644.98 560.45 624.83 562.00 620.00 C563.55 615.17 564.48 616.63 565.90 614.90 C567.32 613.17 569.18 603.02 570.50 609.60 C571.82 616.18 572.48 650.67 573.80 654.40 C575.12 658.13 576.97 631.12 578.40 632.00 C579.83 632.88 581.73 655.08 582.40 659.70" fill="none" stroke="#cfcfa8" stroke-width="1.0" stroke-linejoin="round" />
<path d="M197 351.5 L211.5 351.5 L204 367.5 Z" fill="#e8283c"/>
<text x="204.2" y="360.5" font-size="7" fill="#ffd0d0" font-weight="700" text-anchor="middle" >R</text>
<text x="206.7" y="370.5" font-size="7.9" fill="#c8283a" font-weight="400" text-anchor="start" >2.39695 GHz</text>
<text x="206.7" y="380.5" font-size="7.9" fill="#c8283a" font-weight="400" text-anchor="start" >-14.2 dBm</text>
<path d="M4 351.5 L26.7 351.5 L19 359.5 L4 359.5 Z" fill="#111" stroke="#e8e050" stroke-width="1.2"/>
<text x="10.5" y="358.5" font-size="7" fill="#c8c090" font-weight="400" text-anchor="middle" >C1</text>
<rect x="3.9" y="359" width="15.1" height="10" fill="#f0e840"/>
<text x="11.5" y="367.6" font-size="8.5" fill="#222" font-weight="700" text-anchor="middle" >N</text>
<line x1="645" y1="38" x2="645" y2="350" stroke="#333333" stroke-width="1.3" stroke-dasharray="1.5 4.7"/>
<line x1="703" y1="38" x2="703" y2="350" stroke="#333333" stroke-width="1.3" stroke-dasharray="1.5 4.7"/>
<line x1="761" y1="38" x2="761" y2="350" stroke="#333333" stroke-width="1.3" stroke-dasharray="1.5 4.7"/>
<line x1="819" y1="38" x2="819" y2="350" stroke="#333333" stroke-width="1.3" stroke-dasharray="1.5 4.7"/>
<line x1="877" y1="38" x2="877" y2="350" stroke="#333333" stroke-width="1.3" stroke-dasharray="1.5 4.7"/>
<line x1="935" y1="38" x2="935" y2="350" stroke="#333333" stroke-width="1.3" stroke-dasharray="1.5 4.7"/>
<line x1="993" y1="38" x2="993" y2="350" stroke="#333333" stroke-width="1.3" stroke-dasharray="1.5 4.7"/>
<line x1="1051" y1="38" x2="1051" y2="350" stroke="#333333" stroke-width="1.3" stroke-dasharray="1.5 4.7"/>
<line x1="1109" y1="38" x2="1109" y2="350" stroke="#333333" stroke-width="1.3" stroke-dasharray="1.5 4.7"/>
<line x1="587" y1="69.2" x2="1167" y2="69.2" stroke="#262626" stroke-width="1.3" stroke-dasharray="1.5 4.3"/>
<line x1="587" y1="100.4" x2="1167" y2="100.4" stroke="#262626" stroke-width="1.3" stroke-dasharray="1.5 4.3"/>
<line x1="587" y1="131.6" x2="1167" y2="131.6" stroke="#262626" stroke-width="1.3" stroke-dasharray="1.5 4.3"/>
<line x1="587" y1="162.8" x2="1167" y2="162.8" stroke="#262626" stroke-width="1.3" stroke-dasharray="1.5 4.3"/>
<line x1="587" y1="194.0" x2="1167" y2="194.0" stroke="#262626" stroke-width="1.3" stroke-dasharray="1.5 4.3"/>
<line x1="587" y1="225.2" x2="1167" y2="225.2" stroke="#262626" stroke-width="1.3" stroke-dasharray="1.5 4.3"/>
<line x1="587" y1="256.4" x2="1167" y2="256.4" stroke="#262626" stroke-width="1.3" stroke-dasharray="1.5 4.3"/>
<line x1="587" y1="287.6" x2="1167" y2="287.6" stroke="#262626" stroke-width="1.3" stroke-dasharray="1.5 4.3"/>
<line x1="587" y1="318.8" x2="1167" y2="318.8" stroke="#262626" stroke-width="1.3" stroke-dasharray="1.5 4.3"/>
<path d="M587.0 104.9 L588.5 104.1 L590.0 105.1 L591.5 105.5 L593.0 104.4 L594.5 104.0 L596.0 103.6 L597.5 104.9 L599.0 104.0 L600.5 105.3 L602.0 105.3 L603.5 104.2 L605.0 105.6 L606.5 103.7 L608.0 105.4 L609.5 105.3 L611.0 104.7 L612.5 104.3 L614.0 105.3 L615.5 105.4 L617.0 105.1 L618.5 104.0 L620.0 103.7 L621.5 103.7 L623.0 104.9 L624.5 104.3 L626.0 104.1 L627.5 104.9 L629.0 103.9 L630.5 103.9 L632.0 105.7 L633.5 104.7 L635.0 105.4 L636.5 104.0 L638.0 104.2 L639.5 104.0 L641.0 105.4 L642.5 104.9 L644.0 105.5 L645.5 104.1 L647.0 104.7 L648.5 104.8 L650.0 104.4 L651.5 105.7 L653.0 103.7 L654.5 103.7 L656.0 105.2 L657.5 103.6 L659.0 105.7 L660.5 105.6 L662.0 103.5 L663.5 105.0 L665.0 104.1 L666.5 103.7 L668.0 104.5 L669.5 105.4 L671.0 104.6 L672.5 105.5 L674.0 104.2 L675.5 104.8 L677.0 105.2 L678.5 105.2 L680.0 103.5 L681.5 103.5 L683.0 105.4 L684.5 104.2 L686.0 105.4 L687.5 103.7 L689.0 103.7 L690.5 105.2 L692.0 104.5 L693.5 104.1 L695.0 104.4 L696.5 104.7 L698.0 103.9 L699.5 105.7 L701.0 104.5 L702.5 103.8 L704.0 104.2 L705.5 104.0 L707.0 103.7 L708.5 104.0 L710.0 105.4 L711.5 104.0 L713.0 104.0 L714.5 105.6 L716.0 104.5 L717.5 105.3 L719.0 103.7 L720.5 104.4 L722.0 105.1 L723.5 105.7 L725.0 104.4 L726.5 105.4 L728.0 103.9 L729.5 104.4 L731.0 104.0 L732.5 104.5 L734.0 104.7 L735.5 105.7 L737.0 105.6 L738.5 105.4 L740.0 104.6 L741.5 104.4 L743.0 104.3 L744.5 104.1 L746.0 104.5 L747.5 105.6 L749.0 104.7 L750.5 103.8 L752.0 105.6 L753.5 104.7 L755.0 103.6 L756.5 104.6 L758.0 103.8 L759.5 103.7 L761.0 104.8 L762.5 104.0 L764.0 105.5 L765.5 104.8 L767.0 104.4 L768.5 104.7 L770.0 103.9 L771.5 104.0 L773.0 105.0 L774.5 104.2 L776.0 103.7 L777.5 105.7 L779.0 103.7 L780.5 104.1 L782.0 105.4 L783.5 104.3 L785.0 105.3 L786.5 104.8 L788.0 104.9 L789.5 105.3 L791.0 105.0 L792.5 103.8 L794.0 103.7 L795.5 104.1 L797.0 105.1 L798.5 104.9 L800.0 104.6 L801.5 105.4 L803.0 104.4 L804.5 103.5 L806.0 104.9 L807.5 105.1 L809.0 104.4 L810.5 103.7 L812.0 105.5 L813.5 105.3 L815.0 103.8 L816.5 104.2 L818.0 105.3 L819.5 105.5 L821.0 104.0 L822.5 105.2 L824.0 104.4 L825.5 103.8 L827.0 105.4 L828.5 105.3 L830.0 103.6 L831.5 104.2 L833.0 105.3 L834.5 105.3 L836.0 105.2 L837.5 105.4 L839.0 104.0 L840.5 104.5 L842.0 105.2 L843.5 103.6 L845.0 104.2 L846.5 105.6 L848.0 104.9 L849.5 105.7 L851.0 105.6 L852.5 105.6 L854.0 105.6 L855.5 103.7 L857.0 105.1 L858.5 104.8 L860.0 104.3 L861.5 104.1 L863.0 103.5 L864.5 104.7 L866.0 105.1 L867.5 104.3 L869.0 105.0 L870.5 104.2 L872.0 105.1 L873.5 104.2 L875.0 104.4 L876.5 103.8 L878.0 105.6 L879.5 105.5 L881.0 104.2 L882.5 103.5 L884.0 104.4 L885.5 104.9 L887.0 104.5 L888.5 104.5 L890.0 105.3 L891.5 103.7 L893.0 104.9 L894.5 105.3 L896.0 105.0 L897.5 103.9 L899.0 104.0 L900.5 105.4 L902.0 104.4 L903.5 103.9 L905.0 104.6 L906.5 104.9 L908.0 105.2 L909.5 103.7 L911.0 103.9 L912.5 104.6 L914.0 104.0 L915.5 104.5 L917.0 105.0 L918.5 104.8 L920.0 105.5 L921.5 105.1 L923.0 105.3 L924.5 105.5 L926.0 104.5 L927.5 104.0 L929.0 105.2 L930.5 104.9 L932.0 103.7 L933.5 104.1 L935.0 104.7 L936.5 104.0 L938.0 105.1 L939.5 104.4 L941.0 104.4 L942.5 104.4 L944.0 104.8 L945.5 105.4 L947.0 104.3 L948.5 104.3 L950.0 105.4 L951.5 104.4 L953.0 104.7 L954.5 104.0 L956.0 104.5 L957.5 104.2 L959.0 104.4 L960.5 104.5 L962.0 104.9 L963.5 104.4 L965.0 103.6 L966.5 103.8 L968.0 103.6 L969.5 104.0 L971.0 105.2 L972.5 105.2 L974.0 104.1 L975.5 103.5 L977.0 105.7 L978.5 104.9 L980.0 104.9 L981.5 105.6 L983.0 103.5 L984.5 103.8 L986.0 104.7 L987.5 105.0 L989.0 103.9 L990.5 105.1 L992.0 105.3 L993.5 103.7 L995.0 104.2 L996.5 105.6 L998.0 105.1 L999.5 105.0 L1001.0 103.7 L1002.5 105.4 L1004.0 103.8 L1005.5 105.2 L1007.0 104.4 L1008.5 104.6 L1010.0 105.4 L1011.5 103.7 L1013.0 104.9 L1014.5 105.1 L1016.0 105.1 L1017.5 104.1 L1019.0 104.7 L1020.5 104.5 L1022.0 104.1 L1023.5 105.3 L1025.0 105.4 L1026.5 104.5 L1028.0 104.3 L1029.5 105.4 L1031.0 104.0 L1032.5 104.2 L1034.0 105.0 L1035.5 103.5 L1037.0 103.7 L1038.5 104.6 L1040.0 105.0 L1041.5 104.6 L1043.0 103.7 L1044.5 105.0 L1046.0 104.8 L1047.5 104.7 L1049.0 105.1 L1050.5 105.0 L1052.0 104.1 L1053.5 103.9 L1055.0 104.7 L1056.5 103.9 L1058.0 104.6 L1059.5 105.6 L1061.0 104.1 L1062.5 103.9 L1064.0 103.9 L1065.5 104.7 L1067.0 105.6 L1068.5 105.0 L1070.0 105.4 L1071.5 105.4 L1073.0 104.5 L1074.5 103.9 L1076.0 105.6 L1077.5 105.3 L1079.0 103.7 L1080.5 103.6 L1082.0 104.7 L1083.5 105.7 L1085.0 105.2 L1086.5 105.2 L1088.0 104.6 L1089.5 104.5 L1091.0 105.7 L1092.5 104.9 L1094.0 105.1 L1095.5 104.0 L1097.0 105.0 L1098.5 103.9 L1100.0 103.5 L1101.5 104.8 L1103.0 104.0 L1104.5 105.0 L1106.0 105.0 L1107.5 105.2 L1109.0 105.0 L1110.5 104.4 L1112.0 104.9 L1113.5 105.3 L1115.0 103.9 L1116.5 105.1 L1118.0 104.1 L1119.5 105.0 L1121.0 105.6 L1122.5 104.6 L1124.0 103.6 L1125.5 104.2 L1127.0 103.7 L1128.5 105.3 L1130.0 105.6 L1131.5 105.0 L1133.0 103.6 L1134.5 104.5 L1136.0 105.5 L1137.5 104.8 L1139.0 104.6 L1140.5 104.3 L1142.0 105.0 L1143.5 104.2 L1145.0 104.1 L1146.5 105.3 L1148.0 104.5 L1149.5 104.2 L1151.0 104.4 L1152.5 105.7 L1154.0 104.7 L1155.5 103.9 L1157.0 105.2 L1158.5 105.2 L1160.0 104.7 L1161.5 104.5 L1163.0 103.8 L1164.5 104.8 L1166.0 103.8 L1166.0 289.2 L1164.5 288.5 L1163.0 290.2 L1161.5 289.6 L1160.0 290.1 L1158.5 288.4 L1157.0 289.4 L1155.5 288.8 L1154.0 288.9 L1152.5 289.5 L1151.0 289.1 L1149.5 290.2 L1148.0 288.7 L1146.5 289.2 L1145.0 290.2 L1143.5 289.6 L1142.0 290.0 L1140.5 288.7 L1139.0 288.1 L1137.5 289.4 L1136.0 288.3 L1134.5 289.5 L1133.0 289.7 L1131.5 288.5 L1130.0 290.3 L1128.5 289.3 L1127.0 290.2 L1125.5 288.5 L1124.0 288.9 L1122.5 288.1 L1121.0 289.1 L1119.5 289.6 L1118.0 288.2 L1116.5 289.3 L1115.0 288.6 L1113.5 288.1 L1112.0 290.1 L1110.5 289.2 L1109.0 290.1 L1107.5 289.4 L1106.0 290.1 L1104.5 289.0 L1103.0 289.6 L1101.5 288.6 L1100.0 289.0 L1098.5 288.1 L1097.0 288.3 L1095.5 288.4 L1094.0 290.2 L1092.5 289.4 L1091.0 288.6 L1089.5 290.0 L1088.0 289.0 L1086.5 288.4 L1085.0 289.4 L1083.5 288.2 L1082.0 288.6 L1080.5 288.3 L1079.0 289.4 L1077.5 288.9 L1076.0 289.0 L1074.5 288.0 L1073.0 289.0 L1071.5 289.3 L1070.0 289.1 L1068.5 288.2 L1067.0 289.2 L1065.5 288.6 L1064.0 287.9 L1062.5 288.4 L1061.0 288.1 L1059.5 289.2 L1058.0 289.6 L1056.5 288.4 L1055.0 289.7 L1053.5 288.2 L1052.0 288.2 L1050.5 288.6 L1049.0 288.7 L1047.5 288.9 L1046.0 289.0 L1044.5 288.6 L1043.0 288.4 L1041.5 289.8 L1040.0 289.5 L1038.5 289.7 L1037.0 289.6 L1035.5 290.2 L1034.0 288.6 L1032.5 290.0 L1031.0 289.8 L1029.5 288.3 L1028.0 288.0 L1026.5 289.4 L1025.0 288.5 L1023.5 288.1 L1022.0 289.9 L1020.5 289.7 L1019.0 289.1 L1017.5 289.8 L1016.0 290.2 L1014.5 288.9 L1013.0 289.9 L1011.5 290.2 L1010.0 289.9 L1008.5 288.7 L1007.0 288.8 L1005.5 288.7 L1004.0 290.3 L1002.5 289.3 L1001.0 289.8 L999.5 289.4 L998.0 288.1 L996.5 288.9 L995.0 289.5 L993.5 288.0 L992.0 290.2 L990.5 288.2 L989.0 289.4 L987.5 289.7 L986.0 288.4 L984.5 289.5 L983.0 288.3 L981.5 288.4 L980.0 289.7 L978.5 289.8 L977.0 288.7 L975.5 289.2 L974.0 288.1 L972.5 289.9 L971.0 288.8 L969.5 288.7 L968.0 288.8 L966.5 289.0 L965.0 289.4 L963.5 289.3 L962.0 288.0 L960.5 288.2 L959.0 288.3 L957.5 289.5 L956.0 288.0 L954.5 288.4 L953.0 289.3 L951.5 289.7 L950.0 290.2 L948.5 289.7 L947.0 287.9 L945.5 289.7 L944.0 289.6 L942.5 290.1 L941.0 288.4 L939.5 289.2 L938.0 288.1 L936.5 289.6 L935.0 288.2 L933.5 288.7 L932.0 288.6 L930.5 288.6 L929.0 289.2 L927.5 289.4 L926.0 288.5 L924.5 289.7 L923.0 289.2 L921.5 289.1 L920.0 289.4 L918.5 290.2 L917.0 290.3 L915.5 289.8 L914.0 289.9 L912.5 288.0 L911.0 290.2 L909.5 288.9 L908.0 289.7 L906.5 287.9 L905.0 288.5 L903.5 289.6 L902.0 289.4 L900.5 288.1 L899.0 289.0 L897.5 288.0 L896.0 288.4 L894.5 289.7 L893.0 288.7 L891.5 289.1 L890.0 288.3 L888.5 290.1 L887.0 288.4 L885.5 289.0 L884.0 289.3 L882.5 288.6 L881.0 289.2 L879.5 289.4 L878.0 289.5 L876.5 288.9 L875.0 288.6 L873.5 288.9 L872.0 288.6 L870.5 289.9 L869.0 288.7 L867.5 288.1 L866.0 289.5 L864.5 289.6 L863.0 290.1 L861.5 289.6 L860.0 289.3 L858.5 289.1 L857.0 288.7 L855.5 288.9 L854.0 288.5 L852.5 288.3 L851.0 288.2 L849.5 289.2 L848.0 288.9 L846.5 288.6 L845.0 290.0 L843.5 288.4 L842.0 288.4 L840.5 288.6 L839.0 289.9 L837.5 290.0 L836.0 288.2 L834.5 288.5 L833.0 290.0 L831.5 290.1 L830.0 289.7 L828.5 290.0 L827.0 290.2 L825.5 290.1 L824.0 289.4 L822.5 290.0 L821.0 288.1 L819.5 288.4 L818.0 290.0 L816.5 290.1 L815.0 288.2 L813.5 289.3 L812.0 289.2 L810.5 290.0 L809.0 287.9 L807.5 289.2 L806.0 288.5 L804.5 289.8 L803.0 288.6 L801.5 288.1 L800.0 290.1 L798.5 288.5 L797.0 288.4 L795.5 289.4 L794.0 289.2 L792.5 288.2 L791.0 290.2 L789.5 288.6 L788.0 287.9 L786.5 290.3 L785.0 289.6 L783.5 288.3 L782.0 290.0 L780.5 290.1 L779.0 288.4 L777.5 290.3 L776.0 289.0 L774.5 289.7 L773.0 288.6 L771.5 288.8 L770.0 289.6 L768.5 290.1 L767.0 289.3 L765.5 289.4 L764.0 288.5 L762.5 288.2 L761.0 289.5 L759.5 288.3 L758.0 290.2 L756.5 289.9 L755.0 289.3 L753.5 289.7 L752.0 289.3 L750.5 288.6 L749.0 289.6 L747.5 290.3 L746.0 288.9 L744.5 289.8 L743.0 290.3 L741.5 288.0 L740.0 288.4 L738.5 288.3 L737.0 290.1 L735.5 289.9 L734.0 288.0 L732.5 290.0 L731.0 290.1 L729.5 288.6 L728.0 289.0 L726.5 288.5 L725.0 288.7 L723.5 288.1 L722.0 289.5 L720.5 289.0 L719.0 288.9 L717.5 288.4 L716.0 289.8 L714.5 289.3 L713.0 288.2 L711.5 289.5 L710.0 288.1 L708.5 290.1 L707.0 289.4 L705.5 288.4 L704.0 289.3 L702.5 288.4 L701.0 289.1 L699.5 289.5 L698.0 288.6 L696.5 289.7 L695.0 288.4 L693.5 290.0 L692.0 289.2 L690.5 288.2 L689.0 289.7 L687.5 289.1 L686.0 290.2 L684.5 288.0 L683.0 289.9 L681.5 290.1 L680.0 288.7 L678.5 289.2 L677.0 289.2 L675.5 288.3 L674.0 289.4 L672.5 290.0 L671.0 288.3 L669.5 288.5 L668.0 290.2 L666.5 288.9 L665.0 289.4 L663.5 289.2 L662.0 289.6 L660.5 290.0 L659.0 289.2 L657.5 288.8 L656.0 288.9 L654.5 289.4 L653.0 288.0 L651.5 289.1 L650.0 288.4 L648.5 290.1 L647.0 288.5 L645.5 288.5 L644.0 289.0 L642.5 288.8 L641.0 288.7 L639.5 290.2 L638.0 288.5 L636.5 288.0 L635.0 289.8 L633.5 289.5 L632.0 289.4 L630.5 288.8 L629.0 289.6 L627.5 289.4 L626.0 290.1 L624.5 288.4 L623.0 288.8 L621.5 288.6 L620.0 288.5 L618.5 288.6 L617.0 288.0 L615.5 289.3 L614.0 289.4 L612.5 289.2 L611.0 290.2 L609.5 289.7 L608.0 289.3 L606.5 288.1 L605.0 288.7 L603.5 288.3 L602.0 289.6 L600.5 287.9 L599.0 289.3 L597.5 289.2 L596.0 288.4 L594.5 289.1 L593.0 288.0 L591.5 288.1 L590.0 289.5 L588.5 288.4 L587.0 288.0 Z" fill="#fdf12f"/>
<rect x="587" y="105" width="580" height="3" fill="#f8f0a0" opacity="0.35"/>
<line x1="616" y1="195" x2="1167" y2="195" stroke="#e0d440" stroke-width="1" stroke-dasharray="3 3"/>
<text x="593.6" y="197.6" font-size="9.2" fill="#2a2a10" font-weight="400" text-anchor="start" >C 1</text>
<line x1="877.5" y1="44" x2="877.5" y2="662" stroke="#c8c8c8" stroke-width="1.1" stroke-dasharray="3 3"/>
<rect x="587" y="349.3" width="580" height="1.3" fill="#c0c0c0"/>
<text x="645" y="346.8" font-size="8.2" fill="#d8d8d8" font-weight="400" text-anchor="middle" >-800 µs</text>
<text x="703" y="346.8" font-size="8.2" fill="#d8d8d8" font-weight="400" text-anchor="middle" >-600 µs</text>
<text x="761" y="346.8" font-size="8.2" fill="#d8d8d8" font-weight="400" text-anchor="middle" >-400 µs</text>
<text x="819" y="346.8" font-size="8.2" fill="#d8d8d8" font-weight="400" text-anchor="middle" >-200 µs</text>
<text x="877" y="346.8" font-size="8.2" fill="#d8d8d8" font-weight="400" text-anchor="middle" >0 s</text>
<text x="935" y="346.8" font-size="8.2" fill="#d8d8d8" font-weight="400" text-anchor="middle" >200 µs</text>
<text x="993" y="346.8" font-size="8.2" fill="#d8d8d8" font-weight="400" text-anchor="middle" >400 µs</text>
<text x="1051" y="346.8" font-size="8.2" fill="#d8d8d8" font-weight="400" text-anchor="middle" >600 µs</text>
<text x="1109" y="346.8" font-size="8.2" fill="#d8d8d8" font-weight="400" text-anchor="middle" >800 µs</text>
<rect x="816.5" y="337" width="4" height="10" fill="none" stroke="#c8c060" stroke-width="1"/>
<text x="1165" y="73.0" font-size="8.3" fill="#c4c490" font-weight="400" text-anchor="end" >80 mV</text>
<text x="1165" y="104.2" font-size="8.3" fill="#c4c490" font-weight="400" text-anchor="end" >60 mV</text>
<text x="1165" y="135.4" font-size="8.3" fill="#6e6818" font-weight="400" text-anchor="end" >40 mV</text>
<text x="1165" y="166.6" font-size="8.3" fill="#6e6818" font-weight="400" text-anchor="end" >20 mV</text>
<text x="1165" y="197.8" font-size="8.3" fill="#6e6818" font-weight="400" text-anchor="end" >0 V</text>
<text x="1165" y="229.0" font-size="8.3" fill="#6e6818" font-weight="400" text-anchor="end" >-20 mV</text>
<text x="1165" y="260.2" font-size="8.3" fill="#6e6818" font-weight="400" text-anchor="end" >-40 mV</text>
<text x="1165" y="291.4" font-size="8.3" fill="#6e6818" font-weight="400" text-anchor="end" >-60 mV</text>
<text x="1165" y="322.6" font-size="8.3" fill="#c4c490" font-weight="400" text-anchor="end" >-80 mV</text>
<path d="M1140 42.5 L1163.5 42.5 L1163.5 65.5 Z" fill="#6a6a6a"/>
<circle cx="1157.5" cy="47.5" r="2.6" fill="none" stroke="#c8c8c8" stroke-width="1.1"/><line x1="1155.6" y1="49.4" x2="1151" y2="54" stroke="#c8c8c8" stroke-width="1.2"/>
<rect x="782" y="30" width="190" height="1.4" fill="#c8c8c8"/>
<path d="M785.5 24.5 L781 24.5 L781 36 L785.5 36" fill="none" stroke="#c8c8c8" stroke-width="1.3"/>
<path d="M969 24.5 L973.5 24.5 L973.5 36 L969 36" fill="none" stroke="#c8c8c8" stroke-width="1.3"/>
<path d="M871.5 38.5 L883.5 38.5 L877.5 44.5 Z" fill="#f09040"/>
<rect x="873.3" y="26.8" width="8.4" height="9" fill="#2a2418" stroke="#c8a070" stroke-width="1.1"/>
<text x="877.5" y="34.6" font-size="7" fill="#e8d0b0" font-weight="700" text-anchor="middle" >T</text>
<path d="M873 22 L882 22 L877.5 25.5 Z" fill="#f0a060" opacity="0.8"/>
<line x1="645" y1="351" x2="645" y2="662" stroke="#333333" stroke-width="1.3" stroke-dasharray="1.5 4.7"/>
<line x1="703" y1="351" x2="703" y2="662" stroke="#333333" stroke-width="1.3" stroke-dasharray="1.5 4.7"/>
<line x1="761" y1="351" x2="761" y2="662" stroke="#333333" stroke-width="1.3" stroke-dasharray="1.5 4.7"/>
<line x1="819" y1="351" x2="819" y2="662" stroke="#333333" stroke-width="1.3" stroke-dasharray="1.5 4.7"/>
<line x1="877" y1="351" x2="877" y2="662" stroke="#333333" stroke-width="1.3" stroke-dasharray="1.5 4.7"/>
<line x1="935" y1="351" x2="935" y2="662" stroke="#333333" stroke-width="1.3" stroke-dasharray="1.5 4.7"/>
<line x1="993" y1="351" x2="993" y2="662" stroke="#333333" stroke-width="1.3" stroke-dasharray="1.5 4.7"/>
<line x1="1051" y1="351" x2="1051" y2="662" stroke="#333333" stroke-width="1.3" stroke-dasharray="1.5 4.7"/>
<line x1="1109" y1="351" x2="1109" y2="662" stroke="#333333" stroke-width="1.3" stroke-dasharray="1.5 4.7"/>
<line x1="587" y1="382.1" x2="1167" y2="382.1" stroke="#262626" stroke-width="1.3" stroke-dasharray="1.5 4.3"/>
<line x1="587" y1="413.20000000000005" x2="1167" y2="413.20000000000005" stroke="#262626" stroke-width="1.3" stroke-dasharray="1.5 4.3"/>
<line x1="587" y1="444.3" x2="1167" y2="444.3" stroke="#262626" stroke-width="1.3" stroke-dasharray="1.5 4.3"/>
<line x1="587" y1="475.40000000000003" x2="1167" y2="475.40000000000003" stroke="#262626" stroke-width="1.3" stroke-dasharray="1.5 4.3"/>
<line x1="587" y1="506.5" x2="1167" y2="506.5" stroke="#262626" stroke-width="1.3" stroke-dasharray="1.5 4.3"/>
<line x1="587" y1="537.6" x2="1167" y2="537.6" stroke="#262626" stroke-width="1.3" stroke-dasharray="1.5 4.3"/>
<line x1="587" y1="568.7" x2="1167" y2="568.7" stroke="#262626" stroke-width="1.3" stroke-dasharray="1.5 4.3"/>
<line x1="587" y1="599.8000000000001" x2="1167" y2="599.8000000000001" stroke="#262626" stroke-width="1.3" stroke-dasharray="1.5 4.3"/>
<line x1="587" y1="630.9000000000001" x2="1167" y2="630.9000000000001" stroke="#262626" stroke-width="1.3" stroke-dasharray="1.5 4.3"/>
<line x1="587" y1="506.8" x2="1153" y2="506.8" stroke="#a8a8a8" stroke-width="1.3" stroke-dasharray="3.5 3"/>
<text x="1165" y="385.8" font-size="7.8" fill="#b8b890" font-weight="400" text-anchor="end" >8 MHz</text>
<text x="1165" y="416.9" font-size="7.8" fill="#b8b890" font-weight="400" text-anchor="end" >6 MHz</text>
<text x="1165" y="448.0" font-size="7.8" fill="#b8b890" font-weight="400" text-anchor="end" >4 MHz</text>
<text x="1165" y="479.1" font-size="7.8" fill="#b8b890" font-weight="400" text-anchor="end" >2 MHz</text>
<text x="1165" y="541.3" font-size="7.8" fill="#b8b890" font-weight="400" text-anchor="end" >-2 MHz</text>
<text x="1165" y="572.4" font-size="7.8" fill="#b8b890" font-weight="400" text-anchor="end" >-4 MHz</text>
<text x="1165" y="603.5" font-size="7.8" fill="#b8b890" font-weight="400" text-anchor="end" >-6 MHz</text>
<text x="1165" y="634.6" font-size="7.8" fill="#b8b890" font-weight="400" text-anchor="end" >-8 MHz</text>
<path d="M587.00 507.00 L612.00 507.00 L612.50 495.00 L613.50 470.00 L615.00 445.00 L617.00 432.00 L619.00 429.00 L621.00 431.00 L624.00 438.00 L628.00 448.00 L633.00 456.00 L638.00 461.00 L645.00 462.50 L652.00 460.50 L659.00 459.50 L700.00 460.00 L747.50 460.00 L749.50 432.50 L751.50 460.00 L753.75 500.00 L756.00 535.00 L758.50 565.00 L761.00 580.00 L763.75 586.25 L766.00 584.00 L770.00 575.00 L776.00 563.00 L782.00 555.00 L788.00 550.50 L794.00 550.50 L802.00 553.50 L820.00 554.00 L875.00 553.75 L877.00 545.00 L880.00 522.00 L883.75 500.00 L886.00 493.00 L889.00 490.50 L892.00 491.50 L896.00 496.00 L901.00 502.00 L906.00 506.00 L912.00 508.00 L920.00 507.50 L960.00 506.00 L1005.00 506.00 L1006.50 480.00 L1008.00 440.00 L1009.50 414.00 L1011.00 409.00 L1013.00 411.00 L1016.00 420.00 L1020.00 433.00 L1025.00 449.00 L1029.00 461.00 L1032.50 466.00 L1036.00 466.00 L1042.00 462.50 L1052.50 459.50 L1100.00 460.00 L1140.30 460.00 L1142.50 422.00 L1144.40 455.50 L1148.60 511.00 L1152.80 566.70 L1155.50 580.00 L1158.30 587.50 L1162.50 583.00 L1166.70 569.40" fill="none" stroke="#cfcfa6" stroke-width="1.1" stroke-linejoin="round" />
<path d="M589.5 498 L615 498 L623.5 506.5 L615 515 L589.5 515 Z" fill="#1e1c0e" stroke="#8c8a70" stroke-width="1.2"/>
<text x="605" y="510" font-size="8.5" fill="#c8c6a8" font-weight="400" text-anchor="middle" >C 1-<tspan font-style="italic">f</tspan></text>
<path d="M870.5 351.5 L884 351.5 L884 364.5 L879.5 364.5 L877.5 368 L875.5 364.5 L870.5 364.5 Z" fill="#401008" stroke="#f0c8a0" stroke-width="1.2"/>
<text x="877.5" y="362" font-size="8" fill="#f8c8b0" font-weight="700" text-anchor="middle" >T</text>
<path d="M1153 506.5 L1162 500 L1162 513 Z" fill="#f4ec38"/><rect x="1161" y="505.8" width="6" height="1.8" fill="#f4ec38"/>
<rect x="1169.2" y="20" width="110.8" height="643" fill="#2f2f2f"/>
<rect x="1169.2" y="20" width="9.5" height="643" fill="#292929"/>
<rect x="1178.7" y="20" width="1.3" height="643" fill="#444444"/>
<rect x="1180" y="20" width="100" height="1.3" fill="#4a4a4a"/>
<text x="1229" y="31.4" font-size="10.6" fill="#f0f0f0" font-weight="700" text-anchor="middle" >Add New...</text>
<rect x="1185.5" y="38.5" width="41" height="23" rx="3.5" fill="#272727" stroke="#4a4a4a" stroke-width="1.4"/>
<text x="1206.0" y="53.4" font-size="9.6" fill="#e2e2e2" font-weight="400" text-anchor="middle" >Cursors</text>
<rect x="1233.5" y="38.5" width="41" height="23" rx="3.5" fill="#272727" stroke="#4a4a4a" stroke-width="1.4"/>
<text x="1254.0" y="53.4" font-size="9.6" fill="#e2e2e2" font-weight="400" text-anchor="middle" >Callout</text>
<rect x="1185.5" y="69.5" width="41" height="23" rx="3.5" fill="#272727" stroke="#4a4a4a" stroke-width="1.4"/>
<text x="1206.0" y="84.4" font-size="9.6" fill="#e2e2e2" font-weight="400" text-anchor="middle" >Measure</text>
<rect x="1233.5" y="69.5" width="41" height="23" rx="3.5" fill="#272727" stroke="#4a4a4a" stroke-width="1.4"/>
<text x="1254.0" y="84.4" font-size="9.6" fill="#e2e2e2" font-weight="400" text-anchor="middle" >Search</text>
<rect x="1185.5" y="100.5" width="41" height="23" rx="3.5" fill="#272727" stroke="#4a4a4a" stroke-width="1.4"/>
<text x="1206.0" y="109.9" font-size="9.6" fill="#e2e2e2" font-weight="400" text-anchor="middle" >Results</text>
<text x="1206.0" y="120.9" font-size="9.6" fill="#e2e2e2" font-weight="400" text-anchor="middle" >Table</text>
<rect x="1233.5" y="100.5" width="41" height="23" rx="3.5" fill="#272727" stroke="#4a4a4a" stroke-width="1.4"/>
<text x="1254.0" y="115.4" font-size="9.6" fill="#e2e2e2" font-weight="400" text-anchor="middle" >Plot</text>
<rect x="1181" y="128" width="99" height="1.2" fill="#4a4a4a"/>
<rect x="1185.5" y="133.0" width="41" height="23" rx="3.5" fill="#272727" stroke="#4a4a4a" stroke-width="1.4"/>
<rect x="1198.5" y="137" width="15.5" height="13.5" fill="none" stroke="#d0d0d0" stroke-width="1.5" stroke-dasharray="1.6 2"/>
<circle cx="1207.3" cy="142.3" r="3" fill="none" stroke="#e0e0e0" stroke-width="1.4"/>
<line x1="1205" y1="144.7" x2="1201.5" y2="148" stroke="#e0e0e0" stroke-width="1.6"/>
<path d="M1210.5 146.5 L1210.5 153 L1212 151.5 L1213.3 154 L1214.5 153.4 L1213.2 151 L1215.3 150.8 Z" fill="#d8d8d8"/>
<rect x="1233.5" y="133.0" width="41" height="23" rx="3.5" fill="#272727" stroke="#4a4a4a" stroke-width="1.4"/>
<text x="1254.0" y="147.9" font-size="9.6" fill="#e2e2e2" font-weight="400" text-anchor="middle" >More...</text>
<rect x="1181" y="162.5" width="99" height="1.2" fill="#4a4a4a"/>
<circle cx="1174.6" cy="335.8" r="1.5" fill="#d8d8d8"/>
<circle cx="1174.6" cy="341.8" r="1.5" fill="#d8d8d8"/>
<circle cx="1174.6" cy="347.5" r="1.5" fill="#d8d8d8"/>
<rect x="0" y="664" width="1280" height="56" fill="#323232"/>
<rect x="2" y="665.8" width="60" height="51.700000000000045" rx="2.5" fill="#d3d3d3"/>
<path d="M2 668.3 Q2 665.8 4.5 665.8 L59.5 665.8 Q62 665.8 62 668.3 L62 679.3 L2 679.3 Z" fill="#f4ec3c"/>
<text x="4.8" y="677.5" font-size="10.5" fill="#3a3820" font-weight="400" text-anchor="start" >Ch 1</text>
<text x="5.6" y="689" font-size="9.3" fill="#3c3c3c" font-weight="400" text-anchor="start" >20 mV/div</text>
<text x="5.6" y="701.5" font-size="9.1" fill="#3c3c3c" font-weight="400" text-anchor="start" >10 dB/div</text>
<text x="5.6" y="714" font-size="9.3" fill="#3c3c3c" font-weight="400" text-anchor="start" >10 GHz</text>
<rect x="65" y="665.8" width="60" height="51.700000000000045" rx="2.5" fill="#d3d3d3"/>
<path d="M65 668.3 Q65 665.8 67.5 665.8 L122.5 665.8 Q125 665.8 125 668.3 L125 678.8 L65 678.8 Z" fill="#4a4830"/>
<text x="67.8" y="677.0" font-size="10.5" fill="#8e8b5a" font-weight="400" text-anchor="start" >Ch 1 - <tspan font-style="italic">f</tspan></text>
<text x="68.6" y="689" font-size="9.4" fill="#3c3c3c" font-weight="400" text-anchor="start" >2 MHz/div</text>
<rect x="348.7" y="666.3" width="25.6" height="50.8" rx="3" fill="#2f2f2f" stroke="#5a5a5a" stroke-width="1.4"/>
<rect x="351" y="671" width="21" height="2.2" fill="#62bdb4"/>
<text x="361.5" y="699.5" font-size="13.5" fill="#d6d6d6" font-weight="400" text-anchor="middle" >2</text>
<rect x="378.7" y="666.3" width="25.6" height="50.8" rx="3" fill="#2f2f2f" stroke="#5a5a5a" stroke-width="1.4"/>
<rect x="381" y="671" width="21" height="2.2" fill="#c9506a"/>
<text x="391.5" y="699.5" font-size="13.5" fill="#d6d6d6" font-weight="400" text-anchor="middle" >3</text>
<rect x="408.7" y="666.3" width="25.6" height="50.8" rx="3" fill="#2f2f2f" stroke="#5a5a5a" stroke-width="1.4"/>
<rect x="411" y="671" width="21" height="2.2" fill="#b6be74"/>
<text x="421.5" y="699.5" font-size="13.5" fill="#d6d6d6" font-weight="400" text-anchor="middle" >4</text>
<rect x="438.7" y="666.3" width="25.6" height="50.8" rx="3" fill="#2f2f2f" stroke="#5a5a5a" stroke-width="1.4"/>
<rect x="441" y="671" width="21" height="2.2" fill="#cc9464"/>
<text x="451.5" y="699.5" font-size="13.5" fill="#d6d6d6" font-weight="400" text-anchor="middle" >5</text>
<rect x="468.7" y="666.3" width="25.6" height="50.8" rx="3" fill="#2f2f2f" stroke="#5a5a5a" stroke-width="1.4"/>
<rect x="471" y="671" width="21" height="2.2" fill="#4a3c8c"/>
<text x="481.5" y="699.5" font-size="13.5" fill="#d6d6d6" font-weight="400" text-anchor="middle" >6</text>
<rect x="498.7" y="666.3" width="25.6" height="50.8" rx="3" fill="#2f2f2f" stroke="#5a5a5a" stroke-width="1.4"/>
<rect x="501" y="671" width="21" height="2.2" fill="#b57888"/>
<text x="511.5" y="699.5" font-size="13.5" fill="#d6d6d6" font-weight="400" text-anchor="middle" >7</text>
<rect x="528.7" y="666.3" width="25.6" height="50.8" rx="3" fill="#2f2f2f" stroke="#5a5a5a" stroke-width="1.4"/>
<rect x="531" y="671" width="21" height="2.2" fill="#52b497"/>
<text x="541.5" y="699.5" font-size="13.5" fill="#d6d6d6" font-weight="400" text-anchor="middle" >8</text>
<rect x="570.2" y="666.3" width="25.1" height="50.8" rx="3" fill="#2f2f2f" stroke="#5a5a5a" stroke-width="1.4"/>
<rect x="572.5" y="671" width="20.5" height="2.2" fill="#c4843e"/>
<text x="582.8" y="687.6" font-size="9.8" fill="#d6d6d6" font-weight="400" text-anchor="middle" >Add</text>
<text x="582.8" y="699.6" font-size="9.8" fill="#d6d6d6" font-weight="400" text-anchor="middle" >New</text>
<text x="582.8" y="711.3" font-size="9.8" fill="#d6d6d6" font-weight="400" text-anchor="middle" >Math</text>
<rect x="599.7" y="666.3" width="25.1" height="50.8" rx="3" fill="#2f2f2f" stroke="#5a5a5a" stroke-width="1.4"/>
<rect x="602" y="671" width="20.5" height="2.2" fill="#c4c4c4"/>
<text x="612.2" y="687.6" font-size="9.8" fill="#d6d6d6" font-weight="400" text-anchor="middle" >Add</text>
<text x="612.2" y="699.6" font-size="9.8" fill="#d6d6d6" font-weight="400" text-anchor="middle" >New</text>
<text x="612.2" y="711.3" font-size="9.8" fill="#d6d6d6" font-weight="400" text-anchor="middle" >Ref</text>
<rect x="629.7" y="666.3" width="25.1" height="50.8" rx="3" fill="#2f2f2f" stroke="#5a5a5a" stroke-width="1.4"/>
<rect x="632" y="671" width="20.5" height="2.2" fill="#8458b4"/>
<text x="642.2" y="687.6" font-size="9.8" fill="#d6d6d6" font-weight="400" text-anchor="middle" >Add</text>
<text x="642.2" y="699.6" font-size="9.8" fill="#d6d6d6" font-weight="400" text-anchor="middle" >New</text>
<text x="642.2" y="711.3" font-size="9.8" fill="#d6d6d6" font-weight="400" text-anchor="middle" >Bus</text>
<rect x="670.7" y="666.3" width="25.1" height="50.8" rx="3" fill="#2f2f2f" stroke="#5a5a5a" stroke-width="1.4"/>
<rect x="673" y="671" width="20.5" height="2.2" fill="#505050"/>
<text x="683.2" y="698.6" font-size="9.6" fill="#d6d6d6" font-weight="400" text-anchor="middle" >DVM</text>
<rect x="703.7" y="666.3" width="25.1" height="50.8" rx="3" fill="#2f2f2f" stroke="#5a5a5a" stroke-width="1.4"/>
<rect x="706" y="671" width="20.5" height="2.2" fill="#505050"/>
<text x="716.2" y="698.6" font-size="9.6" fill="#d6d6d6" font-weight="400" text-anchor="middle" >AFG</text>
<rect x="562" y="664" width="1.5" height="56" fill="#262626"/>
<rect x="663.5" y="664" width="1.5" height="56" fill="#262626"/>
<rect x="736.5" y="664" width="1.5" height="56" fill="#262626"/>
<rect x="1207" y="664" width="1.5" height="56" fill="#262626"/>
<rect x="744" y="666.8" width="105.5" height="50.10000000000002" rx="2.5" fill="#d3d3d3"/>
<path d="M744 669.3 Q744 666.8 746.5 666.8 L847.0 666.8 Q849.5 666.8 849.5 669.3 L849.5 678.5999999999999 L744 678.5999999999999 Z" fill="#555555"/>
<text x="746.8" y="676.8" font-size="10.3" fill="#ececec" font-weight="400" text-anchor="start" >Spectrum</text>
<text x="746.8" y="688.6" font-size="9.25" fill="#3c3c3c" font-weight="400" text-anchor="start" >CF: 2.40000000 GHz</text>
<text x="746.8" y="701.2" font-size="9.3" fill="#3c3c3c" font-weight="400" text-anchor="start" >Span: 20.0000 MHz</text>
<text x="746.8" y="713.5" font-size="9.0" fill="#3c3c3c" font-weight="400" text-anchor="start" >RBW: 100 kHz</text>
<rect x="854.4" y="666.8" width="131.2" height="50.10000000000002" rx="2.5" fill="#d3d3d3"/>
<path d="M854.4 669.3 Q854.4 666.8 856.9 666.8 L983.0999999999999 666.8 Q985.5999999999999 666.8 985.5999999999999 669.3 L985.5999999999999 678.6999999999999 L854.4 678.6999999999999 Z" fill="#555555"/>
<text x="857.1999999999999" y="676.9" font-size="10.3" fill="#ececec" font-weight="400" text-anchor="start" >Horizontal</text>
<text x="857.0" y="688.7" font-size="9.0" fill="#3c3c3c" font-weight="400" text-anchor="start" >200 µs/div</text>
<text x="856.6" y="701.2" font-size="8.96" fill="#3c3c3c" font-weight="400" text-anchor="start" >SR: 625 MS/s</text>
<text x="856.6" y="713.1" font-size="9.3" fill="#3c3c3c" font-weight="400" text-anchor="start" >RL: 1.25 Mpts</text>
<text x="928.0" y="688.7" font-size="9.2" fill="#3c3c3c" font-weight="400" text-anchor="start" >2 ms</text>
<text x="928.0" y="701.2" font-size="9.2" fill="#3c3c3c" font-weight="400" text-anchor="start" >1.6 ns/pt</text>
<text x="936.9" y="713.1" font-size="9.2" fill="#3c3c3c" font-weight="400" text-anchor="start" >50%</text>
<rect x="928" y="706.8" width="5" height="4.6" rx="1" fill="#2a2a1a"/>
<rect x="991" y="666.8" width="105" height="50.10000000000002" rx="2.5" fill="#d3d3d3"/>
<path d="M991 669.3 Q991 666.8 993.5 666.8 L1093.5 666.8 Q1096 666.8 1096 669.3 L1096 678.6999999999999 L991 678.6999999999999 Z" fill="#555555"/>
<text x="993.8" y="676.9" font-size="10.3" fill="#ececec" font-weight="400" text-anchor="start" >Trigger</text>
<text x="1038" y="688.7" font-size="9.2" fill="#3c3c3c" font-weight="400" text-anchor="start" >0 Hz</text>
<rect x="993.5" y="681" width="19" height="9.5" rx="4.5" fill="#9c9a3c" stroke="#5a5820" stroke-width="1"/>
<text x="1003" y="688.6" font-size="8" fill="#3a3810" font-weight="400" text-anchor="middle" >C1</text>
<path d="M1020 688.5 L1024 688.5 L1028 683 L1032 683" fill="none" stroke="#505050" stroke-width="1"/>
<rect x="1101" y="666.8" width="98" height="50.10000000000002" rx="2.5" fill="#d3d3d3"/>
<path d="M1101 669.3 Q1101 666.8 1103.5 666.8 L1196.5 666.8 Q1199 666.8 1199 669.3 L1199 678.6999999999999 L1101 678.6999999999999 Z" fill="#555555"/>
<text x="1103.8" y="676.9" font-size="10.3" fill="#ececec" font-weight="400" text-anchor="start" >Acquisition</text>
<text x="1103.8" y="688.7" font-size="9.3" fill="#3c3c3c" font-weight="400" text-anchor="start" >Auto,</text>
<text x="1157.5" y="688.7" font-size="9.5" fill="#3c3c3c" font-weight="400" text-anchor="start" >Analyze</text>
<text x="1103.8" y="701.2" font-size="9.25" fill="#3c3c3c" font-weight="400" text-anchor="start" >Sample: 12 bits</text>
<text x="1103.8" y="713.1" font-size="9.3" fill="#3c3c3c" font-weight="400" text-anchor="start" >643 Acqs</text>
<rect x="1215.4" y="666.7" width="58.6" height="23" rx="3" fill="#22c322"/>
<text x="1244.5" y="681" font-size="8.9" fill="#eaf8e6" font-weight="700" text-anchor="middle" >Triggered</text>
</svg></body></html>
